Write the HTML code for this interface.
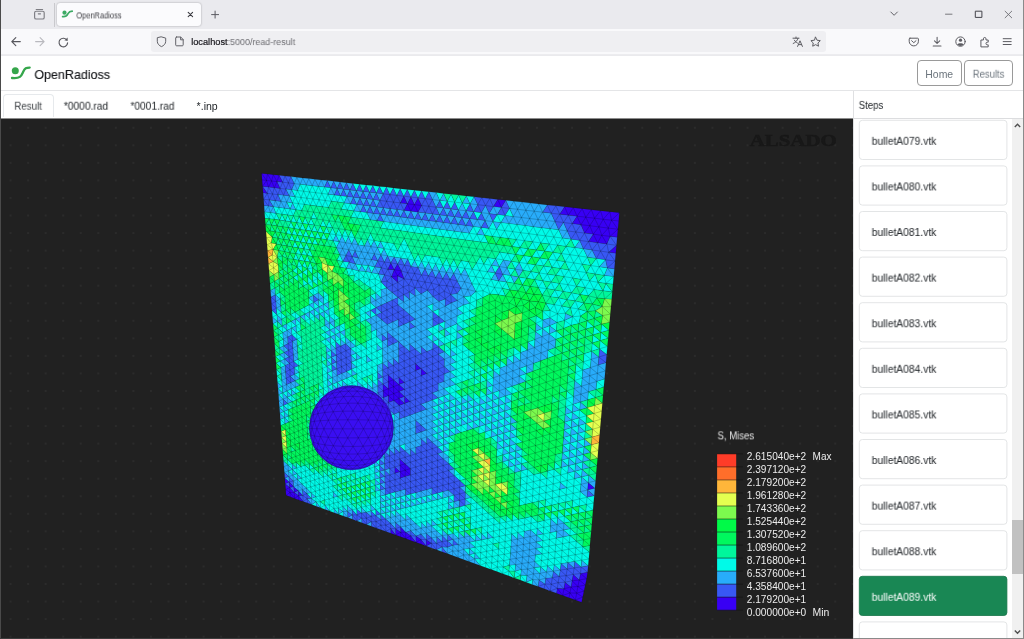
<!DOCTYPE html>
<html lang="en">
<head>
<meta charset="utf-8">
<title>OpenRadioss</title>
<style>
*{box-sizing:border-box;margin:0;padding:0}
html,body{width:1024px;height:639px;overflow:hidden;background:#fff}
body{position:relative;font-family:"Liberation Sans","DejaVu Sans",sans-serif;color:#212529}
.abs{position:absolute}
.t{position:absolute;white-space:nowrap;line-height:1;transform-origin:0 0;will-change:transform}
#tabbar{left:0;top:0;width:1024px;height:29px;background:#eaeaee}
#tab{left:57px;top:3px;width:144px;height:23px;background:#fbfbfd;border-radius:3px;box-shadow:0 0 2px rgba(0,0,0,.35)}
#navbar{left:0;top:29px;width:1024px;height:27px;background:#f9f9fb;border-bottom:1px solid #eaeaed;box-shadow:inset 0 -2px 0 -1px #ececef}
#url{left:151px;top:31px;width:675px;height:21px;background:#efeff2;border-radius:3px}
#hdr{left:0;top:56px;width:1024px;height:35px;background:#fff;border-bottom:1px solid #e4e5e7}
.btn{position:absolute;top:60px;height:26px;border:1px solid #9a9a9a;border-radius:4px;background:#fff}
#tabs{left:0;top:91px;width:853px;height:27px;background:#fff}
#acttab{left:3px;top:94px;width:51px;height:23px;border:1px solid #e6e9ec;border-bottom:none;border-radius:4px 4px 0 0;background:#fff}
#canvas{left:0;top:118px;width:853px;height:521px;background-color:#212121;background-image:radial-gradient(circle,#2b2b2b .7px,rgba(43,43,43,0) 1.4px);background-size:17.55px 17.55px;background-position:1.8px 1px;overflow:hidden}
#side{left:853px;top:91px;width:171px;height:548px;background:#fff;border-left:1px solid #dfe0e2}
#sidehdr{left:853px;top:91px;width:171px;height:28px;border-bottom:1px solid #dcdddf;border-left:1px solid #dfe0e2;background:#fff}
.it{position:absolute;left:859px;width:148px;height:39px;border:1px solid #d6d8da;border-radius:4px;background:#fff}
.it.on{background:#198754;border-color:#157347}
#sb{left:1012px;top:119px;width:11px;height:520px;background:#f0f0f0}
#thumb{left:1012px;top:520px;width:11px;height:54px;background:#c1c1c1}
</style>
</head>
<body>
<!-- Browser tab strip -->
<div id="tabbar" class="abs"></div>
<div class="abs" style="left:54px;top:3px;width:1px;height:24px;background:#c9c9cd"></div>
<div id="tab" class="abs"></div>
<div id="navbar" class="abs"></div>
<div id="url" class="abs"></div>
<svg class="abs" style="left:0;top:0" width="1024" height="56" viewBox="0 0 1024 56" fill="none" stroke-linecap="round" stroke-linejoin="round">
  <g stroke="#7d7d83" stroke-width="1.15">
    <rect x="34.6" y="11.2" width="9.6" height="7.8" rx="1.6"/>
    <path d="M36.2 9.5h6.4M38.3 13.8h2.2"/>
  </g>
  <circle cx="64.5" cy="12.7" r="2.1" fill="#3caa64"/>
  <path d="M62.6 16.6c4.2 .5 4.6-1.4 5.6-3.3s1.6-2.1 4-2.1" stroke="#3caa64" stroke-width="1.7"/>
  <path d="M188.2 12.3l4.4 4.4M192.6 12.3l-4.4 4.4" stroke="#3a3a40" stroke-width="1.1"/>
  <path d="M211.6 14.6h7M215.1 11.1v7" stroke="#5b5b62" stroke-width="1"/>
  <path d="M20.3 41.6h-8M15.8 37.6l-4 4 4 4" stroke="#57575d" stroke-width="1.15"/>
  <path d="M35.6 41.6h8M40.1 37.6l4 4-4 4" stroke="#b9b9be" stroke-width="1.1"/>
  <path d="M67 40.3a4.3 4.3 0 1 0 .6 2.6" stroke="#57575d" stroke-width="1.15"/>
  <path d="M67.6 37.4v3.2h-3.2z" fill="#57575d" stroke="none"/>
  <path d="M161.5 36.9l4.2 1.2v3.2c0 2.6-2 4.4-4.2 5.3-2.2-.9-4.2-2.7-4.2-5.3v-3.2z" stroke="#626268" stroke-width="1"/>
  <path d="M176.6 37h4.1l2.500 2.500v5.400a.9 .9 0 0 1-.9 .9h-5.700a.9 .9 0 0 1-.9-.9v-7a.9 .9 0 0 1 .9-.9zM180.600 37.200v2.600h2.500" stroke="#626268" stroke-width="1"/>
  <g stroke="#5c5c62" stroke-width="1">
    <path d="M793 38.2h6M796 37v1.200M798 38.300c-.6 2.400-2.400 4.200-4.800 5.200M794.400 40.200c.7 1.300 1.800 2.300 3.100 2.900"/>
    <path d="M797.600 46.400l2.400-5.600 2.400 5.600M798.500 44.600h3"/>
  </g>
  <path d="M815.600 37.200l1.450 3 3.250 .45-2.350 2.300 .55 3.250-2.900-1.550-2.900 1.550 .55-3.250-2.350-2.300 3.250-.45z" stroke="#5c5c62" stroke-width="1"/>
  <path d="M910 38.200h7.600a.8 .8 0 0 1 .8 .8v2.300a4.600 4.600 0 0 1-9.200 0v-2.300a.8 .8 0 0 1 .8-.8zM911.600 40.700l2.200 2 2.200-2" stroke="#5c5c62" stroke-width="1"/>
  <path d="M937.100 37.200v6M934.500 40.900l2.600 2.600 2.600-2.600M933.200 45.900h7.800" stroke="#5c5c62" stroke-width="1.05"/>
  <circle cx="960.500" cy="41.600" r="4.700" stroke="#5c5c62" stroke-width="1"/>
  <circle cx="960.500" cy="40.200" r="1.600" fill="#5c5c62"/>
  <path d="M957.400 44.600c.6-1.700 5.600-1.700 6.200 0-1.500 1.900-4.700 1.900-6.200 0z" fill="#5c5c62"/>
  <path d="M981.300 40h2.100v-1.200a1.300 1.300 0 0 1 2.600 0v1.200h2.200v2.200h-.9a1.300 1.300 0 0 0 0 2.600h.9v2.100h-6.900z" stroke="#5c5c62" stroke-width="1"/>
  <path d="M1003.200 38.700h8M1003.200 41.600h8M1003.200 44.500h8" stroke="#5c5c62" stroke-width="1"/>
  <path d="M890.800 12l3.300 3.300 3.300-3.300" stroke="#626268" stroke-width="1"/>
  <path d="M945.500 14.200h6.500" stroke="#77777c" stroke-width="1"/>
  <rect x="975.700" y="11.200" width="6.200" height="6.200" stroke="#44444a" stroke-width="1"/>
  <path d="M1005.100 11.200l6.600 6.600M1011.700 11.200l-6.600 6.600" stroke="#6c6c72" stroke-width=".9"/>
</svg>

<!-- Page header -->
<div id="hdr" class="abs"></div>
<svg class="abs" style="left:8px;top:62px" width="24" height="20" viewBox="8 62 24 20" fill="none">
  <circle cx="15.300" cy="70.800" r="3.500" fill="#35a64b"/>
  <path d="M12 78c8.500 1 9.500-2.500 11.200-6.200s3-4.200 6.500-4.200" stroke="#35a64b" stroke-width="2.300" stroke-linecap="round"/>
</svg>
<div class="btn" style="left:917px;width:45px"></div>
<div class="btn" style="left:964px;width:49px"></div>

<!-- Tabs -->
<div id="tabs" class="abs"></div>
<div id="acttab" class="abs"></div>

<!-- 3D viewport -->
<div id="canvas" class="abs">
<div class="abs" style="left:0;top:0;width:853px;height:1px;background:#8c8c8c"></div>
<svg class="abs" style="left:0;top:-118px" width="853" height="639" viewBox="0 0 853 639">
<g stroke="#000" stroke-opacity=".14" stroke-width=".78" stroke-linejoin="round">
<path fill="#3800f4" d="M280.1 188.4l-5.8-.6 2.7-6.2zM273.3 174.7l5.8 .6-2.1 6.3zM611.5 220.2l-1.7-8.5 9.6 1.1zM591.3 209.7l-5.5 7.5-3.6-8.5zM598.9 226.9l9.4 1.2-6.5 7.2zM421.1 375.8l0-7.3 5.7 5zM579.2 580l1.3-6.5 6.1 5.2zM267.4 193.4l-4.3-.6-.5-6.4zM279.1 175.3l3.6 6.9-5.7-.6zM266.5 180.5l-4.4-.6-.5-6.5zM262.1 179.9l4.4 .6-3.9 5.9zM267.4 174l-.9 6.5-4.9-7.1zM271.6 181l1.7-6.3 3.7 6.9zM274.3 187.8l-2.7-6.8 5.4 .6zM271.6 181l-4.2-7 5.9 .7zM267.4 174l4.2 7-5.1-.5zM266.5 180.5l2 6.6-5.9-.7zM268.5 187.1l3.1-6.1 2.7 6.8zM271.6 181l-3.1 6.1-2-6.6zM294.2 492.5l-.5-5.8 4.5 3.8zM611.5 220.2l6.4 9-9.6-1.1zM608.3 228.1l1.8 8.3-8.3-1.1zM617.9 229.2l-7.8 7.2-1.8-8.3zM610.1 236.4l7.8-7.2-.7 8zM564.6 206.8l8.7 .9-5 7.5zM573.3 207.7l3.7 8.5-8.7-1zM585.8 217.2l-8.8-1 5.2-7.5zM577 216.2l-3.7-8.5 8.9 1zM609.8 211.7l-6.6 7.6-2.7-8.6zM611.5 220.2l-8.3-.9 6.6-7.6zM603.2 219.3l8.3 .9-3.2 7.9zM598.9 226.9l4.3-7.6 5.1 8.8zM593.2 234.2l5.7-7.3 2.9 8.4zM404.4 382.4l-5.4 2.2-.1-7.1zM415.4 370.8l0-7.2 5.7 4.9zM410.9 211.3l-7-.9 3.5-6.6zM585.3 585l-6.1-5 7.4-1.3zM571 587l-7.1 1.8 1.1-6.6zM563.9 588.8l7.1-1.8-1 5.9zM421 544.1l0-4.6 5.2 6.5zM421 539.5l0 4.6-5.1-1.8zM285.7 489.5l4.3 3-3.9 2.8zM289.6 487.5l-3.9 2-.5-5.7zM289.6 487.5l.4 5-4.3-3zM290 492.5l-.4-5 4.6 5zM618.7 221l-7.2-.8 7.9-7.4zM618.7 221l-.8 8.2-6.4-9zM559.7 214.2l4.9-7.4 3.7 8.4zM580.9 224.7l-8.8-1.1 4.9-7.4zM580.9 224.7l-3.9-8.5 8.8 1zM594.6 218.2l8.6 1.1-4.3 7.6zM591.3 209.7l3.3 8.5-8.8-1zM594.6 218.2l-3.3-8.5 9.2 1zM603.2 219.3l-8.6-1.1 5.9-7.5zM616.5 245.3l-.7 7.9-7.1-.9zM382.9 384l5.4 4.8-5.2 2.1zM388.1 374.8l5.4 4.9-5.3 2.1zM399.1 398.5l0-6.9 5.4 4.9zM404.5 389.4l-5.4 2.2-.1-7zM400.4 202.9l3.4-6.7 3.6 7.6zM580.5 573.5l7.1-1.2-1 6.4zM575.4 600l7.3-3-1.1 5.3zM575.4 600l-6.4-2.3 1-4.8zM577.9 586.5l7.4-1.5-1.3 6.1zM585.3 585l-7.4 1.5 1.3-6.5zM569 597.7l-6.3-2.2 7.3-2.6zM562.7 595.5l1.2-6.7 6.1 4.1zM557.3 588.3l5.4 7.2-6.2-2.3zM563.9 588.8l-1.2 6.7-5.4-7.2zM426.2 539.7l5.2 3.5-5.2 2.8zM390.8 533.2l-.1-4.6 5 6.4zM302.8 495.5l-4.2 .1-.4-5.1zM298.6 495.6l4.6 5.9-4.4-1.6zM294.6 498.4l-4.6-5.9 4.2 0zM294.6 498.4l4-2.8 .2 4.3zM298.6 495.6l-4 2.8-.4-5.9zM593.2 234.2l-3.4-8.5 9.1 1.2zM589.8 225.7l4.8-7.5 4.3 8.7zM589.8 225.7l3.4 8.5-8.7-1.1zM580.9 224.7l8.9 1-5.3 7.4zM589.8 225.7l-8.9-1 4.9-7.5zM594.6 218.2l-4.8 7.5-4-8.5zM610.1 236.4l-3.2 7.6-5.1-8.7zM388.3 388.8l.1 6.9-5.3-4.8zM399.1 391.6l-5.5-4.9 5.4-2.1zM393.6 386.7l-5.3 2.1-.1-7zM393.5 379.7l.1 7-5.4-4.9zM393.6 386.7l-.1-7 5.5 4.9zM394.1 269.7l7.2 1.2-3.6 5zM401.3 270.9l-7.2-1.2 3.5-5.7zM391.5 276.7l2.6-7 3.6 6.2zM397.8 282.4l-6.3-5.7 6.2-.8zM579.2 580l-7.1 .8 1.1-6.4zM577.9 586.5l-5.8-5.7 7.1-.8zM572.1 580.8l5.8 5.7-6.9 .5zM571 587l5.7 6.2-6.7-.3zM577.9 586.5l-1.2 6.7-5.7-6.2zM576.7 593.2l-1.3 6.8-5.4-7.1zM575.4 600l1.3-6.8 6 3.8zM582.7 597l-6-3.8 7.3-2.1zM576.7 593.2l1.2-6.7 6.1 4.6zM415.9 536l5.1 3.5-5.1 2.8zM588.2 482.6l6.7 5.7-7.3 1.7zM290 492.5l.3 4.3-4.2-1.5zM294.6 498.4l-4.3-1.6-.3-4.3zM289.6 487.5l-.4-5.4 4.5 4.6zM284.8 478.1l4.4 4-4 1.7zM597.6 242.8l-4.4-8.6 8.6 1.1zM597.6 242.8l-9.1-1.2 4.7-7.4zM606.9 244l-9.3-1.2 4.2-7.5zM393.7 393.6l-5.3 2.1-.1-6.9zM393.6 386.7l.1 6.9-5.4-4.8zM393.7 393.6l-.1-6.9 5.5 4.9zM393.7 393.6l5.4-2 0 6.9zM388.4 395.7l-5.2 2.1-.1-6.9zM410 401.4l-5.4 2-.1-6.9zM401.3 270.9l2.8 8-6.4-3zM414.4 204.6l3.6 7.6-7.1-.9zM414.4 204.6l-3.5 6.7-3.5-7.5zM410.9 197l3.5 7.6-7-.8zM414.4 204.6l3.6-6.7 3.6 7.6zM418 212.2l-3.6-7.6 7.2 .9zM395.6 528.7l5.1 3.5-5 2.8zM400.7 532.2l0 4.6-5-1.8zM400.7 536.8l0-4.6 5 6.4zM405.2 476.6l0-6.4 5.3 4.9zM405.2 470.2l5.2-1.6 .1 6.5zM393.8 400.6l-.1-7 5.4 4.9zM393.7 393.6l.1 7-5.4-4.9zM390.8 262.8l3.3 6.9-6.3-.3zM410.8 540.4l0-4.6 5.1 6.5zM410.8 535.8l0 4.6-5.1-1.8zM400 471.8l-5.1 1.5-.1-6.3zM405.2 476.6l-5.2-4.8 5.2-1.6zM400.1 478.2l-.1-6.4 5.2 4.8zM405.2 470.2l-5.2 1.6-.1-6.4zM399.8 458.9l5.3 4.9-5.2 1.6zM405.1 463.8l.1 6.4-5.3-4.8zM405.1 463.8l5.3 4.8-5.2 1.6zM501.4 207.5l-3.7-8.1 8.1 .9zM493.4 206.6l4.3-7.2 3.7 8.1zM404.6 403.4l-5.4 2-.1-6.9zM399.2 405.4l-5.4-4.8 5.3-2.1zM393.8 400.6l-5.3 2-.1-6.9zM405.7 532.3l-5-.1-.1-5.4zM405.7 532.3l5.1 3.5-5.1 2.8zM400.7 532.2l5 .1 0 6.3z"/>
<path fill="#3858f4" d="M426.8 380.8l-.1 7.2-5.6-5zM426.7 388l5.8-2.2-.1 7.2zM432.5 385.8l-5.8 2.2 .1-7.2zM453.4 287l3.9 6.6-6.5 .9zM432.5 378.5l-5.7 2.3 0-7.3zM432.5 371.3l0 7.2-5.7-5zM432.5 378.5l0 7.3-5.7-5zM432.5 385.8l5.7 5-5.8 2.2zM459.9 480.6l-5.7 1.6 .1-6.6zM269.4 199.9l-2-6.5 5.1 .6zM269.4 199.9l-1 6.2-4.8-6.8zM267.4 193.4l2 6.5-5.8-.6zM285.5 371.9l-.4-6.5 4.8 4.5zM426.8 380.8l-5.7-5 5.7-2.3zM421.1 375.8l5.7 5-5.7 2.2zM415.5 378l5.6-2.2 0 7.2zM426.8 366.2l-5.7 2.3 0-7.2zM426.8 366.2l5.7 5.1-5.7 2.2zM421.1 368.5l5.7-2.3 0 7.3zM421.1 375.8l-5.7-5 5.7-2.3zM415.4 370.8l.1 7.2-5.6-4.9zM415.4 370.8l5.7 5-5.6 2.2zM415.4 356.3l5.7-2.4 0 7.4zM376.3 193l-6.7-.7 3.2-6.7zM366.5 198.8l-6.6-.8 3.1-6.5zM366.5 198.8l3.1-6.5 3.5 7.3zM366.1 184.9l3.5 7.4-6.6-.8zM356.4 190.8l3.1-6.6 3.5 7.3zM356.4 190.8l3.5 7.2-6.5-.7zM356.4 190.8l-6.5-.8 3-6.5zM398.2 319.6l5.7 4.8-5.6 2.5zM580.5 573.5l-1.3 6.5-6-5.6zM550.3 591l7-2.7-.8 4.9zM557.3 588.3l-7 2.7 1-6.7zM559.2 576.4l-6.9 1.3 1-6.5zM452.9 545.3l-5.5 1.9 .1-6.3zM447.4 547.2l-5.3-5.7 5.4-.6zM432.5 378.5l5.7 5.1-5.7 2.2zM438.2 383.6l0 7.2-5.7-5zM426.7 388l-5.6 2.1 0-7.1zM454.2 482.2l-5.6-5 5.7-1.6zM448.6 477.2l.1-6.7 5.6 5.1zM263.1 192.8l4.3 .6-3.8 5.9zM268.4 206.1l-4.3-.4-.5-6.4zM269.4 199.9l4 6.9-5-.7zM282.7 182.2l-3.6-6.9 5.9 .7zM282.7 182.2l-2.6 6.2-3.1-6.8zM282.7 182.2l3.2 6.9-5.8-.7zM268.5 187.1l-1.1 6.3-4.8-7zM267.4 193.4l1.1-6.3 4 6.9zM268.5 187.1l5.8 .7-1.8 6.2zM567.2 230.9l4.9-7.3 3.7 8.4zM577 216.2l-4.9 7.4-3.8-8.4zM584.5 233.1l-4.8 7.3-3.9-8.4zM608.7 252.3l7.1 .9-.7 7.9zM598.8 357l7.2 5.7-7.9 2.4zM509.5 208.4l-8.1-.9 4.4-7.2zM393.4 372.6l5.4-2.2 .1 7.1zM393.3 365.5l.1 7.1-5.5-4.8zM393.4 372.6l-.1-7.1 5.5 4.9zM410 394.4l0 7-5.5-4.9zM404.3 375.3l.1 7.1-5.5-4.9zM398.8 370.4l5.5 4.9-5.4 2.2zM404.3 375.3l0-7.1 5.6 4.9zM404.3 368.2l0 7.1-5.5-4.9zM421.1 353.9l5.7 5-5.7 2.4zM426.8 358.9l0 7.3-5.7-4.9zM426.8 351.5l-5.7 2.4 0-7.3zM426.8 351.5l0 7.4-5.7-5zM426.8 358.9l0-7.4 5.8 5.1zM421.1 368.5l-5.7-4.9 5.7-2.3zM415.4 363.6l0-7.3 5.7 5zM415.4 356.3l0 7.3-5.6-5zM409.7 351.4l5.7 4.9-5.6 2.3zM376.3 193l3.2-6.6 3.6 7.4zM386.6 201.3l-6.8-.9 3.3-6.6zM376.3 193l3.5 7.4-6.7-.8zM342.9 261.6l2.9-6.1 3.3 6.7zM377.7 260.8l3.5 6.9-6.5-.8zM377.7 260.8l-6.4-1.1 3-6zM346.4 182.7l3.5 7.3-6.4-.7zM346.9 196.5l3-6.5 3.5 7.3zM346.9 196.5l-6.4-.8 3-6.4zM386.4 187.1l3.5 7.5-6.8-.8zM389.9 194.6l-3.3 6.7-3.5-7.5zM386.6 201.3l3.3-6.7 3.6 7.5zM389.9 194.6l6.9 .8-3.3 6.7zM396.8 195.4l-6.9-.8 3.4-6.7zM356.8 204.5l3.1-6.5 3.5 7.3zM403.8 317l.1 7.4-5.7-4.8zM403.9 324.4l-.1-7.4 5.8 4.9zM450 279.3l-7.3-.5 3.6-6.5zM431.4 283l7.7 2.1-5.2 4.2zM398 297.4l5.7-2.8 .1 7.5zM409.5 314.4l-5.7 2.6 0-7.4zM403.8 317l5.7-2.6 .1 7.5zM409.6 299.5l-5.9-4.9 5.7-2.5zM574.1 567.9l6.4 5.6-7.3 .9zM581.1 566.9l-7 1 .6-6.6zM574.1 567.9l7-1-.6 6.6zM567.2 569.1l-7 1 .8-6.5zM567.2 569.1l6.9-1.2-.9 6.5zM574.1 567.9l-6.9 1.2 .6-6.6zM552.3 577.7l5.9 4.9-6.9 1.7zM558.2 582.6l-.9 5.7-6-4zM559.2 576.4l-1 6.2-5.9-4.9zM558.2 582.6l1-6.2 5.8 5.8zM563.9 588.8l-5.7-6.2 6.8-.4zM558.2 582.6l5.7 6.2-6.6-.5zM452.9 545.3l.1-5.9 5.4 5.3zM447.7 534.7l5.3 4.7-5.5 1.5zM431.4 543.2l5.3 .2-.1 6.4zM431.4 547.9l0-4.7 5.2 6.6zM431.4 543.2l0 4.7-5.2-1.9zM442 547l.1-5.5 5.3 5.7zM441.9 551.7l.1-4.7 5.2 6.6zM442.1 541.5l-.1 5.5-5.3-3.6zM436.7 543.4l5.3 3.6-5.4 2.8zM465.2 498.9l-5.7 1.5 .1-6.5zM465.4 492.4l-.2 6.5-5.6-5zM438.3 376.3l-.1 7.3-5.7-5.1zM438.3 376.3l-5.8 2.2 0-7.2zM415.5 385.2l0-7.2 5.6 5zM421.1 390.1l-5.6-4.9 5.6-2.2zM438.1 398l-5.7 2.1 0-7.1zM459.8 487.3l-5.6-5.1 5.7-1.6zM459.8 487.3l5.6 5.1-5.8 1.5zM465.6 485.7l-5.8 1.6 .1-6.7zM341.2 359.9l4.9-2.2 .3 6.8zM282.7 182.2l5.7 .7-2.5 6.2zM288.4 182.9l2.5-6.3 3.4 7zM290.9 176.6l-2.5 6.3-3.4-6.9zM288.4 182.9l-5.7-.7 2.3-6.2zM274.3 187.8l3.7 6.8-5.5-.6zM278 194.6l-3.7-6.8 5.8 .6zM275.3 200.7l-5.9-.8 3.1-5.9zM278 194.6l-2.7 6.1-2.8-6.7zM275.3 200.7l2.7-6.1 3 6.8zM376.1 527.9l4.8-2.8 .1 4.6zM376 521.7l4.9 3.4-4.8 2.8zM448.5 483.8l-5.6 1.5 .1-6.6zM448.6 477.2l-.1 6.6-5.5-5.1zM448.5 483.8l.1-6.6 5.6 5zM454 488.8l5.8-1.5-.2 6.6zM459.8 487.3l-5.8 1.5 .2-6.6zM454 488.8l-5.5-5 5.7-1.6zM437.4 480.3l5.5 5-5.6 1.5zM442.9 485.3l-5.5-5 5.6-1.6zM437.4 480.3l.1-6.6 5.5 5zM437.5 473.7l-.1 6.6-5.5-5zM448.7 470.5l.1-6.7 5.6 5zM307.2 498.7l-4.4-3.2 4.1-2zM303.2 501.5l-.4-6 4.4 3.2zM311.5 498.6l-4.3 .1-.3-5.2zM302.8 495.5l-.4-5.8 4.5 3.8zM289.6 487.5l4.1-.8 .5 5.8zM564.6 206.8l-4.9 7.4-3.8-8.4zM559.7 214.2l-8.6-1 4.8-7.4zM551.1 213.2l8.6 1-4.8 7.3zM580.9 224.7l3.6 8.4-8.7-1.1zM572.1 223.6l8.8 1.1-5.1 7.3zM547.3 204.9l3.8 8.3-8.5-1zM551.1 213.2l-3.8-8.3 8.6 .9zM616.5 245.3l-6.4-8.9 7.1 .8zM605.5 259.8l3.2-7.5 6.4 8.8zM598.8 357l7.9-2.4-.7 8.1zM505.1 215.5l-3.7-8 8.1 .9zM473.6 211.7l3.7 7.9-7.7-.9zM377.9 392.9l-.2-6.8 5.4 4.8zM382.9 384l-5.2 2.1-.1-6.9zM382.9 384l-.1-7 5.4 4.8zM388.3 388.8l-5.4-4.8 5.3-2.2zM377.7 386.1l5.2-2.1 .2 6.9zM336.1 355.2l-4.8 2.2-.3-6.8zM336.4 362.1l-.3-6.9 5.1 4.7zM426.6 443.7l-5.5 1.8 0-6.7zM415.7 447.3l5.4-1.8 0 6.7zM415.7 453.9l-5.4 1.7 0-6.6zM421.1 458.8l-5.4-4.9 5.4-1.7zM415.7 453.9l0-6.6 5.4 4.9zM405 450.7l5.3 4.9-5.2 1.7zM398.7 363.3l5.6 4.9-5.5 2.2zM393.3 365.5l5.4-2.2 .1 7.1zM398.7 363.3l-5.4 2.2-.1-7.1zM398.7 363.3l5.5-2.3 .1 7.2zM382.8 377l5.3-2.2 .1 7zM388.1 374.8l-5.3 2.2-.2-7zM387.9 367.8l.2 7-5.5-4.8zM393.4 372.6l-5.3 2.2-.2-7zM377.4 372.2l5.4 4.8-5.2 2.2zM415.5 392.3l5.6-2.2 0 7.1zM415.5 392.3l0-7.1 5.6 4.9zM399 384.6l-5.5-4.9 5.4-2.2zM393.5 379.7l-.1-7.1 5.5 4.9zM393.5 379.7l-5.4-4.9 5.3-2.2zM404.5 389.4l-5.5-4.8 5.4-2.2zM404.5 389.4l5.5 5-5.5 2.1zM399.1 391.6l5.4-2.2 0 7.1zM438.5 354.2l-.1 7.4-5.8-5zM415.4 356.3l0-7.3 5.7 4.9zM409.7 351.4l5.7-2.4 0 7.3zM382.5 362.9l5.4 4.9-5.3 2.2zM473.3 226.5l-7.6-1 3.9-6.8zM418.1 267.4l3.4 7.5-6.9-1.5zM381.2 267.7l6.6 1.7-3.4 5.5zM383.3 207.8l-3.5-7.4 6.8 .9zM379.8 200.4l3.5 7.4-6.7-.8zM396.8 195.4l3.4-6.7 3.6 7.5zM425.2 213.1l-7.2-.9 3.6-6.7zM352.2 256.7l-6.4-1.2 3-5.8zM345.8 255.5l6.4 1.2-3.1 5.5zM352.2 256.7l2.9-5.9 3.3 7.2zM337.1 188.5l2.9-6.5 3.5 7.3zM366.5 198.8l3.4 7.3-6.5-.8zM376.6 207l-6.7-.9 3.2-6.5zM397 209.5l-6.9-.8 3.4-6.6zM390.1 208.7l-3.5-7.4 6.9 .8zM390.1 208.7l-6.8-.9 3.3-6.5zM407.5 217.9l-7-.9 3.4-6.6zM400.4 202.9l-3.6-7.5 7 .8zM397 209.5l3.4-6.6 3.5 7.5zM396.8 195.4l3.6 7.5-6.9-.8zM400.4 202.9l-3.4 6.6-3.5-7.4zM403.9 210.4l-3.5-7.5 7 .9zM432.7 349.1l0-7.4 5.9 5zM438.5 354.2l-5.8-5.1 5.9-2.4zM432.7 349.1l5.8 5.1-5.9 2.4zM426.8 351.5l5.9-2.4-.1 7.5zM415.3 326.7l-5.7 2.6 0-7.4zM439.1 285.1l-.1 8.9-5.1-4.7zM446.8 285.7l-7.7-.6 3.6-6.3zM446.8 285.7l3.2-6.4 3.4 7.7zM450 279.3l-3.2 6.4-4.1-6.9zM446.8 285.7l6.6 1.3-2.6 7.5zM415 288l.3 8.1-5.9-4zM408.8 285l6.2 3-5.6 4.1zM435.6 277.6l3.6-6.3 3.5 7.5zM439.1 285.1l-3.5-7.5 7.1 1.2zM431.4 283l4.2-5.4 3.5 7.5zM435.6 277.6l-4.2 5.4-3-7.3zM432.2 270l3.4 7.6-7.2-1.9zM444.8 321.5l-6 2.6 0-7.5zM439 294l-6.2 2.6 1.1-7.3zM432.8 296.6l6.2-2.6 0 7.5zM397.9 290.1l5.8 4.5-5.7 2.8zM432.8 319.1l0-7.6 6 5.1zM438.8 324.1l-6-5 6-2.5zM432.8 319.1l6 5-6 2.6zM409.5 314.4l5.8 4.8-5.7 2.7zM587.6 572.3l-6.5-5.4 7.1-1.2zM581.1 566.9l6.5 5.4-7.1 1.2zM566.1 575.6l-6.9 .8 1-6.3zM567.2 569.1l-1.1 6.5-5.9-5.5zM566.1 575.6l1.1-6.5 6 5.3zM559.2 576.4l6.9-.8-1.1 6.6zM544.9 583.9l-.7 4.9-6.1-2.2zM539 579.9l5.9 4-6.8 2.7zM550.3 591l-5.4-7.1 6.4 .4zM544.2 588.8l.7-4.9 5.4 7.1zM421 539.5l5.2 .2 0 6.3zM431.5 537.8l-5.3 1.9 .1-6.3zM426.2 539.7l5.3-1.9-.1 5.4zM431.4 543.2l.1-5.4 5.2 5.6zM465.2 498.9l-.1 6.6-5.6-5.1zM450 279.3l7.2 1.7-3.8 6zM444.4 359.2l-6 2.4 .1-7.4zM444.5 351.7l-6 2.5 .1-7.5zM444.1 381.4l-5.8-5.1 5.9-2.3zM438.3 376.3l5.8 5.1-5.9 2.2zM415.5 385.2l-5.6-5 5.6-2.2zM415.5 378l-5.6 2.2 0-7.1zM409.9 380.2l-5.6-4.9 5.6-2.2zM404.3 375.3l5.6 4.9-5.5 2.2zM421.1 404.3l-5.6-5 5.6-2.1zM415.5 399.3l0-7 5.6 4.9zM415.5 392.3l0 7-5.5-4.9zM410 394.4l5.5 4.9-5.5 2.1zM432.4 400.1l-5.7-5 5.7-2.1zM421.1 390.1l5.6 5-5.6 2.1zM426.7 395.1l0-7.1 5.7 5zM426.7 395.1l-5.6-5 5.6-2.1zM426.7 402.2l-5.6 2.1 0-7.1zM426.7 395.1l0 7.1-5.6-5zM426.7 402.2l0-7.1 5.7 5zM288.5 350.2l.5 6.6-4.9-4.4zM345.9 350.7l-.3-6.9 5.2 4.7zM288.4 182.9l3.3 6.9-5.8-.7zM291.7 189.8l-3.3-6.9 5.9 .7zM285.9 189.1l-2.3 6.2-3.5-6.9zM283.6 195.3l-5.6-.7 2.1-6.2zM375.8 515.6l-.1-6 4.9 4.5zM347.6 511.5l4.7 3.4-4.5 2.7zM380.9 525.1l5 6.3-4.9-1.7zM385.9 531.4l-5-6.3 4.8 .1zM390.7 528.6l-4.8 2.8-.2-6.2zM385.9 531.4l4.8-2.8 .1 4.6zM390.7 528.6l4.9 .1 .1 6.3zM380.9 525.1l-.1-5.3 4.9 5.4zM380.8 519.8l.1 5.3-4.9-3.4zM375.8 515.6l5 4.2-4.8 1.9zM394.7 460.6l5.2 4.8-5.1 1.6zM426.6 436.9l5.5 5-5.5 1.8zM432.1 448.7l0-6.8 5.6 5zM432.1 441.9l0 6.8-5.5-5zM426.7 409.3l-5.6 2 0-7zM421.1 411.3l-5.6-5 5.6-2zM415.5 399.3l0 7-5.5-4.9zM415.5 406.3l0-7 5.6 5zM415.5 406.3l-5.4 2-.1-6.9zM415.5 406.3l5.6 5-5.5 2zM410.1 408.3l5.4-2 .1 7zM415.6 420.2l5.5 4.9-5.5 1.9zM421.1 432l0-6.9 5.5 5zM421.1 425.1l0 6.9-5.5-5zM448.5 483.8l-.1 6.5-5.5-5zM454 488.8l-5.6 1.5 .1-6.5zM442.9 485.3l-.1 6.5-5.5-5zM448.4 490.3l-5.6 1.5 .1-6.5zM459.5 500.4l-5.6-5.1 5.7-1.4zM453.9 495.3l.1-6.5 5.6 5.1zM453.9 495.3l-5.5-5 5.6-1.5zM437.4 480.3l-5.5 1.5 0-6.5zM431.9 481.8l5.5-1.5-.1 6.5zM431.9 488.3l0-6.5 5.4 5zM431.9 481.8l0 6.5-5.4-4.9zM298.6 495.6l-4.4-3.1 4-2zM303.2 501.5l-4.6-5.9 4.2-.1zM307.5 503l-.3-4.3 4.6 5.9zM307.5 503l-4.3-1.5 4-2.8zM284.4 472.4l4.4 4.1-4 1.6zM283.6 405.4l-.5-6.2 4.7 4.4zM290.3 376.3l-4.3 2-.5-6.4zM290.3 376.3l-4.8-4.4 4.4-2zM294.7 374.3l-4.4 2-.4-6.4zM563.5 222.5l-3.8-8.3 8.6 1zM572.1 223.6l-8.6-1.1 4.8-7.3zM563.5 222.5l8.6 1.1-4.9 7.3zM563.5 222.5l-4.9 7.3-3.7-8.3zM559.7 214.2l3.8 8.3-8.6-1zM571 239.3l-3.8-8.4 8.6 1.1zM579.7 240.4l-8.7-1.1 4.8-7.3zM579.7 240.4l8.8 1.2-5.2 7.2zM588.5 241.6l3.5 8.4-8.7-1.2zM588.5 241.6l-8.8-1.2 4.8-7.3zM593.2 234.2l-4.7 7.4-4-8.5zM606.9 244l9.6 1.3-7.8 7zM616.5 245.3l-9.6-1.3 3.2-7.6zM592 250l8.5 1.1-4.2 7.4zM605.5 259.8l-5-8.7 8.2 1.2zM600.5 251.1l5 8.7-9.2-1.3zM600.5 251.1l6.4-7.1 1.8 8.3zM599.4 348.8l7.3 5.8-7.9 2.4zM505.1 215.5l-7.9-.9 4.2-7.1zM378 399.8l5.3 4.8-5.1 1.9zM410.1 415.2l0-6.9 5.5 5zM410.1 415.2l-5.5-4.9 5.5-2zM351.6 369.2l-4.9 2.2-.3-6.9zM346.1 357.7l5.3 4.6-5 2.2zM351.4 362.3l.2 6.9-5.2-4.7zM341 353l5.1 4.7-4.9 2.2zM336.1 355.2l4.9-2.2 .2 6.9zM341 353l4.9-2.3 .2 7zM336.4 362.1l-4.8 2.1-.3-6.8zM415.7 460.5l0-6.6 5.4 4.9zM415.7 453.9l0 6.6-5.4-4.9zM409.8 365.9l5.6-2.3 0 7.2zM404.2 361l5.6 4.9-5.5 2.3zM415.4 363.6l-5.6 2.3 0-7.3zM409.8 365.9l-5.6-4.9 5.6-2.4zM409.8 365.9l5.6 4.9-5.5 2.3zM404.3 368.2l5.5-2.3 .1 7.2zM415.5 392.3l-5.6-5 5.6-2.1zM409.9 380.2l0 7.1-5.5-4.9zM409.9 387.3l0-7.1 5.6 5zM409.9 387.3l-5.4 2.1-.1-7zM409.9 387.3l5.6 5-5.5 2.1zM404.5 389.4l5.4-2.1 .1 7.1zM444.3 366.6l5.9 5.1-6 2.3zM444.4 359.2l-.1 7.4-5.9-5zM444.3 366.6l-5.9 2.4 0-7.4zM438.4 369l5.9-2.4-.1 7.4zM438.4 369l-.1 7.3-5.8-5zM438.3 376.3l.1-7.3 5.8 5zM432.6 363.9l-5.8-5 5.8-2.3zM438.4 361.6l-5.8 2.3 0-7.3zM426.8 358.9l5.8 5-5.8 2.3zM438.4 369l-5.8-5.1 5.8-2.3zM426.8 366.2l5.8-2.3-.1 7.4zM432.6 363.9l5.8 5.1-5.9 2.3zM392.9 336.7l5.6 4.9-5.5 2.4zM404.2 353.7l5.5-2.3 .1 7.2zM404.2 353.7l-.1-7.2 5.6 4.9zM404.2 361l0-7.3 5.6 4.9zM409.7 344.1l5.7 4.9-5.7 2.4zM398.7 363.3l-.1-7.2 5.6 4.9zM398.6 356.1l5.6-2.4 0 7.3zM387.8 360.7l5.5 4.8-5.4 2.3zM386.9 309.9l-5.4 2.5-.2-7.4zM381.5 312.4l.1 7.3-5.5-4.7zM387.4 339.1l-.1-7.2 5.6 4.8zM387.4 339.1l5.5-2.4 .1 7.3zM387.6 346.4l-.2-7.3 5.6 4.9zM425.2 198.7l-7.2-.8 3.6-6.9zM418 197.9l7.2 .8-3.6 6.8zM425.2 198.7l3.6-6.9 3.7 7.7zM415 288l6.2-.8-.1 6.7zM384.4 262l3.4 7.4-6.6-1.7zM377.7 260.8l6.7 1.2-3.2 5.7zM384.4 262l-6.7-1.2 3.2-6zM418 197.9l-7.1-.9 3.5-6.8zM403.8 196.2l7.1 .8-3.5 6.8zM407.3 189.4l3.6 7.6-7.1-.8zM425.2 213.1l3.6-6.8 3.6 7.7zM428.8 206.3l7.3 .9-3.7 6.8zM436.1 207.2l-7.3-.9 3.7-6.8zM428.8 206.3l-3.6-7.6 7.3 .8zM428.8 206.3l-3.6 6.8-3.6-7.6zM425.2 198.7l3.6 7.6-7.2-.8zM414.5 218.8l3.5-6.6 3.6 7.5zM414.5 218.8l-7-.9 3.4-6.6zM337.1 188.5l-6.3-.7 2.8-6.5zM330.8 187.8l-6.3-.7 2.8-6.5zM380.1 214.3l-6.7-.9 3.2-6.4zM380.1 214.3l3.2-6.5 3.5 7.4zM366.8 212.6l3.1-6.5 3.5 7.3zM366.8 212.6l-6.5-.9 3.1-6.4zM400.5 217l-6.9-.9 3.4-6.6zM390.1 208.7l3.5 7.4-6.8-.9zM387 317.3l5.7 4.8-5.5 2.5zM381.6 319.7l5.4-2.4 .2 7.3zM387 317.3l-5.5-4.9 5.4-2.5zM387 317.3l-5.4 2.4-.1-7.3zM386.8 302.5l.1 7.4-5.6-4.9zM398 304.8l-5.7-4.9 5.7-2.5zM444.3 291.2l-5.3 2.8 .1-8.9zM446.8 285.7l-2.5 5.5-5.2-6.1zM444.3 291.2l2.5-5.5 4 8.8zM408.8 285l2.6-5.4 3.6 8.4zM394.1 269.7l-2.6 7-3.7-7.3zM391.5 276.7l-4.5 4.4-2.6-6.2zM387.8 269.4l3.7 7.3-7.1-1.8zM397.9 290.1l5.3-3.2 .5 7.7zM403.7 294.6l-.5-7.7 6.2 5.2zM403.2 286.9l5.6-1.9 .6 7.1zM397.8 282.4l5.4 4.5-5.3 3.2zM378.4 273.9l2.8-6.2 3.2 7.2zM386.5 287.9l-5.4-6 5.9-.8zM387 281.1l-5.9 .8 3.3-7zM572.1 580.8l-1.1 6.2-6-4.8zM566.1 575.6l6 5.2-7.1 1.4zM572.1 580.8l-6-5.2 7.1-1.2zM421 534.1l5.2 5.6-5.2-.2zM415.9 536l5.1-1.9 0 5.4zM442.1 541.5l.1-5.9 5.3 5.3zM436.8 537.1l5.3 4.4-5.4 1.9zM453.4 287l7.7 1.3-3.8 5.3zM457.2 281l3.9 7.3-7.7-1.3zM587.6 490l6.7 5.7-7.3 1.6zM294.2 367.8l.5 6.5-4.8-4.4zM289.4 363.4l-4.8-4.5 4.4-2.1zM293.8 361.3l-4.4 2.1-.4-6.6zM294.2 367.8l-4.8-4.4 4.4-2.1zM285.1 365.4l4.3-2 .5 6.5zM289.4 363.4l4.8 4.4-4.3 2.1zM292.5 341.4l-.5-6.7 4.9 4.5zM271 297.1l4.9 4.3-4.4 2.4zM351.1 355.4l-5.2-4.7 4.9-2.2zM345.9 350.7l5.2 4.7-5 2.3zM351.1 355.4l.3 6.9-5.3-4.6zM289.3 196l-5.7-.7 2.3-6.2zM380 484l-.2-6.1 5.1 4.7zM389.6 462.2l5.1-1.6 .1 6.4zM394.7 460.6l-5.1 1.6-.1-6.4zM380.8 519.8l4.8-.7 .1 6.1zM385.6 519.1l-4.8 .7-.2-5.7zM390.7 528.6l-.1-5.3 5 5.4zM390.6 523.3l.1 5.3-5-3.4zM385.6 519.1l5 4.2-4.9 1.9zM394.6 454.1l.1 6.5-5.2-4.8zM389.4 449.3l5.2 4.8-5.1 1.7zM426.4 489.8l-5.3 1.4 0-6.3zM426.5 483.4l-.1 6.4-5.3-4.9zM431.9 488.3l-5.5 1.5 .1-6.4zM421.1 432l-5.5 1.8 0-6.8zM465.1 505.5l-5.7 1.4 .1-6.5zM426.5 457.1l-5.4 1.7 0-6.6zM426.5 457.1l0 6.7-5.4-5zM426.5 463.8l0-6.7 5.5 5zM437.6 453.7l-5.5-5 5.6-1.8zM443.3 452l-5.7 1.7 .1-6.8zM448.6 477.2l-5.6-5.1 5.7-1.6zM443 472.1l5.6 5.1-5.6 1.5zM437.5 473.7l5.5-1.6 0 6.6zM289.2 482.1l.4 5.4-4.4-3.7zM588.5 241.6l9.1 1.2-5.6 7.2zM597.6 242.8l2.9 8.3-8.5-1.1zM600.5 251.1l-2.9-8.3 9.3 1.2zM614.4 268.9l-7.1-1 7.8-6.8zM607.3 267.9l-1.8-8.1 9.6 1.3zM377.9 392.9l5.3 4.9-5.2 2zM383.2 397.8l-5.3-4.9 5.2-2zM383.5 411.4l-.2-6.8 5.4 4.8zM404.6 410.3l0-6.9 5.5 4.9zM410.1 408.3l-5.5-4.9 5.4-2zM404.6 403.4l-5.5-4.9 5.4-2zM346.7 371.4l-5.2-4.7 4.9-2.2zM341.5 366.7l-.3-6.8 5.2 4.6zM341.5 366.7l-5.1-4.6 4.8-2.2zM336.4 362.1l5.1 4.6-4.8 2.2zM341.5 366.7l.3 6.8-5.1-4.6zM341.8 373.5l-.3-6.8 5.2 4.7zM335.8 348.4l5.2 4.6-4.9 2.2zM331.9 371l-.3-6.8 5.1 4.7zM410.4 462.2l5.3-1.7 0 6.5zM410.3 455.6l.1 6.6-5.3-4.9zM415.7 460.5l-5.3 1.7-.1-6.6zM404.2 353.7l-5.6-4.9 5.5-2.3zM398.6 356.1l0-7.3 5.6 4.9zM398.6 348.8l-.1-7.2 5.6 4.9zM381.9 334.3l5.5 4.8-5.3 2.4zM436.1 207.2l3.7-6.8 3.6 7.7zM436.1 207.2l3.6 7.7-7.3-.9zM431.4 283l-6.4-.9 3.4-6.4zM425 282.1l-3.5-7.2 6.9 .8zM421.5 274.9l-3.8 5.9-3.1-7.4zM417.7 280.8l-6.3-1.2 3.2-6.2zM425 282.1l-7.3-1.3 3.8-5.9zM417.7 280.8l7.3 1.3-3.8 5.1zM417.7 280.8l3.5 6.4-6.2 .8zM411.4 279.6l6.3 1.2-2.7 7.2zM403.2 286.9l.9-8 4.7 6.1zM404.1 278.9l7.3 .7-2.6 5.4zM404.1 278.9l-6.3 3.5-.1-6.5zM404.1 278.9l-.9 8-5.4-4.5zM404.5 265.1l-3.2 5.8-3.7-6.9zM400.9 257.9l3.6 7.2-6.9-1.1zM414.4 204.6l-3.5-7.6 7.1 .9zM421.5 274.9l3.5-6.3 3.4 7.1zM425.2 213.1l3.5 7.6-7.1-1zM443.3 222.6l3.8-6.8 3.6 7.7zM447.1 215.8l-7.4-.9 3.7-6.8zM352.2 256.7l3.3 7.3-6.4-1.8zM334.2 194.9l2.9-6.4 3.4 7.2zM380.1 214.3l3.5 7.3-6.7-.9zM356.8 204.5l-6.4-.8 3-6.4zM403.8 317l-5.7-4.8 5.7-2.6zM398.1 312.2l-.1-7.4 5.8 4.8zM398.1 312.2l5.7 4.8-5.6 2.6zM392.5 284.9l-6 3 .5-6.8zM392.5 284.9l5.3-2.5 .1 7.7zM391.5 276.7l1 8.2-5.5-3.8zM397.8 282.4l-5.3 2.5-1-8.2zM392.2 292.4l5.7-2.3 .1 7.3zM392.2 292.4l.3-7.5 5.4 5.2zM392.5 284.9l-.3 7.5-5.7-4.5zM457.3 300.5l-6 2.4-.5-8.4zM439 294l6.2 4.9-6.2 2.6zM444.3 291.2l.9 7.7-6.2-4.9zM445.2 298.9l6.1 4-6.2 3.4zM445.2 298.9l-.9-7.7 6.5 3.3zM451.3 302.9l-6.1-4 5.6-4.4zM545.7 578.2l6.6-.5-1 6.6zM544.9 583.9l.8-5.7 5.6 6.1zM410.8 535.8l5.1 .2 0 6.3zM400.6 526.8l.1 5.4-5.1-3.5zM453.7 273.3l3.5 7.7-7.2-1.7zM454.5 216.8l3.6 7.7-7.4-1zM298.6 365.7l-4.4 2.1-.4-6.5zM288.5 350.2l4.9 4.5-4.4 2.1zM293.4 354.7l.4 6.6-4.8-4.5zM292.9 348.1l.5 6.6-4.9-4.5zM292.5 341.4l-4.9-4.4 4.4-2.3zM271.5 303.8l4.9 4.3-4.4 2.4zM275.9 301.4l.5 6.7-4.9-4.3zM275.4 294.7l.5 6.7-4.9-4.3zM357.1 521l-4.6-1.7-.2-4.4zM366.4 518.3l4.8 3.4-4.6 2.7zM371.2 521.7l4.8 0 .1 6.2zM371.3 526.2l-.1-4.5 4.9 6.2zM356.9 514.9l.2 6.1-4.8-6.1zM379.8 477.9l-.1-6.3 5.1 4.8zM415.8 480l-5.3 1.5 0-6.4zM389.9 481.1l-5 1.5-.1-6.2zM394.9 473.3l-5.2-4.7 5.1-1.6zM389.7 468.6l-.1-6.4 5.2 4.8zM385 488.8l-4.9 1.4-.1-6.2zM385.2 494.9l-.2-6.1 5.1 4.7zM395.6 522.6l5 4.2-5 1.9zM399.8 452.4l-5.2 1.7-.1-6.5zM399.8 452.4l5.2-1.7 .1 6.6zM405 450.7l-5.2 1.7-.1-6.5zM394.6 454.1l5.2 4.8-5.1 1.7zM399.8 458.9l.1 6.5-5.2-4.8zM399.8 458.9l0-6.5 5.3 4.9zM399.8 452.4l0 6.5-5.2-4.8zM410.5 481.5l-5.3-4.9 5.3-1.5zM405.2 476.6l5.3 4.9-5.2 1.5zM410.4 468.6l0-6.4 5.3 4.8zM431.9 488.3l5.4 5-5.5 1.4zM437.3 493.3l-5.4-5 5.4-1.5zM442.8 491.8l-5.5 1.5 0-6.5zM453.8 501.8l.1-6.5 5.6 5.1zM426.5 476.9l5.4 4.9-5.4 1.6zM431.9 481.8l-5.4-4.9 5.4-1.6zM426.5 476.9l0-6.5 5.4 4.9zM426.5 476.9l-5.4-4.9 5.4-1.6zM426.5 476.9l-5.4 1.5 0-6.4zM421.1 478.4l5.4-1.5 0 6.5zM415.8 480l5.3-1.6 0 6.5zM421.1 478.4l5.4 5-5.4 1.5zM421.1 465.4l5.4-1.6 0 6.6zM415.7 460.5l5.4 4.9-5.4 1.6zM421.1 465.4l-5.4-4.9 5.4-1.7zM426.5 463.8l-5.4 1.6 0-6.6zM421.1 465.4l0 6.6-5.4-5zM421.1 472l0-6.6 5.4 5zM426.5 463.8l5.5 4.9-5.5 1.7zM432 468.7l5.5 5-5.6 1.6zM426.5 470.4l5.5-1.7-.1 6.6zM432 468.7l-5.5-4.9 5.5-1.7zM426.6 450.5l-.1 6.6-5.4-4.9zM421.1 445.5l5.5 5-5.5 1.7zM432.1 448.7l-5.5 1.8 0-6.8zM426.6 450.5l-5.5-5 5.5-1.8zM426.5 457.1l5.6-1.7-.1 6.7zM426.6 450.5l5.5 4.9-5.6 1.7zM437.6 453.7l-5.5 1.7 0-6.7zM432.1 455.4l-5.5-4.9 5.5-1.8zM432.1 455.4l5.5 5-5.6 1.7zM437.6 460.4l-5.5-5 5.5-1.7zM443.2 458.7l-5.6 1.7 0-6.7zM293.3 480.9l-4.1 1.2-.4-5.6zM289.2 482.1l4.1-1.2 .4 5.8zM485.1 220.6l3.7 7.9-7.8-1zM394 414.2l-.1-6.8 5.4 4.9zM393.9 407.4l.1 6.8-5.3-4.8zM404.6 410.3l.1 6.9-5.4-4.9zM404.7 417.2l-.1-6.9 5.5 4.9zM404.7 417.2l-5.3 1.9-.1-6.8zM341.8 373.5l-4.8 2.1-.3-6.7zM341 353l-.3-6.9 5.2 4.6zM335.8 348.4l4.9-2.3 .3 6.9zM345.9 350.7l-5.2-4.6 4.9-2.3zM290.7 382.7l-.4-6.4 4.8 4.5zM290.3 376.3l.4 6.4-4.7-4.4zM286 378.3l4.7 4.4-4.3 2zM436 221.6l3.7-6.7 3.6 7.7zM436 221.6l-7.3-.9 3.7-6.7zM425 282.1l2.5 8.2-6.3-3.1zM427.5 290.3l3.9-7.3 2.5 6.3zM427.5 290.3l-2.5-8.2 6.4 .9zM432.8 296.6l-5.3-6.3 6.4-1zM421.2 287.2l6.3 3.1-6.4 3.6zM387.5 255.7l3.3 7.1-6.4-.8zM384.4 262l6.4 .8-3 6.6zM394.1 269.7l-3.3-6.9 6.8 1.2zM390.8 262.8l3.4-5.9 3.4 7.1zM407.7 272.8l-3.6 6.1-2.8-8zM404.1 278.9l3.6-6.1 3.7 6.8zM411.4 279.6l-3.7-6.8 6.9 .6zM404.5 265.1l3.2 7.7-6.4-1.9zM447.1 215.8l3.8-6.8 3.6 7.8zM450.9 209l-7.5-.9 3.8-6.9zM458.4 209.9l-7.5-.9 3.8-6.9zM466 210.8l4-7 3.6 7.9zM381.5 312.4l-5.6-4.8 5.4-2.6zM398 304.8l-5.6 2.5-.1-7.4zM398.1 312.2l-5.7-4.9 5.6-2.5zM386.8 302.5l5.6 4.8-5.5 2.6zM392.4 307.3l-5.6-4.8 5.5-2.6zM288 343.6l.5 6.6-4.8-4.4zM288 343.6l4.9 4.5-4.4 2.1zM292.9 348.1l-4.9-4.5 4.5-2.2zM288 343.6l-.4-6.6 4.9 4.4zM313.4 295.3l5.2 4.5-4.8 2.5zM276.4 308.1l.5 6.7-4.9-4.3zM371.1 516.3l-4.7 2-.2-6.1zM371.1 516.3l.1 5.4-4.8-3.4zM371.1 516.3l-.2-5.6 4.9 4.9zM371.1 516.3l4.7-.7 .2 6.1zM371.2 521.7l-.1-5.4 4.9 5.4zM356.9 514.9l4.8 3.3-4.6 2.8zM361.7 518.2l4.9 6.2-4.8-1.7zM361.7 518.2l4.7 .1 .2 6.1zM352.1 509.6l4.8 5.3-4.6 0zM410.5 481.5l0 6.3-5.2-4.8zM389.9 481.1l.1 6.2-5.1-4.7zM385 488.8l5-1.5 .1 6.2zM390 487.3l-5 1.5-.1-6.2zM389.8 474.9l-.1-6.3 5.2 4.7zM395 479.7l-5.2-4.8 5.1-1.6zM389.8 474.9l.1 6.2-5.1-4.7zM389.9 481.1l-.1-6.2 5.2 4.8zM400.1 478.2l-5.1 1.5-.1-6.4zM400.1 478.2l5.1-1.6 .1 6.4zM400.1 484.5l0-6.3 5.2 4.8zM400.1 478.2l0 6.3-5.1-4.8zM400 471.8l.1 6.4-5.2-4.9zM399.9 465.4l.1 6.4-5.2-4.8zM421.1 472l-5.4 1.5 0-6.5zM415.7 473.5l-5.3-4.9 5.3-1.6zM421.1 478.4l-5.4-4.9 5.4-1.5zM410.4 468.6l5.3 4.9-5.2 1.6zM415.7 473.5l.1 6.5-5.3-4.9zM415.7 473.5l5.4 4.9-5.3 1.6zM410.4 468.6l-5.3-4.8 5.3-1.6zM410.4 462.2l-5.3 1.6 0-6.5zM405.1 463.8l-5.3-4.9 5.3-1.6zM437.5 467.1l-5.5 1.6 0-6.6zM437.6 460.4l-.1 6.7-5.5-5zM437.5 467.1l5.5 5-5.5 1.6zM432 468.7l5.5-1.6 0 6.6zM443.1 465.5l5.7-1.7-.1 6.7zM443.1 465.5l-5.6 1.6 .1-6.7zM443.1 465.5l.1-6.8 5.6 5.1zM443.2 458.7l-.1 6.8-5.5-5.1zM443 472.1l.1-6.6 5.6 5zM437.5 467.1l5.6-1.6-.1 6.6zM481.4 212.7l-3.7-8 7.8 .9zM481.4 212.7l3.7 7.9-7.8-1zM477.7 204.7l3.7 8-7.8-1zM481.8 197.7l-4.1 7-3.7-7.9zM477.7 204.7l4.1-7 3.7 7.9zM493.4 206.6l-4.2 7-3.7-8zM489.2 213.6l8 1-4.3 7zM399.2 405.4l5.4-2 0 6.9zM393.8 400.6l5.4 4.8-5.3 2zM399.2 405.4l5.4 4.9-5.3 2zM393.9 407.4l5.3-2 .1 6.9zM383.2 397.8l5.3 4.8-5.2 2zM388.5 402.6l5.3-2 .1 6.8zM388.5 402.6l-5.3-4.8 5.2-2.1zM383.3 404.6l5.2-2 .2 6.8zM388.5 402.6l5.4 4.8-5.2 2zM335.5 341.4l5.2 4.7-4.9 2.3zM407.7 272.8l3.4-6.4 3.5 7zM411.1 266.4l-3.4 6.4-3.2-7.7zM407.8 259l3.3 7.4-6.6-1.3zM411.1 266.4l7 1-3.5 6zM458.1 224.5l3.9-6.8 3.7 7.8zM462 217.7l4-6.9 3.6 7.9zM458.4 209.9l3.6 7.8-7.5-.9zM370.6 310.2l5.3-2.6 .2 7.4zM392.6 314.7l-.2-7.4 5.7 4.9zM392.7 322.1l-.1-7.4 5.6 4.9zM392.6 314.7l5.5-2.5 .1 7.4zM387 317.3l5.6-2.6 .1 7.4zM392.6 314.7l-5.6 2.6-.1-7.4zM392.4 307.3l.2 7.4-5.7-4.8zM390 487.3l5.1 4.8-5 1.4zM502.8 274.4l-7.7-1.4 4.2-6.5zM502.8 274.4l-4.2 6.5-3.5-7.9zM361.5 512.9l.2 5.3-4.8-3.3zM366.4 518.3l-4.9-5.4 4.7-.7zM361.7 518.2l-.2-5.3 4.9 5.4zM410.5 487.8l5.3 4.9-5.2 1.4zM400.1 484.5l5.2 4.8-5.1 1.4zM405.3 489.3l5.2-1.5 .1 6.3zM405.3 489.3l-5.2-4.8 5.2-1.5zM410.5 487.8l-5.2 1.5 0-6.3zM405.4 495.5l-.1-6.2 5.3 4.8zM415.8 486.4l-5.3 1.4 0-6.3zM415.8 486.4l0-6.4 5.3 4.9zM415.8 486.4l-5.3-4.9 5.3-1.5zM421.1 491.2l-5.3-4.8 5.3-1.5zM415.8 492.7l0-6.3 5.3 4.8zM415.8 486.4l0 6.3-5.3-4.9zM395 485.9l-5 1.4-.1-6.2zM395 485.9l-5.1-4.8 5.1-1.4zM400.1 484.5l-5.1 1.4 0-6.2zM395 485.9l5.1-1.4 .1 6.2zM395.1 492.1l-.1-6.2 5.2 4.8zM395 485.9l.1 6.2-5.1-4.8zM389.6 462.2l-5.2-4.8 5.1-1.6zM384.4 457.4l-.1-6.4 5.2 4.8zM489.7 198.5l3.7 8.1-7.9-1zM489.7 198.5l8 .9-4.3 7.2zM481.8 197.7l7.9 .8-4.2 7.1zM410.8 535.8l-.1-5.4 5.2 5.6zM405.7 532.3l5-1.9 .1 5.4zM356.7 508.9l4.8 4-4.6 2zM379.5 465.4l5.2 4.7-5 1.5zM384.7 470.1l5.1 4.8-5 1.5zM384.5 463.8l-.1-6.4 5.2 4.8zM389.7 468.6l-5.2-4.8 5.1-1.6zM379.4 459l5.1 4.8-5 1.6zM384.7 470.1l-.2-6.3 5.2 4.8z"/>
<path fill="#28acfa" d="M605.3 370.9l-.7 8.1-7.2-5.7zM509.5 208.4l-3.7-8.1 8.1 .9zM443.9 395.9l5.8 5.1-5.8 2.1zM598.1 365.1l7.2 5.8-7.9 2.4zM517 224.6l-3.8-8.1 8.2 1zM525.1 225.6l-8.1-1 4.4-7.1zM438.1 405.2l0-7.2 5.8 5.1zM443.9 395.9l-5.7-5.1 5.8-2.2zM438.2 390.8l-.1 7.2-5.7-5zM438.1 398l.1-7.2 5.7 5.1zM448.7 470.5l5.7-1.7-.1 6.8zM438.1 405.2l5.7 5-5.8 2zM461.4 411.2l-6 2.1 .1-7.2zM290.9 176.6l5.9 .7-2.5 6.3zM316 501.8l4.7 6-4.5-1.6zM285.1 365.4l.4 6.5-4.7-4.4zM282.2 386.6l4.2-1.9 .5 6.3zM286.4 384.7l-4.2 1.9-.5-6.3zM522.1 202.1l-4.5 7.2-3.7-8.1zM513.2 216.5l4.4-7.2 3.8 8.2zM517.6 209.3l-8.1-.9 4.4-7.2zM509.5 208.4l8.1 .9-4.4 7.2zM525.9 210.3l-3.8-8.2 8.3 .9zM517.6 209.3l8.3 1-4.5 7.2zM525.9 210.3l-8.3-1 4.5-7.2zM598.1 365.1l7.9-2.4-.7 8.2zM541.5 344.8l-7.1 2.7 .4-8zM533.5 363.4l.4-7.9 6.6 5.4zM404.9 437.5l-.1-6.8 5.4 4.9zM369.6 192.3l6.7 .7-3.2 6.6zM296.8 177.3l3.4 7-5.9-.7zM314.9 179.3l6.2 .7-2.7 6.4zM369.6 192.3l-3.1 6.5-3.5-7.3zM359.9 198l6.6 .8-3.1 6.5zM377.5 247.6l3.1-6.2 3.4 7.2zM368.3 265.5l3-5.8 3.4 7.2zM359.9 198l-3.5-7.2 6.6 .7zM349.9 190l6.5 .8-3 6.5zM415.4 341.6l5.7-2.4 0 7.4zM421.1 339.2l5.8 4.9-5.8 2.5zM415.3 334.2l.1 7.4-5.8-4.9zM415.4 341.6l-.1-7.4 5.8 5zM457.3 293.6l0 6.9-6.5-6zM403.8 302.1l5.7 4.8-5.7 2.7zM560.2 570.1l-1 6.3-5.9-5.2zM463.9 296.8l-6.6 3.7 0-6.9zM457.3 300.5l6.6-3.7-.4 8.2zM438.6 339.2l6 5-6 2.5zM438.2 390.8l0-7.2 5.8 5zM432.3 414.3l0-7.1 5.7 5zM596.8 381.4l-7.1-5.7 7.7-2.4zM589.7 375.7l7.1 5.7-7.7 2.4zM604.6 379l-7.8 2.4 .6-8.1zM596.8 381.4l-.7 8.1-7-5.7zM596.1 389.5l-7.7 2.3 .7-8zM582.7 462l6.8 5.7-7.4 1.8zM582.7 462l.6-7.6 6.8 5.7zM583.3 454.4l.7-7.6 6.7 5.7zM591.4 444.8l-7.4 2 .6-7.7zM571.7 420.1l6.7 5.6-7.3 2.1zM577.8 433.5l.6-7.8 6.8 5.7zM565 414.5l.6-7.8 6.7 5.6zM578.4 425.7l.7-7.8 6.8 5.7zM579.1 417.9l-7.4 2.2 .6-7.8zM516.7 429.3l-6.6 2 .4-7.4zM530.2 536.6l6.1 5.4-6.5 1.2zM523.8 537.8l6.4-1.2-.4 6.6zM524.2 531.3l6 5.3-6.4 1.2zM530.2 536.6l6.5-1.3-.4 6.7zM536.7 535.3l-6.5 1.3 .4-6.7zM530.2 536.6l-6-5.3 6.4-1.4zM503.1 447.8l6 5.3-6.4 1.8zM509.8 438.6l.3-7.3 6.2 5.4zM509.1 453.1l.4-7.2 6.1 5.3zM509.5 445.9l-6.4 1.9 .3-7.2zM509.5 445.9l.3-7.3 6.2 5.4zM521.8 456.6l-6.5 1.8 .3-7.2zM516 444l6.2 5.4-6.6 1.8zM496.7 449.6l.3-7.1 6.1 5.3zM455.4 413.3l5.8 5.1-5.9 2zM449.6 408.2l-5.8 2 .1-7.1zM449.6 408.2l5.8 5.1-5.9 2zM449.6 408.2l.1-7.2 5.8 5.1zM283.7 345.8l.4 6.6-4.8-4.4zM264.5 212l-.4-6.3 4.3 .4zM449.3 429.4l5.7 5.1-5.8 1.9zM311.1 492.8l-4.2 .7-.4-5.4zM347.6 511.5l-4.6 0-.2-5.2zM343 511.5l4.6 0 .2 6.1zM534.2 211.2l-8.3-.9 4.5-7.3zM538.8 203.9l-4.6 7.3-3.8-8.2zM534.2 211.2l4.6-7.3 3.8 8.3zM554.9 221.5l3.7 8.3-8.5-1zM590.3 367.6l7.8-2.5-.7 8.2zM589.7 375.7l.6-8.1 7.1 5.7zM541 352.9l.5-8.1 6.6 5.4zM541.5 344.8l-.5 8.1-6.6-5.4zM533.9 355.5l7.1-2.6-.5 8zM541 352.9l-7.1 2.6 .5-8zM548.6 342.1l7.3-2.8-.6 8.3zM548.1 350.2l.5-8.1 6.7 5.5zM541.5 344.8l7.1-2.7-.5 8.1zM542 336.6l-.5 8.2-6.7-5.3zM542 336.6l6.6 5.5-7.1 2.7zM477.3 219.6l-4 6.9-3.7-7.8zM378 399.8l.2 6.7-5.3-4.7zM347.2 384.9l5.1 4.7-4.8 2zM362.3 385.5l5.2 4.7-5 2.1zM404.9 437.5l0 6.6-5.3-4.9zM404.9 444.1l-5.2 1.8-.1-6.7zM394.4 441l-.1-6.6 5.3 4.8zM399.7 445.9l-5.3-4.9 5.2-1.8zM394.4 441l5.3 4.9-5.2 1.7zM404.9 437.5l-5.4-4.9 5.3-1.9zM399.5 432.6l5.4 4.9-5.3 1.7zM394.3 434.4l5.2-1.8 .1 6.6zM398.3 326.9l.1 7.4-5.6-4.9zM426.9 344.1l-.1 7.4-5.7-4.9zM379.8 200.4l-3.5-7.4 6.8 .8zM379.8 200.4l-3.2 6.6-3.5-7.4zM355.1 250.8l6.3 1-3 6.2zM361.4 251.8l-6.3-1 3-6.1zM345.8 255.5l-2.9 6.1-3.2-7.1zM377.5 247.6l3.4 7.2-6.6-1.1zM371.3 259.7l6.4 1.1-3 6.1zM380.9 254.8l-3.2 6-3.4-7.1zM300.2 184.3l-2.6 6.2-3.3-6.9zM349.9 190l-3.5-7.3 6.5 .8zM340 182l6.4 .7-2.9 6.6zM349.9 190l-3 6.5-3.4-7.2zM327.3 180.6l-2.8 6.5-3.4-7.1zM321.1 180l3.4 7.1-6.1-.7zM360.3 211.7l-3.5-7.2 6.6 .8zM359.9 198l-3.1 6.5-3.4-7.2zM438.6 339.2l-5.9 2.5 .1-7.5zM426.9 336.7l0 7.4-5.8-4.9zM426.9 336.7l5.8 5-5.8 2.4zM409.6 329.3l5.7 4.9-5.7 2.5zM409.6 329.3l-5.7-4.9 5.7-2.5zM415.3 334.2l5.8-2.5 0 7.5zM421.1 331.7l5.8 5-5.8 2.5zM404 339.2l0-7.4 5.6 4.9zM404 331.8l5.6-2.5 0 7.4zM409.6 329.3l-5.6 2.5-.1-7.4zM398.4 334.3l5.6-2.5 0 7.4zM403.9 324.4l.1 7.4-5.7-4.9zM404 331.8l-5.6 2.5-.1-7.4zM442.7 278.8l-3.5-7.5 7.1 1zM409.5 306.9l5.8-2.9 0 7.7zM445 313.9l-6.2 2.7 .1-7.6zM421.1 316.7l0-7.6 5.8 4.9zM421.1 309.1l0 7.6-5.8-5zM415.3 304l5.8 5.1-5.8 2.6zM426.9 321.6l-5.8-4.9 5.8-2.7zM421.1 316.7l5.8 4.9-5.8 2.6zM409.5 314.4l0-7.5 5.8 4.8zM409.5 306.9l0 7.5-5.7-4.8zM409.6 299.5l-.1 7.4-5.7-4.8zM403.7 294.6l5.9 4.9-5.8 2.6zM409.6 299.5l5.7 4.5-5.8 2.9zM554.2 564.8l6 5.3-6.9 1.1zM563.5 530l.5-6.9 6.4 5.6zM556.6 531.4l-6.7 1.3 .5-6.8zM581.1 566.9l.6-6.7 6.5 5.5zM574.1 567.9l-6.3-5.4 6.9-1.2zM567.8 562.5l-.6 6.6-6.2-5.5zM521.9 563.5l-.6 6-5.7-4.7zM521.3 569.5l-6.4 1.8 .7-6.5zM458.2 551.1l-5.3-5.8 5.5-.6zM463.8 549.2l-5.6 1.9 .2-6.4zM458.2 551.1l5.6-1.9-.2 5.6zM453 539.4l-5.3-4.7 5.5-1.3zM453 539.4l-.1 5.9-5.4-4.4zM442 547l5.4 .2-.2 6.4zM442 547l-.1 4.7-5.3-1.9zM426.3 527.2l5.2 4.7-5.2 1.5zM474.6 558.7l5.4 6.8-5.6-2zM465.2 498.9l.2-6.5 5.7 5.1zM509.4 565.3l.5-6 5.7 5.5zM516.2 558.4l5.7 5.1-6.3 1.3zM509.9 559.3l6.3-.9-.6 6.4zM498.6 280.9l-7.4-1.5 3.9-6.4zM438.7 331.7l.1-7.6 5.9 5zM449.8 393.7l-5.9 2.2 .1-7.3zM432.3 407.2l.1-7.1 5.7 5.1zM588.4 391.8l-6.9-5.6 7.6-2.4zM541 352.9l6.6 5.4-7.1 2.6zM547.6 358.3l-6.6-5.4 7.1-2.7zM577.8 433.5l-7.2 2 .5-7.7zM572.9 404.4l6.8 5.6-7.4 2.3zM587.1 407.8l-7.4 2.2 .6-7.9zM510.8 416.5l6.3 5.4-6.6 2zM564.5 422.2l.5-7.7 6.7 5.6zM563.9 429.9l.6-7.7 6.6 5.6zM536.7 535.3l6.1 5.4-6.5 1.3zM517.8 532.5l6 5.3-6.3 1.3zM459.8 487.3l5.8-1.6-.2 6.7zM461.5 404l5.9 5.1-6 2.1zM461.2 418.4l5.9 5.1-6 2zM356.1 353.2l5.3 4.7-5.1 2.2zM275.3 200.7l-1.9 6.1-4-6.9zM281 201.4l5.8 .7-2.4 6.1zM449.4 422.4l.1-7.1 5.8 5.1zM443.4 438.3l.1-7 5.7 5.1zM432.2 435.1l-5.6 1.8 0-6.8zM426.6 436.9l0 6.8-5.5-4.9zM426.6 423.2l5.6 5-5.6 1.9zM432.2 428.2l0 6.9-5.6-5zM432.2 435.1l0-6.9 5.6 5zM404.8 430.7l5.4-1.8 0 6.7zM311.5 498.6l4.5 3.2-4.2 2.8zM307.2 498.7l4.3-.1 .3 6zM311.5 498.6l-.4-5.8 4.6 3.9zM306.9 493.5l-4.5-3.8 4.1-1.6zM302.4 489.7l.4 5.8-4.6-5zM302.4 489.7l-.4-5.8 4.5 4.2zM288.4 470.9l-4 1.5-.5-5.8zM343.2 516l-.2-4.5 4.8 6.1zM282.2 386.6l-4.2 1.9-.5-6.3zM287.3 397.3l4.8 4.5-4.3 1.8zM291.6 395.5l-4.3 1.8-.4-6.3zM285.5 371.9l-4.3 2-.4-6.4zM279.9 413.3l4.6 4.4-4.2 1.7zM284 411.6l-4.1 1.7-.5-6.1zM295.1 380.8l-.4-6.5 4.8 4.5zM286 378.3l.4 6.4-4.7-4.4zM281.2 373.9l4.8 4.4-4.3 2zM286 378.3l-4.8-4.4 4.3-2zM538 219.5l-3.8-8.3 8.4 1zM534.2 211.2l-4.6 7.3-3.7-8.2zM529.6 218.5l-4.5 7.1-3.7-8.1zM525.9 210.3l3.7 8.2-8.2-1zM538 219.5l-8.4-1 4.6-7.3zM538.8 203.9l8.5 1-4.7 7.3zM546.4 220.5l8.5 1-4.8 7.3zM546.4 220.5l4.7-7.3 3.8 8.3zM551.1 213.2l-4.7 7.3-3.8-8.3zM541.7 227.7l4.7-7.2 3.7 8.3zM546.4 220.5l-8.4-1 4.6-7.3zM538 219.5l8.4 1-4.7 7.2zM592 250l-4.6 7.2-4.1-8.4zM587.4 257.2l4.6-7.2 4.3 8.5zM598.8 357l-7.8 2.4 .6-8.1zM590.3 367.6l.7-8.2 7.1 5.7zM591 359.4l7.8-2.4-.7 8.1zM582.7 370l7.6-2.4-.6 8.1zM549.2 334l-7.2 2.6 .5-8.2zM556.4 330.9l-7.2 3.1 .5-8.2zM548.6 342.1l.6-8.1 6.7 5.3zM542 336.6l7.2-2.6-.6 8.1zM542.9 320l6.8 5.8-7.2 2.6zM535.3 331.5l6.7 5.1-7.2 2.9zM535.3 331.5l.5-8 6.7 4.9zM534.4 347.5l-7 2.6 .4-8zM533.9 355.5l-6.5-5.4 7-2.6zM377.7 386.1l.2 6.8-5.3-4.7zM382.8 377l.1 7-5.3-4.8zM372.4 381.3l5.3 4.8-5.1 2.1zM351.9 376.1l-.3-6.9 5.2 4.7zM336.1 355.2l.3 6.9-5.1-4.7zM367.5 390.2l-.2-6.8 5.3 4.8zM343.2 406.8l-.3-6.6 5.1 4.7zM342.6 393.6l5.1 4.7-4.8 1.9zM421.1 445.5l-5.5-4.9 5.5-1.8zM421.1 445.5l-5.4 1.8-.1-6.7zM415.7 447.3l0 6.6-5.4-4.9zM410.3 455.6l-5.3-4.9 5.3-1.7zM405 450.7l-.1-6.6 5.4 4.9zM389.2 442.8l5.2-1.8 .1 6.6zM404.8 424l5.4 4.9-5.4 1.8zM382.8 377l-5.4-4.8 5.2-2.2zM377.4 372.2l-.2-7 5.4 4.8zM398.4 334.3l-5.5 2.4-.1-7.3zM421.1 353.9l-5.7-4.9 5.7-2.4zM415.4 349l0-7.4 5.7 5zM387.7 353.5l5.4-2.3 .1 7.2zM377.2 365.2l5.3-2.3 .1 7.1zM366.5 355.6l5.4 4.8-5.2 2.2zM371.1 332l-.1-7.2 5.4 4.7zM387.3 331.9l-.1-7.3 5.6 4.8zM392.9 336.7l-5.6-4.8 5.5-2.5zM432.5 199.5l-3.7-7.7 7.4 .8zM418 212.2l7.2 .9-3.6 6.6zM410.9 211.3l-3.4 6.6-3.6-7.5zM407.5 217.9l3.5 7.4-6.9-.9zM355.1 250.8l-2.9 5.9-3.4-7zM351.7 243.7l3.4 7.1-6.3-1.1zM351.7 243.7l3-6.1 3.4 7.1zM355.1 250.8l-3.4-7.1 6.4 1zM368.3 265.5l-3.6-6.7 6.6 .9zM361.4 251.8l3.3 7-6.3-.8zM364.7 258.8l-2.9 6.3-3.4-7.1zM361.8 265.1l2.9-6.3 3.6 6.7zM371.3 259.7l-3.5-6.9 6.5 .9zM364.7 258.8l3.1-6 3.5 6.9zM367.8 252.8l-3.1 6-3.3-7zM352 269.2l-5.7-.9 2.8-6.1zM302.8 177.9l-2.6 6.4-3.4-7zM300.2 184.3l2.6-6.4 3.4 7.1zM302.8 177.9l6 .7-2.6 6.4zM312.2 185.7l-3.4-7.1 6.1 .7zM308.8 178.6l3.4 7.1-6-.7zM312.2 185.7l2.7-6.4 3.5 7.1zM345.5 242.7l6.2 1-2.9 6zM351.7 243.7l-6.2-1 2.9-6zM340 182l-2.9 6.5-3.5-7.2zM340.5 195.7l-3.4-7.2 6.4 .8zM369.9 206.1l-3.4-7.3 6.6 .8zM373.4 213.4l-3.5-7.3 6.7 .9zM376.9 220.7l-6.6-.9 3.1-6.4zM383.3 207.8l6.8 .9-3.3 6.5zM400.5 217l-3.5-7.5 6.9 .9zM400.5 217l7 .9-3.4 6.5zM371.5 272.7l-5.8-1.2 2.6-6zM353.8 210.9l3-6.4 3.5 7.2zM432.7 349.1l-5.9 2.4 .1-7.4zM432.7 341.7l0 7.4-5.8-5zM387.2 324.6l5.5-2.5 .1 7.3zM392.7 322.1l5.6 4.8-5.5 2.5zM392.7 322.1l5.5-2.5 .1 7.3zM415.3 326.7l5.8 5-5.8 2.5zM409.6 329.3l5.7-2.6 0 7.5zM421.1 331.7l-5.8-5 5.8-2.5zM439.2 271.3l-7-1.3 3.5-6.3zM415.3 296.1l-.3-8.1 6.1 5.9zM415.3 296.1l-5.7 3.4-.2-7.4zM409.6 299.5l5.7-3.4 0 7.9zM435.6 277.6l-3.4-7.6 7 1.3zM439 301.5l6.1 4.8-6.2 2.7zM445.1 306.3l-.1 7.6-6.1-4.9zM445 313.9l-.2 7.6-6-4.9zM421 301.4l.1 7.7-5.8-5.1zM421 301.4l-5.7-5.3 5.8-2.2zM415.3 296.1l5.7 5.3-5.7 2.6zM426.9 298.3l-5.9 3.1 .1-7.5zM432.8 311.5l0 7.6-5.9-5.1zM432.8 319.1l-5.9 2.5 0-7.6zM426.9 321.6l5.9-2.5 0 7.6zM426.9 321.6l0 7.6-5.8-5zM426.9 329.2l0-7.6 5.9 5.1zM426.9 329.2l-5.8 2.5 0-7.5zM421.1 331.7l5.8-2.5 0 7.5zM426.9 336.7l0-7.5 5.9 5zM421.1 316.7l-5.8 2.5 0-7.5zM415.3 319.2l-5.8-4.8 5.8-2.7zM415.3 319.2l5.8-2.5 0 7.5zM415.3 326.7l0-7.5 5.8 5zM415.3 319.2l0 7.5-5.7-4.8zM556.6 531.4l6.4 5.5-6.8 1.3zM563 536.9l-6.4-5.5 6.9-1.4zM540.7 566.9l-6.6 .8 .8-6.3zM557.1 524.5l6.9-1.4-.5 6.9zM556.6 531.4l.5-6.9 6.4 5.5zM557.1 524.5l-.5 6.9-6.2-5.5zM557.1 524.5l.5-6.9 6.4 5.5zM543.3 534l-6.6 1.3 .4-6.7zM532.7 579.5l-6.6 2.7 .8-6.6zM532.7 579.5l5.4 7.1-6-2.2zM532.7 579.5l6.3 .4-.9 6.7zM527.6 569.1l-6.3 .4 .6-6zM521.3 569.5l6.3-.4-.7 6.5zM523.8 537.8l-.4 6.6-5.9-5.3zM523.4 544.4l.4-6.6 6 5.4zM529.4 549.7l-6-5.3 6.4-1.2zM523.4 544.4l6 5.3-6.3 1.1zM523.1 550.8l-.5 6.4-5.8-5.2zM516.2 558.4l6.4-1.2-.7 6.3zM522.6 557.2l-6.4 1.2 .6-6.4zM474.6 558.7l.3-5.5 5.4 5.8zM463.4 559.5l-5.4-2 5.6-2.7zM458 557.5l.2-6.4 5.4 3.7zM464 543.3l-.2 5.9-5.4-4.5zM464 543.3l.3-6.1 5.4 5.1zM458.2 551.1l-5.5-.2 .2-5.6zM452.9 545.3l-.2 5.6-5.3-3.7zM452.7 550.9l5.3 6.6-5.4-1.9zM458 557.5l-5.3-6.6 5.5 .2zM447.2 553.6l5.5-2.7-.1 4.7zM447.4 547.2l5.3 3.7-5.5 2.7zM431.5 531.9l0 5.9-5.2-4.4zM431.6 525.9l-.1 6-5.2-4.7zM426.4 521.1l5.2 4.8-5.3 1.3zM431.6 525.9l5.3 5-5.4 1zM463.8 549.2l5.4 5.8-5.6-.2zM500 367.9l6.6-2.4-.3 7.7zM463.9 296.8l4-7.3 2.8 6.5zM457.2 281l3.7-6.5 3.7 7.3zM491.5 265.3l4.1-6.6 3.7 7.8zM487.4 271.8l4.1-6.5 3.6 7.7zM505.3 396.1l.3-7.6 6.3 5.4zM512.2 386.2l-6.6 2.3 .3-7.6zM504.9 403.7l.4-7.6 6.2 5.4zM504.6 411.1l.3-7.4 6.3 5.3zM506.6 365.5l6.3 5.3-6.6 2.4zM513.3 363l-.4 7.8-6.3-5.3zM512.6 378.5l-6.7 2.4 .4-7.7zM512.9 370.8l-.3 7.7-6.3-5.3zM512.6 378.5l.3-7.7 6.4 5.3zM512.6 378.5l-.4 7.7-6.3-5.3zM444.4 359.2l6-2.4-.1 7.5zM444.5 351.7l-.1 7.5-5.9-5zM444.4 359.2l.1-7.5 5.9 5.1zM456.2 369.4l-6 2.3 .1-7.4zM450.4 356.8l5.9 5.1-6 2.4zM438.2 383.6l5.9-2.2-.1 7.2zM449.8 393.7l5.9 5.1-6 2.2zM455.7 398.8l5.8 5.2-6 2.1zM426.7 402.2l5.7-2.1-.1 7.1zM580.9 394.2l.6-8 6.9 5.6zM580.9 394.2l6.9 5.6-7.5 2.3zM587.8 399.8l-6.9-5.6 7.5-2.4zM582.1 378.1l7.6-2.4-.6 8.1zM581.5 386.2l.6-8.1 7 5.7zM582.1 378.1l.6-8.1 7 5.7zM588.8 475.2l-7.3 1.7 .6-7.4zM580.3 491.7l7.3-1.7-.6 7.3zM575.5 463.9l.6-7.5 6.6 5.6zM470.9 504l-5.8 1.5 .1-6.6zM521.4 463.8l-6.5 1.8 .4-7.2zM521.4 463.8l6.2 5.4-6.6 1.7zM479.7 404.9l-6.2 2.1 .2-7.3zM486 402.7l-6.3 2.2 .2-7.4zM510.8 416.5l-6.5 2.1 .3-7.5zM485.2 424.7l6.1 5.3-6.3 2zM503.7 433.3l6.1 5.3-6.4 2zM449.4 422.4l5.7 5.1-5.8 1.9zM455.1 427.5l5.8 5.1-5.9 1.9zM461.1 425.5l-6 2 .2-7.1zM467.1 423.5l5.8 5.2-6 2zM472.9 428.7l.2-7.2 5.9 5.2zM284.6 358.9l.5 6.5-4.8-4.4zM284.1 352.4l.5 6.5-4.8-4.4zM289 356.8l-4.4 2.1-.5-6.5zM288.5 350.2l-4.4 2.2-.4-6.6zM272.5 317.1l4.9 4.4-4.4 2.3zM323.8 304.3l4.9-2.5 .3 7.1zM345.1 329.8l.2 7-5.2-4.7zM270.4 212.6l-5.9-.6 3.9-5.9zM273.4 206.8l-3 5.8-2-6.5zM275.3 200.7l3.6 6.8-5.5-.7zM278.9 207.5l-3.6-6.8 5.7 .7zM278.9 207.5l2.1-6.1 3.4 6.8zM297.6 190.5l-5.9-.7 2.6-6.2zM278 194.6l5.6 .7-2.6 6.1zM283.6 195.3l3.2 6.8-5.8-.7zM380.8 519.8l-5-4.2 4.8-1.5zM384.3 451l5.1-1.7 .1 6.5zM389.4 449.3l-5.1 1.7-.2-6.5zM389.4 449.3l-.2-6.5 5.3 4.8zM421.1 491.2l5.3 4.9-5.3 1.5zM426.4 496.1l5.4 5-5.4 1.4zM443.7 417.3l-5.8 2 .1-7.1zM443.7 417.3l.1-7.1 5.7 5.1zM443.5 431.3l.1-7 5.7 5.1zM443.6 424.3l.1-7 5.7 5.1zM443.4 438.3l-5.7 1.8 .1-6.9zM421.1 432l5.5 4.9-5.5 1.9zM426.6 436.9l-5.5-4.9 5.5-1.9zM432.1 441.9l5.6-1.8 0 6.8zM432.1 441.9l-5.5-5 5.6-1.8zM437.7 440.1l-5.6 1.8 .1-6.8zM426.7 409.3l0-7.1 5.6 5zM426.7 402.2l0 7.1-5.6-5zM426.7 409.3l5.6-2.1 0 7.1zM426.7 416.3l0-7 5.6 5zM426.7 409.3l0 7-5.6-5zM432.2 421.3l0 6.9-5.6-5zM426.7 416.3l5.5 5-5.6 1.9zM437.9 419.3l-5.7 2 .1-7zM432.2 421.3l-5.5-5 5.6-2zM421.1 418.2l-5.5 2 0-6.9zM421.1 418.2l5.6-1.9-.1 6.9zM421.1 411.3l0 6.9-5.5-4.9zM426.7 416.3l-5.6 1.9 0-6.9zM421.1 425.1l5.5-1.9 0 6.9zM421.1 425.1l0-6.9 5.5 5zM421.1 418.2l0 6.9-5.5-4.9zM442.8 491.8l5.6-1.5-.1 6.5zM448.4 490.3l5.5 5-5.6 1.5zM301.6 478.2l-4.2 1.2-.4-5.6zM297.8 485l4.6 4.7-4.2 .8zM297.8 485l4.2-1.1 .4 5.8zM297.8 485l-.4-5.6 4.6 4.5zM293.7 486.7l4.1-1.7 .4 5.5zM288.4 470.9l.4 5.6-4.4-4.1zM282.7 392.9l-.5-6.3 4.7 4.4zM278 388.5l4.7 4.4-4.2 1.9zM283.1 399.2l-4.2 1.8-.4-6.2zM283.1 399.2l4.2-1.9 .5 6.3zM283.1 399.2l-.4-6.3 4.6 4.4zM278.9 401l4.7 4.4-4.2 1.8zM283.1 399.2l.5 6.2-4.7-4.4zM286.4 384.7l4.8 4.4-4.3 1.9zM291.2 389.1l4.7 4.5-4.3 1.9zM290.3 376.3l4.4-2 .4 6.5zM558.6 229.8l4.9-7.3 3.7 8.4zM562.4 238.1l-3.8-8.3 8.6 1.1zM571 239.3l-8.6-1.2 4.8-7.2zM503.4 259.9l3.7 7.9-7.8-1.3zM506.9 357.7l6.4 5.3-6.7 2.5zM533.4 226.7l-3.8-8.2 8.4 1zM533.4 226.7l4.6-7.2 3.7 8.2zM529.6 218.5l3.8 8.2-8.3-1.1zM481 227.5l-7.7-1 4-6.9zM508.9 223.6l-3.8-8.1 8.1 1zM517 224.6l-8.1-1 4.3-7.1zM372.8 395l5.1-2.1 .1 6.9zM372.8 395l-5.1 2-.2-6.8zM372.8 395l-5.3-4.8 5.1-2zM377.9 392.9l-5.1 2.1-.2-6.8zM372.8 395l5.2 4.8-5.1 2zM367.7 397l5.1-2 .1 6.8zM378.2 406.5l-5.1 2-.2-6.7zM415.6 420.2l-5.5-5 5.5-1.9zM357.3 387.5l-.3-6.7 5.3 4.7zM346.9 378.2l-.2-6.8 5.2 4.7zM351.4 362.3l5.2 4.7-5 2.2zM331.6 364.2l4.8-2.1 .3 6.8zM331.6 364.2l-4.7 2.2-.4-6.8zM332.5 384.3l-.3-6.6 5.1 4.6zM353.1 409.5l-4.9 1.9-.2-6.5zM373.9 441.4l5.2 4.8-5 1.7zM337.9 395.6l-4.7 1.9-.3-6.5zM337.9 395.6l5 4.6-4.7 1.9zM410.3 442.4l-5.4 1.7 0-6.6zM415.7 447.3l-5.4-4.9 5.3-1.8zM404.9 444.1l5.4-1.7 0 6.6zM410.3 442.4l5.4 4.9-5.4 1.7zM410.3 442.4l-5.4-4.9 5.3-1.9zM415.6 440.6l-5.3 1.8-.1-6.8zM384 438l5.2 4.8-5.1 1.7zM450.2 371.7l-5.9-5.1 6-2.3zM444.3 366.6l.1-7.4 5.9 5.1zM398.5 341.6l-.1-7.3 5.6 4.9zM404.1 346.5l-5.6-4.9 5.5-2.4zM398.5 341.6l-5.6-4.9 5.5-2.4zM415.4 341.6l-5.7 2.5-.1-7.4zM415.4 349l-5.7-4.9 5.7-2.5zM409.7 344.1l-5.7-4.9 5.6-2.5zM409.7 344.1l-5.6 2.4-.1-7.3zM404.1 346.5l5.6-2.4 0 7.3zM393.1 351.2l5.5 4.9-5.4 2.3zM398.6 356.1l.1 7.2-5.5-4.9zM387.6 346.4l5.5 4.8-5.4 2.3zM393.1 351.2l-5.5-4.8 5.4-2.4zM345.3 336.8l5.3 4.7-5 2.3zM345.6 343.8l5-2.3 .2 7zM350.6 341.5l5.3 4.7-5.1 2.3zM382.5 362.9l5.3-2.2 .1 7.1zM393.3 365.5l-5.5-4.8 5.4-2.3zM387.8 360.7l-.1-7.2 5.5 4.9zM365.5 320l5.3-2.5 .2 7.3zM387.3 331.9l-5.5-4.8 5.4-2.5zM381.8 327.1l-.2-7.4 5.6 4.9zM387.4 339.1l.2 7.3-5.5-4.9zM439.2 271.3l3.6-6.5 3.5 7.5zM469.3 233.2l-3.6-7.7 7.6 1zM425.1 227.3l-7.1-1 3.6-6.6zM418 226.3l-3.5-7.5 7.1 .9zM414.5 218.8l3.5 7.5-7-1zM418 212.2l-3.5 6.6-3.6-7.5zM407.5 217.9l7 .9-3.5 6.5zM367.8 252.8l3.1-6.2 3.4 7.1zM370.9 246.6l6.6 1-3.2 6.1zM377.5 247.6l-6.6-1 3.1-6.1zM364.4 245.7l3.4 7.1-6.4-1zM370.9 246.6l-6.5-.9 3.1-6.2zM364.4 245.7l6.5 .9-3.1 6.2zM364.4 245.7l-3 6.1-3.3-7.1zM365.7 271.5l-6.9-.4 3-6zM286.8 202.1l3.3 6.9-5.7-.8zM335.9 234.7l3.3 7-6.1-1zM330.8 187.8l-3.5-7.2 6.3 .7zM380.1 214.3l-3.2 6.4-3.5-7.3zM383.3 207.8l-3.2 6.5-3.5-7.3zM370.3 219.8l-3.5-7.2 6.6 .8zM369.9 206.1l-3.1 6.5-3.4-7.3zM393.6 216.1l-3.5-7.4 6.9 .8zM393.6 216.1l-3.3 6.4-3.5-7.3zM398 304.8l5.8-2.7 0 7.5zM398 304.8l0-7.4 5.8 4.7zM426.9 306.2l-5.9-4.8 5.9-3.1zM426.9 306.2l5.9 5.3-5.9 2.5zM421.1 309.1l5.8-2.9 0 7.8zM421 301.4l5.9 4.8-5.8 2.9zM432.8 304l6.2-2.5-.1 7.5zM432.8 304l0-7.4 6.2 4.9zM432.8 311.5l0-7.5 6.1 5zM432.8 296.6l0 7.4-5.9-5.7zM432.8 304l-5.9 2.2 0-7.9zM378.4 273.9l-6.9-1.2 3.2-5.8zM381.2 267.7l-2.8 6.2-3.7-7zM381.1 281.9l-2.7-8 6 1zM552.3 577.7l-5.8-5.7 6.8-.8zM546.5 572l-6.7 1.4 .9-6.5zM550.8 519.1l6.3 5.4-6.7 1.4zM569.9 535.6l-6.9 1.3 .5-6.9zM520.7 575.2l.6-5.7 5.6 6.1zM533.4 573.8l-.7 5.7-5.8-3.9zM527.6 569.1l5.8 4.7-6.5 1.8zM533.4 573.8l-5.8-4.7 6.5-1.4zM539.8 573.4l-6.4 .4 .7-6.1zM532.7 579.5l.7-5.7 5.6 6.1zM533.4 573.8l6.4-.4-.8 6.5zM522.6 557.2l5.7 5.4-6.4 .9zM534.1 567.7l-5.8-5.1 6.6-1.2zM528.3 562.6l-.7 6.5-5.7-5.6zM527.6 569.1l.7-6.5 5.8 5.1zM529.4 549.7l-.4 6.5-5.9-5.4zM529 556.2l-6.4 1 .5-6.4zM529 556.2l6.5-1.2-.6 6.4zM535.5 555l-6.5 1.2 .4-6.5zM528.3 562.6l.7-6.4 5.9 5.2zM529 556.2l-.7 6.4-5.7-5.4zM469.5 548.6l-5.5-5.3 5.7-1zM464 543.3l5.5 5.3-5.7 .6zM469.2 555l.3-6.4 5.4 4.6zM493.2 537.6l-5.9 1.1 .2-6.3zM511.2 540.3l.4-6.5 5.9 5.3zM470 536.1l-5.7 1.1 .2-6.2zM464.3 537.2l5.7-1.1-.3 6.2zM470 536.1l5.5 5-5.8 1.2zM453 539.4l5.6-.9-.2 6.2zM458.6 538.5l5.4 4.8-5.6 1.4zM458.6 538.5l-5.6 .9 .2-6zM458.6 538.5l.2-6.3 5.5 5zM464 543.3l-5.4-4.8 5.7-1.3zM426.2 539.7l-5.2-5.6 5.3-.7zM421.1 528.2l-.1 5.9-5.1-4.4zM421.1 528.2l5.2-1 0 6.2zM421 534.1l.1-5.9 5.2 5.2zM421 534.1l-5.1 1.9 0-6.3zM442.2 535.6l5.5-.9-.2 6.2zM431.5 537.8l5.3-.7-.1 6.3zM436.8 537.1l5.4-1.5-.1 5.9zM442.2 535.6l-5.4 1.5 .1-6.2zM436.8 537.1l-5.3 .7 0-5.9zM436.9 530.9l-.1 6.2-5.3-5.2zM468.9 561.5l5.7-2.8-.2 4.8zM468.9 561.5l.3-6.5 5.4 3.7zM468.9 561.5l-5.5-2 .2-4.7zM469.2 555l-.3 6.5-5.3-6.7zM499.7 375.6l-6.5 2.3 .2-7.6zM505.9 380.9l-6.2-5.3 6.6-2.4zM499.7 375.6l.3-7.7 6.3 5.3zM486.5 387.8l.2-7.5 6.2 5.2zM486.2 395.3l.3-7.5 6.1 5.3zM486 402.7l.2-7.4 6.1 5.3zM463.9 296.8l6 6.4-6.4 1.8zM514.3 283.3l-3.6-7.8 8 1.5zM467.9 289.5l8 2-5.2 4.5zM461.1 288.3l2.8 8.5-6.6-3.2zM461.1 288.3l6.8 1.2-4 7.3zM467.9 289.5l-6.8-1.2 3.5-6.5zM461.1 288.3l-3.9-7.3 7.4 .8zM505.6 388.5l-6.2-5.3 6.5-2.3zM493.2 377.9l6.2 5.3-6.5 2.3zM499.4 383.2l.3-7.6 6.2 5.3zM499.7 375.6l-.3 7.6-6.2-5.3zM499.1 390.8l6.5-2.3-.3 7.6zM499.1 390.8l-6.5 2.3 .3-7.6zM499.4 383.2l-.3 7.6-6.2-5.3zM499.1 390.8l.3-7.6 6.2 5.3zM492.6 393.1l6.2 5.2-6.5 2.3zM498.8 398.3l6.1 5.4-6.4 2.1zM498.8 398.3l.3-7.5 6.2 5.3zM512.6 378.5l6.3 5.4-6.7 2.3zM518.9 383.9l-6.3-5.4 6.7-2.4zM525.7 381.5l-6.8 2.4 .4-7.8zM450.5 349.3l6 5.1-6.1 2.4zM450.2 371.7l-.2 7.4-5.8-5.1zM450 379.1l-5.9 2.3 .1-7.4zM580.9 394.2l-6.9-5.7 7.5-2.3zM572.9 404.4l.6-7.9 6.8 5.6zM573.5 396.5l7.4-2.3-.6 7.9zM573.5 396.5l.5-8 6.9 5.7zM574 388.5l.6-8 6.9 5.7zM594.9 488.3l-.6 7.4-6.7-5.7zM594.9 488.3l-6.7-5.7 7.4-1.7zM588.2 482.6l.6-7.4 6.8 5.7zM577.2 441.2l.6-7.7 6.8 5.6zM575.5 463.9l-7.2 1.8 .6-7.4zM461.7 396.7l5.9 5.1-6.1 2.2zM467.6 401.8l5.9 5.2-6.1 2.1zM467.6 401.8l.2-7.3 5.9 5.2zM498.5 405.8l-6.4 2.2 .2-7.4zM504 426l.3-7.4 6.2 5.3zM503.7 433.3l.3-7.3 6.1 5.3zM497 442.5l.3-7.2 6.1 5.3zM491.3 430l6 5.3-6.3 1.9zM503.7 433.3l-6.4 2 .3-7.3zM473.3 414.3l.2-7.3 6 5.2zM467.2 416.4l5.9 5.1-6 2zM467.2 416.4l-6 2 .2-7.2zM473.3 414.3l-6.1 2.1 .2-7.3zM326.2 352.8l5.1 4.6-4.8 2.2zM326.2 352.8l-.3-6.8 5.1 4.6zM294.7 374.3l-.5-6.5 4.9 4.5zM284.6 358.9l4.8 4.5-4.3 2zM296.5 332.5l-4.9-4.5 4.5-2.3zM281.8 319.2l.5 6.7-4.9-4.4zM356.1 353.2l-5 2.2-.3-6.9zM351.4 362.3l-.3-6.9 5.2 4.7zM314.2 309.3l4.8-2.5 .3 7zM324.2 311.4l-5.2-4.6 4.8-2.5zM334.6 320.5l.3 7-5.2-4.6zM340.1 332.1l-5.2-4.6 4.9-2.4zM324.2 311.4l.3 6.9-5.2-4.5zM329.4 315.9l-5.2-4.5 4.8-2.5zM329.4 315.9l5.2 4.6-4.9 2.4zM340.1 332.1l.3 7-5.2-4.6zM276.1 213.4l-5.7-.8 3-5.8zM283.6 195.3l5.7 .7-2.5 6.1zM291.7 189.8l-2.4 6.2-3.4-6.9zM384.9 482.6l-5.1-4.7 5-1.5zM380 484l-4.9 1.5-.2-6.2zM380.1 490.2l-4.9 1.4-.1-6.1zM380.2 496.2l-.1-6 5.1 4.7zM390.6 523.3l-5-4.2 4.9-1.6zM394.6 454.1l-5.2-4.8 5.1-1.7zM426.4 489.8l5.5-1.5-.1 6.4zM426.4 496.1l0-6.3 5.4 4.9zM426.4 489.8l0 6.3-5.3-4.9zM437.2 499.7l-5.4 1.4 0-6.4zM380.2 496.2l5.1 4.8-4.9 1.3zM437.9 426.3l5.6 5-5.7 1.9zM432.2 421.3l5.7 5-5.7 1.9zM443.6 424.3l-5.7 2 0-7zM443.4 445.1l0-6.8 5.7 5zM437.7 440.1l5.7 5-5.7 1.8zM443.3 452l.1-6.9 5.6 5.1zM415.6 433.8l5.5-1.8 0 6.8zM410.2 428.9l5.4 4.9-5.4 1.8zM415.6 433.8l-5.4-4.9 5.4-1.9zM415.6 433.8l0 6.8-5.4-5zM415.6 440.6l0-6.8 5.5 5zM448.2 503.2l5.5 5-5.6 1.4zM324.9 505l4.7 6-4.5-1.6zM292.9 475.2l-4.1 1.3-.4-5.6zM292.9 475.2l-.4-5.7 4.5 4.3zM288.8 476.5l.4 5.6-4.4-4zM288 465.1l.4 5.8-4.5-4.3zM283.5 460.9l4.5 4.2-4.1 1.5zM288.4 470.9l-.4-5.8 4.5 4.4zM284 411.6l4.7 4.4-4.2 1.7zM284.5 417.7l4.6 4.4-4.2 1.7zM333.1 491.8l4.7 4.6-4.5 1.1zM349.7 449.8l-.2-6.3 5 4.7zM332.9 391l-4.7 1.9-.4-6.5zM574.7 247.6l5-7.2 3.6 8.4zM607.3 267.9l-8.1-1.1 6.3-7zM613.7 276.6l-6.4-8.7 7.1 1zM604.2 275.4l3.1-7.5 6.4 8.7zM503.4 259.9l7.9 1.3-4.2 6.6zM500.9 222.6l-4.3 6.9-3.7-7.9zM508.9 223.6l-8-1 4.2-7.1zM466.3 195.9l3.7 7.9-7.7-.8zM367.9 403.7l-.2-6.7 5.2 4.8zM368.1 410.4l-.2-6.7 5.2 4.8zM383.2 397.8l.1 6.8-5.3-4.8zM383.3 404.6l.2 6.8-5.3-4.9zM410.1 422.1l0-6.9 5.5 5zM410.1 422.1l5.5-1.9 0 6.8zM410.2 428.9l-.1-6.8 5.5 4.9zM404.8 424l5.3-1.9 .1 6.8zM341.8 373.5l4.9-2.1 .2 6.8zM342.1 380.2l-.3-6.7 5.1 4.7zM335.8 348.4l.3 6.8-5.1-4.6zM299.9 385.2l-4.4 2-.4-6.4zM326.9 366.4l5 4.6-4.7 2.1zM332.5 384.3l5.1 4.7-4.7 2zM337.9 395.6l-.3-6.6 5 4.6zM332.2 377.7l-4.7 2-.3-6.6zM327.5 379.7l5 4.6-4.7 2.1zM357.5 394.3l-.2-6.8 5.2 4.8zM358.2 414.2l-.2-6.6 5.1 4.7zM394.4 441l-5.3-4.8 5.2-1.8zM389.2 442.8l-.1-6.6 5.3 4.8zM394.3 434.4l-5.2 1.8-.1-6.6zM398.6 348.8l-5.5 2.4-.1-7.2zM398.6 348.8l0 7.3-5.5-4.9zM398.5 341.6l.1 7.2-5.6-4.8zM382.2 348.7l5.4-2.3 .1 7.1zM382.2 348.7l-5.3 2.3-.1-7.1zM387.6 346.4l-5.4 2.3-.1-7.2zM387.8 360.7l-5.4-4.9 5.3-2.3zM382.4 355.8l5.4 4.9-5.3 2.2zM382.4 355.8l-.2-7.1 5.5 4.8zM371 324.8l5.3-2.5 .1 7.2zM370.8 317.5l5.5 4.8-5.3 2.5zM376.3 322.3l-5.5-4.8 5.3-2.5zM376.3 322.3l5.5 4.8-5.4 2.4zM381.6 319.7l-5.3 2.6-.2-7.3zM381.8 327.1l-5.5-4.8 5.3-2.6zM381.9 334.3l-5.3 2.4-.2-7.2zM381.8 327.1l.1 7.2-5.5-4.8zM381.9 334.3l-.1-7.2 5.5 4.8zM387.4 339.1l-5.5-4.8 5.4-2.4zM376.6 336.7l5.3-2.4 .2 7.2zM439.8 200.4l-7.3-.9 3.7-6.9zM439.8 200.4l-3.7 6.8-3.6-7.7zM439.8 200.4l3.8-7 3.6 7.8zM443.3 222.6l3.6 7.6-7.3-1zM446.9 230.2l-3.6-7.6 7.4 .9zM454.3 231.2l-7.4-1 3.8-6.7zM439.7 214.9l-3.6-7.7 7.3 .9zM387.5 255.7l-6.6-.9 3.1-6.2zM387.5 255.7l-3.1 6.3-3.5-7.2zM421.6 261.2l3.4 7.4-6.9-1.2zM425 268.6l-3.5 6.3-3.4-7.5zM425 268.6l7.2 1.4-3.8 5.7zM432.2 270l-7.2-1.4 3.6-6.1zM425.1 227.3l3.6-6.6 3.6 7.5zM428.7 220.7l-3.5-7.6 7.2 .9zM428.7 220.7l-3.6 6.6-3.5-7.6zM447.1 215.8l7.4 1-3.8 6.7zM439.7 214.9l7.4 .9-3.8 6.8zM355.5 264l3.3 7.1-6.8-1.9zM361.8 265.1l-6.3-1.1 2.9-6zM355.5 264l-3.3-7.3 6.2 1.3zM355.5 264l-3.5 5.2-2.9-7zM295.1 196.7l-5.8-.7 2.4-6.2zM339.2 241.7l2.9-6 3.4 7zM342.6 248.6l3.2 6.9-6.1-1zM336.4 247.7l6.2 .9-2.9 5.9zM342.6 248.6l-6.2-.9 2.8-6zM342.6 248.6l-3.4-6.9 6.3 1zM345.8 255.5l-3.2-6.9 6.2 1.1zM342.6 248.6l2.9-5.9 3.3 7zM334.2 194.9l-3.4-7.1 6.3 .7zM330.8 187.8l3.4 7.1-6.2-.7zM383.6 221.6l-3.5-7.3 6.7 .9zM390.3 222.5l-6.7-.9 3.2-6.4zM397.2 223.4l-3.6-7.3 6.9 .9zM397.2 223.4l3.3-6.4 3.6 7.4zM393.6 216.1l3.6 7.3-6.9-.9zM350.4 203.7l-3.5-7.2 6.5 .8zM346.9 196.5l3.5 7.2-6.4-.8zM381.1 297.4l5.7 5.1-5.5 2.5zM386.8 302.5l-.2-7.4 5.7 4.8zM381.1 297.4l5.5-2.3 .2 7.4zM386.5 287.9l.1 7.2-5.6-5.4zM386.6 295.1l-5.5 2.3-.1-7.7zM392.3 299.9l-.1-7.5 5.8 5zM386.6 295.1l5.6-2.7 .1 7.5zM392.2 292.4l-5.6 2.7-.1-7.2zM445.2 298.9l-.1 7.4-6.1-4.8zM450.7 334.1l-6.1 2.6 .1-7.6zM451 318.7l-6.2 2.8 .2-7.6zM546.5 572l.9-6.3 5.9 5.5zM545.7 578.2l-5.9-4.8 6.7-1.4zM545.7 578.2l.8-6.2 5.8 5.7zM545.7 578.2l-.8 5.7-5.9-4zM539.8 573.4l5.9 4.8-6.7 1.7zM535.5 555l.4-6.5 6.1 5.4zM536.3 542l-.4 6.5-6.1-5.3zM542.4 547.3l-6.5 1.2 .4-6.5zM535.9 548.5l-6.5 1.2 .4-6.5zM535.9 548.5l-.4 6.5-6.1-5.3zM517.1 545.6l-5.9-5.3 6.3-1.2zM523.4 544.4l-6.3 1.2 .4-6.5zM517.1 545.6l6.3-1.2-.3 6.4zM517.1 545.6l6 5.2-6.3 1.2zM475.8 534.8l5.6 5.2-5.9 1.1zM421.1 503.8l0-6.2 5.3 4.9zM415.9 523.6l5.2 4.6-5.2 1.5zM421.1 528.2l0-5.9 5.2 4.9zM442.2 535.6l.1-6 5.4 5.1zM515 269.1l8 1.3-4.3 6.6zM523 270.4l-8-1.3 4.3-6.7zM472 283.8l-4.1 5.7-3.3-7.7zM472 283.8l3.9 7.7-8-2zM453.7 273.3l-3.7 6-3.7-7zM453.7 273.3l3.7-6.3 3.5 7.5zM457.2 281l-3.5-7.7 7.2 1.2zM458.1 224.5l-3.8 6.7-3.6-7.7zM456 376.8l-6 2.3 .2-7.4zM580.9 484.3l7.3-1.7-.6 7.4zM588.2 482.6l-7.3 1.7 .6-7.4zM580.3 491.7l.6-7.4 6.7 5.7zM569.4 450.7l6.7 5.7-7.2 1.9zM568.3 465.7l6.6 5.6-7.2 1.8zM574.9 471.3l.6-7.4 6.6 5.6zM574.9 471.3l6.6 5.6-7.2 1.8zM560.2 482.2l6.4 5.5-6.9 1.7zM561.7 460.1l6.6 5.6-7.1 1.8zM514.6 472.7l.3-7.1 6.1 5.3zM508.5 467.3l.3-7.1 6.1 5.4zM508.8 460.2l.3-7.1 6.2 5.3zM492.1 408l-6.4 2.1 .3-7.4zM479.7 404.9l6 5.2-6.2 2.1zM473.3 414.3l6 5.2-6.2 2zM479.3 419.5l5.9 5.2-6.2 2zM324.8 325.3l-.3-7 5.2 4.6zM298.2 359.2l-4.8-4.5 4.4-2.2zM293.4 354.7l4.8 4.5-4.4 2.1zM293.4 354.7l-.5-6.6 4.9 4.4zM287.1 330.3l4.5-2.3 .4 6.7zM287.1 330.3l-4.8-4.4 4.4-2.3zM287.6 337l-.5-6.7 4.9 4.4zM287.1 330.3l.5 6.7-4.9-4.4zM282.7 332.6l4.9 4.4-4.4 2.2zM291.1 321.2l4.6-2.3 .4 6.8zM276.4 308.1l-.5-6.7 4.9 4.3zM275.4 294.7l-4.4 2.4-.5-6.7zM275 287.9l.4 6.8-4.9-4.3zM370.9 510.7l-.2-5.9 5 4.8zM352.3 514.9l.2 4.4-4.7-1.7zM371.2 521.7l.1 4.5-4.7-1.8zM379.2 452.6l-.1-6.4 5.2 4.8zM385 488.8l-5-4.8 4.9-1.4zM380.1 490.2l4.9-1.4 .2 6.1zM385.6 519.1l-.1-6.1 5 4.5zM380.5 508.2l5 4.8-4.9 1.1zM395.6 522.6l-5 .7-.1-5.8zM390.6 523.3l5-.7 0 6.1zM399.7 445.9l.1 6.5-5.3-4.8zM385.4 507l-4.9 1.2-.1-5.9zM385.5 513l-.1-6 5 4.7zM453.8 501.8l5.6 5.1-5.7 1.3zM459.4 506.9l-5.6-5.1 5.7-1.4zM453.8 501.8l-5.6 1.4 .1-6.4zM443.2 458.7l.1-6.7 5.6 5zM443.2 458.7l-5.6-5 5.7-1.7zM448.8 463.8l-5.6-5.1 5.7-1.7zM334.1 512.7l-.2-4.4 4.7 6zM292.9 475.2l.4 5.7-4.5-4.4zM297.8 485l-4.5-4.1 4.1-1.5zM293.3 480.9l-.4-5.7 4.5 4.2zM293.3 480.9l4.5 4.1-4.1 1.7zM292.1 463.7l4.5 4.3-4.1 1.5zM328.5 399.5l5 4.6-4.7 1.9zM333.5 404.1l-.3-6.6 5 4.6zM572.6 316.7l-8.1 3.7 .8-7.2zM549.9 317.7l7.1 4.7-7.3 3.4zM542.9 320l7-2.3-.2 8.1zM527 358l-6.5-5.4 6.9-2.5zM527 358l6.9-2.5-.4 7.9zM527 358l.4-7.9 6.5 5.4zM513.6 355.2l6.5 5.3-6.8 2.5zM527 358l-6.9 2.5 .4-7.9zM488.8 228.5l-3.7-7.9 7.8 1zM485.1 220.6l-4.1 6.9-3.7-7.9zM481 227.5l3.6 7.8-7.7-1zM477.7 204.7l-7.7-.9 4-7zM470 203.8l7.7 .9-4.1 7zM497.2 214.6l-3.8-8 8 .9zM362.9 405.7l-4.9 1.9-.3-6.6zM362.9 405.7l5.2 4.7-5 1.9zM373.1 408.5l5.2 4.8-5 1.9zM383.5 411.4l-5.2 1.9-.1-6.8zM394.2 427.7l5.3 4.9-5.2 1.8zM399.5 425.9l5.3-1.9 0 6.7zM399.5 425.9l-5.3 1.8-.1-6.7zM399.5 432.6l0-6.7 5.3 4.8zM394.2 427.7l5.3-1.8 0 6.7zM399.5 425.9l-.1-6.8 5.4 4.9zM399.4 419.1l.1 6.8-5.4-4.9zM394 414.2l5.4 4.9-5.3 1.9zM399.4 419.1l-5.4-4.9 5.3-1.9zM388.8 416.2l-5.3-4.8 5.2-2zM394 414.2l-5.2 2-.1-6.8zM410.1 422.1l-5.4-4.9 5.4-2zM404.7 417.2l5.4 4.9-5.3 1.9zM399.4 419.1l5.3-1.9 .1 6.8zM332.2 377.7l4.8-2.1 .3 6.7zM337 375.6l5.1 4.6-4.8 2.1zM331.9 371l5.1 4.6-4.8 2.1zM342.1 380.2l-5.1-4.6 4.8-2.1zM337 375.6l-5.1-4.6 4.8-2.1zM340.7 346.1l-.3-7 5.2 4.7zM330.6 343.7l5.2 4.7-4.8 2.2zM295.5 387.2l-4.8-4.5 4.4-1.9zM290.7 382.7l.5 6.4-4.8-4.4zM290.7 382.7l4.8 4.5-4.3 1.9zM342.4 386.9l-4.8 2.1-.3-6.7zM342.6 393.6l-.2-6.7 5.1 4.7zM342.4 386.9l-.3-6.7 5.1 4.7zM367.7 397l-5 2-.2-6.7zM357.5 394.3l5.2 4.7-5 2zM362.9 405.7l-.2-6.7 5.2 4.7zM352.6 396.3l-4.9 2-.2-6.7zM357.5 394.3l-4.9 2-.3-6.7zM352.8 402.9l-.2-6.6 5.1 4.7zM347.7 398.3l5.1 4.6-4.8 2zM352.8 402.9l5.2 4.7-4.9 1.9zM432.3 228.2l3.7-6.6 3.6 7.6zM436 221.6l7.3 1-3.7 6.6zM439.7 214.9l-3.7 6.7-3.6-7.6zM428.7 220.7l7.3 .9-3.7 6.6zM427.5 290.3l5.3 6.3-5.9 1.7zM427.5 290.3l-.6 8-5.8-4.4zM394.2 256.9l6.7 1-3.3 6.1zM394.2 256.9l-3.4 5.9-3.3-7.1zM400.9 257.9l6.9 1.1-3.3 6.1zM450.9 209l-3.8 6.8-3.7-7.7zM450.9 209l7.5 .9-3.9 6.9zM466 210.8l-7.6-.9 3.9-6.9zM466 210.8l7.6 .9-4 7zM375.9 307.6l5.6 4.8-5.4 2.6zM375.8 300.3l-5.4 2.5-.1-7.4zM375.8 300.3l5.3-2.9 .2 7.6zM381.1 297.4l-5.3 2.9-.2-7.4zM375.9 307.6l-.1-7.3 5.5 4.7zM375.8 300.3l.1 7.3-5.5-4.8zM290.1 209l2.5-6.1 3.3 6.8zM289.3 196l3.3 6.9-5.8-.8zM456.9 331.5l6 5.1-6.2 2.6zM451 318.7l-.2 7.7-6-4.9zM450.8 326.4l.2-7.7 6 5.1zM444.8 321.5l6 4.9-6.1 2.7zM457.3 308.3l-6-5.4 6-2.4zM457.3 308.3l0-7.8 6.2 4.5zM445.1 306.3l6 4.6-6.1 3zM451.1 310.9l-.1 7.8-6-4.8zM451.3 302.9l-.2 8-6-4.6zM457.3 308.3l-6.2 2.6 .2-8zM481.4 540l.2-6.4 5.7 5.1zM410.6 494.1l5.2 4.9-5.2 1.3zM410.7 524.6l5.2-1 0 6.1zM390.3 505.7l-4.9 1.3-.1-6zM390.4 511.7l5.1 4.8-5 1zM395.5 516.5l.1 6.1-5.1-5.1zM390.3 505.7l5.1 4.8-5 1.2zM395.5 516.5l-.1-6 5.1 4.6zM415.8 505.2l-5.2 1.3 0-6.2zM415.8 505.2l0-6.2 5.3 4.8zM437 524.8l-5.4 1.1 .1-6.1zM510.9 546.7l6.2-1.1-.3 6.4zM517.1 545.6l-6.2 1.1 .3-6.4zM475.2 547.2l-5.7 1.4 .2-6.3zM468.4 275.9l3.6 7.9-7.4-2zM460.9 274.5l7.5 1.4-3.8 5.9zM464.8 268.3l3.6 7.6-7.5-1.4zM450 266l3.7 7.3-7.4-1zM458.1 224.5l3.6 7.7-7.4-1zM469.3 233.2l-7.6-1 4-6.7zM461.7 232.2l-3.6-7.7 7.6 1zM444.1 381.4l5.8 5-5.9 2.2zM450 379.1l-.1 7.3-5.8-5zM455.9 384.2l-6 2.2 .1-7.3zM576.1 456.4l.5-7.6 6.7 5.6zM576.6 448.8l.6-7.6 6.8 5.6zM561.7 460.1l.6-7.4 6.6 5.6zM562.3 452.7l.5-7.5 6.6 5.5zM508.8 460.2l-6.4 1.8 .3-7.1zM300.6 323.3l-4.9-4.4 4.5-2.4zM304.8 314.1l.4 6.9-5-4.5zM292.9 348.1l4.5-2.2 .4 6.6zM297.4 345.9l-4.5 2.2-.4-6.7zM297.4 345.9l-4.9-4.5 4.4-2.2zM283.2 339.2l4.8 4.4-4.3 2.2zM287.6 337l.4 6.6-4.8-4.4zM318.6 299.8l-5.2-4.5 4.9-2.6zM318.6 299.8l.4 7-5.2-4.5zM318.6 299.8l-.3-7.1 5.2 4.6zM323.8 304.3l-5.2-4.5 4.9-2.5zM308.7 297.7l4.7-2.4 .4 7zM314.2 309.3l-5.1-4.6 4.7-2.4zM281.3 312.5l-4.9-4.4 4.4-2.4zM276.9 314.8l4.9 4.4-4.4 2.3zM275.9 301.4l4.5-2.5 .4 6.8zM275.4 294.7l5 4.2-4.5 2.5zM370.9 510.7l.2 5.6-4.9-4.1zM357.1 521l4.6-2.8 .1 4.5zM347.3 505.5l4.8 4.1-4.5 1.9zM352.1 509.6l.2 5.3-4.7-3.4zM374.8 473.2l5 4.7-4.9 1.4zM379.7 471.6l-4.9 1.6-.2-6.3zM379.2 452.6l-4.9 1.7-.2-6.4zM437.3 493.3l5.4 4.9-5.5 1.5zM442.7 498.2l.1-6.4 5.5 5zM338.4 508.2l4.6 3.3-4.4 2.8zM283.6 405.4l4.6 4.4-4.2 1.8zM343.2 406.8l-4.7 1.9-.3-6.6zM526.5 365.9l-6.4-5.4 6.9-2.5zM526.1 373.7l.4-7.8 6.5 5.4zM533 371.3l-6.5-5.4 7-2.5zM526.5 365.9l.5-7.9 6.5 5.4zM489.2 213.6l-7.8-.9 4.1-7.1zM481.4 212.7l7.8 .9-4.1 7zM485.1 220.6l4.1-7 3.7 8zM489.2 213.6l4.2-7 3.8 8zM418.1 267.4l-7-1 3.5-6.2zM466 210.8l-4 6.9-3.6-7.8zM465.7 225.5l-3.7-7.8 7.6 1zM462 217.7l-3.9 6.8-3.6-7.7zM370.6 310.2l.2 7.3-5.5-4.7zM463.1 328.9l-6.2 2.6 .1-7.7zM451.1 310.9l6 5.2-6.1 2.6zM457.1 316.1l-6-5.2 6.2-2.6zM451 318.7l6.1-2.6-.1 7.7zM457.1 316.1l.2-7.8 6 4.9zM410.7 524.6l0-5.9 5.2 4.9zM400.4 503l5.1 4.8-5.1 1.3zM390.2 499.6l-4.9 1.4-.1-6.1zM395.2 498.3l-5 1.3-.1-6.1zM510.5 553.1l.4-6.4 5.9 5.3zM516.2 558.4l-5.7-5.3 6.3-1.1zM510.5 553.1l5.7 5.3-6.3 .9zM510.7 275.5l-7.9-1.1 4.3-6.6zM507.1 267.8l-4.3 6.6-3.5-7.9zM502.8 274.4l3.7 7.6-7.9-1.1zM570.6 435.5l-7.2 2.1 .5-7.7zM563.4 437.6l6.6 5.6-7.2 2zM570 443.2l6.6 5.6-7.2 1.9zM577.2 441.2l-7.2 2 .6-7.7zM497.9 420.7l6.1 5.3-6.4 2zM498.2 413.3l-6.4 2.1 .3-7.4zM498.2 413.3l.3-7.5 6.1 5.3zM497.9 420.7l.3-7.4 6.1 5.3zM485.5 417.5l-6.2 2 .2-7.3zM491.8 415.4l-6.3 2.1 .2-7.4zM330 329.9l4.9-2.4 .3 7zM330 329.9l-5.2-4.6 4.9-2.4zM361.5 512.9l-.2-5.6 4.9 4.9zM415.8 492.7l5.3-1.5 0 6.4zM415.8 499l0-6.3 5.3 4.9zM405.3 489.3l.1 6.2-5.2-4.8zM405.5 501.7l-.1-6.2 5.2 4.8zM405.5 507.8l0-6.1 5.1 4.8zM374.4 460.6l5.1 4.8-4.9 1.5zM526.5 365.9l-6.8 2.5 .4-7.9zM519.7 368.4l-6.8 2.4 .4-7.8zM520.1 360.5l-.4 7.9-6.4-5.4zM512.9 370.8l6.8-2.4-.4 7.7zM519.7 368.4l6.4 5.3-6.8 2.4zM330.3 336.8l.3 6.9-5.1-4.6zM335.5 341.4l-5.2-4.6 4.9-2.3zM330 329.9l.3 6.9-5.1-4.6zM410.7 530.4l-5.1-4.3 5.1-1.5zM410.7 530.4l0-5.8 5.2 5.1zM415.9 536l-5.2-5.6 5.2-.7zM405.6 526.1l.1 6.2-5.1-5.5zM410.7 530.4l-5 1.9-.1-6.2zM405.6 526.1l0-6.1 5.1 4.6zM405.6 520l5.1-1.3 0 5.9zM405.6 520l0-6 5.1 4.7zM390.2 499.6l5.1 4.8-5 1.3zM395.4 510.5l-.1-6.1 5.1 4.7zM395.3 504.4l-.1-6.1 5.2 4.7zM400.3 496.9l-5.1 1.4-.1-6.2zM405.4 495.5l-5.1 1.4-.1-6.2zM400.3 496.9l-5.2-4.8 5.1-1.4zM400.3 496.9l5.2 4.8-5.1 1.3zM491.3 430l.2-7.3 6.1 5.3zM485.5 417.5l6 5.2-6.3 2zM497.9 420.7l-6.4 2 .3-7.3zM314.6 316.2l-5.1-4.5 4.7-2.4zM319.7 320.8l-5.1-4.6 4.7-2.4zM379.7 471.6l5-1.5 .1 6.3zM389.8 474.9l-5.1-4.8 5-1.5zM374.3 454.3l5.1 4.7-5 1.6zM384.4 457.4l-5 1.6-.2-6.4zM405.6 520l-5.1 1.1 0-6zM400.5 521.1l-5-4.6 5-1.4zM400.5 521.1l5.1 5-5 .7zM400.5 521.1l5.1-1.1 0 6.1zM395.6 522.6l4.9-1.5 .1 5.7zM395.5 516.5l5 4.6-4.9 1.5zM309.5 311.7l.4 6.9-5.1-4.5zM384.5 463.8l-5.1-4.8 5-1.6zM384.5 463.8l.2 6.3-5.2-4.7z"/>
<path fill="#00fae8" d="M276 363.1l4.3-2.1 .5 6.5zM534.4 347.5l-6.6-5.4 7-2.6zM517 224.6l8.1 1-4.4 7.1zM411 225.3l-3.4 6.5-3.5-7.4zM414.5 232.8l-6.9-1 3.4-6.5zM438.1 398l5.8-2.1 0 7.2zM565.6 406.7l7.3-2.3-.6 7.9zM584.6 439.1l-6.8-5.6 7.4-2.1zM573.7 486l-6.5-5.6 7.1-1.7zM454.4 468.8l5.6 5.1-5.7 1.7zM460 473.9l-.1 6.7-5.6-5zM443.8 410.2l-5.7-5 5.8-2.1zM449.5 415.3l5.9-2-.1 7.1zM280.3 361l4.8 4.4-4.3 2.1zM311.8 504.6l4.2-2.8 .2 4.4zM275.5 356.6l4.3-2.1 .5 6.5zM281.7 380.3l.5 6.3-4.7-4.4zM277 375.9l4.7 4.4-4.2 1.9zM359.5 184.2l6.6 .7-3.1 6.6zM369.6 192.3l-3.5-7.4 6.7 .7zM380.6 241.4l6.7 1-3.3 6.2zM380.6 241.4l-3.1 6.2-3.5-7.1zM407.6 231.8l-6.9-1 3.4-6.4zM359.5 184.2l-3.1 6.6-3.5-7.3zM588.2 565.7l-6.5-5.5 7.1-1.2zM503.2 567.1l-5.9-.2 .4-5.7zM497.3 566.9l5.9 .2-.5 6.6zM461.5 404l-.1 7.2-5.9-5.1zM438.8 316.6l-6-5.1 6.1-2.5zM432.3 407.2l5.8-2-.1 7zM603.8 387.1l-7-5.7 7.8-2.4zM596.1 389.5l.7-8.1 7 5.7zM578.4 425.7l7.5-2.1-.7 7.8zM578.4 425.7l-.6 7.8-6.7-5.7zM571.7 420.1l-6.7-5.6 7.3-2.2zM579.1 417.9l7.4-2.2-.6 7.9zM579.1 417.9l-.7 7.8-6.7-5.6zM510.1 431.3l6.6-2-.4 7.4zM553.2 483.9l-6.8 1.6 .5-7.1zM546.4 485.5l6.8-1.6-.4 7.1zM545.5 499.7l-6.7 1.5 .4-7zM567.2 480.4l.5-7.3 6.6 5.6zM537.1 528.6l-.4 6.7-6.1-5.4zM531 523.2l6.1 5.4-6.5 1.3zM460 473.9l5.7 5.1-5.8 1.6zM538.8 501.2l-6.2-5.4 6.6-1.6zM532.6 495.8l.4-7 6.2 5.4zM533 488.8l-.4 7-6.2-5.4zM515.3 458.4l-6.2-5.3 6.5-1.9zM503.1 447.8l-6.1-5.3 6.4-1.9zM516 444l-6.2-5.4 6.5-1.9zM509.5 445.9l6.5-1.9-.4 7.2zM509.5 445.9l-.4 7.2-6-5.3zM509.8 438.6l-.3 7.3-6.1-5.3zM522.2 449.4l-.4 7.2-6.2-5.4zM496.7 449.6l6.4-1.8-.4 7.1zM496.4 456.7l.3-7.1 6 5.3zM461.2 418.4l-5.8-5.1 6-2.1zM461.2 418.4l-.1 7.1-5.8-5.1zM455.4 413.3l-5.8-5.1 5.9-2.1zM443.8 410.2l5.8-2-.1 7.1zM449.7 401l-.1 7.2-5.7-5.1zM278.9 341.4l4.8 4.4-4.4 2.2zM437.9 419.3l-5.6-5 5.7-2.1zM310.4 481.2l-4.3 1.2-.3-5.7zM306.1 482.4l-4.5-4.2 4.2-1.5zM292.5 469.5l4.1-1.5 .4 5.8zM300.8 466.6l-4.2 1.4-.4-5.8zM347.3 505.5l.3 6-4.8-5.2zM342.5 500.7l4.8 4.8-4.5 .8zM347.3 505.5l-4.8-4.8 4.6-1.1zM280.3 419.4l4.2-1.7 .4 6.1zM280.8 425.5l-.5-6.1 4.6 4.4zM323 471.1l4.7 4.5-4.4 1.4zM594 289.5l-4.3-8.6 8.3 1.4zM603 290.8l-9-1.3 4-7.2zM525.1 225.6l3.8 8.1-8.2-1zM528.9 233.7l-4.5 7-3.7-8zM524.4 240.7l4.5-7 3.7 8.1zM545.5 235.9l-3.8-8.2 8.4 1.1zM361.4 357.9l.2 7-5.3-4.8zM361.6 364.9l-.2-7 5.3 4.7zM352.3 389.6l-5.1-4.7 4.9-2.1zM367.5 390.2l.2 6.8-5.2-4.7zM358.2 414.2l5.1 4.7-4.9 1.9zM363.3 418.9l-5.1-4.7 4.9-1.9zM361.4 357.9l5.1-2.3 .2 7zM366.5 355.6l-5.1 2.3-.2-7zM366.3 348.6l.2 7-5.3-4.7zM366.5 355.6l-.2-7 5.4 4.7zM360.1 315.3l-.2-7.2 5.4 4.7zM418 226.3l-3.5 6.5-3.5-7.5zM379.5 186.4l-3.2 6.6-3.5-7.4zM379.5 186.4l6.9 .7-3.3 6.7zM518.7 277l8 1.3-4.3 6.6zM380.9 254.8l-3.4-7.2 6.5 1zM335.9 234.7l-2.8 6-3.4-6.9zM340.5 195.7l6.4 .8-2.9 6.4zM367.5 239.5l3.1-6.2 3.4 7.2zM389.9 194.6l-3.5-7.5 6.9 .8zM371.5 272.7l-3.2-7.2 6.4 1.4zM432.7 341.7l5.9-2.5 0 7.5zM432.7 341.7l-5.8-5 5.9-2.5zM560.2 570.1l-6-5.3 6.8-1.2zM555.7 544.9l-6.3-5.4 6.8-1.3zM555.7 544.9l-.5 6.7-6.2-5.5zM549.4 539.5l6.3 5.4-6.7 1.2zM531 523.2l6.5-1.3-.4 6.7zM549.4 539.5l.5-6.8 6.3 5.5zM549.9 532.7l6.7-1.3-.4 6.8zM581.7 560.2l.5-6.7 6.6 5.5zM582.8 546.7l-.6 6.8-6.4-5.6zM581.7 560.2l-.6 6.7-6.4-5.6zM561.5 557l6.3 5.5-6.8 1.1zM497.3 566.9l-.4 4.7-5.7-2zM496.9 571.6l.4-4.7 5.4 6.8zM447.9 522.2l-5.5 1.3 .1-6.3zM474.6 558.7l5.7 .3-.3 6.5zM491.7 563l5.6 3.9-6.1 2.7zM497.3 566.9l-5.6-3.9 6-1.8zM514.9 571.3l-5.5-6 6.2-.5zM511.5 401.5l-6.2-5.4 6.6-2.2zM444.6 336.7l0 7.5-6-5zM432.8 326.7l5.9 5-5.9 2.5zM438.8 324.1l-.1 7.6-5.9-5zM438.7 331.7l-.1 7.5-5.8-5zM438.7 331.7l5.9 5-6 2.5zM462 382l.1-7.5 6 5.2zM462.4 359.5l.2-7.6 6 5.2zM443.9 395.9l5.9-2.2-.1 7.3zM432.4 400.1l5.7-2.1 0 7.2zM587.8 399.8l.6-8 7 5.7zM570.6 435.5l-6.7-5.6 7.2-2.1zM579.7 410l-.6 7.9-6.8-5.6zM579.1 417.9l.6-7.9 6.8 5.7zM579.7 410l-6.8-5.6 7.4-2.3zM510.8 416.5l-6.2-5.4 6.6-2.1zM564.5 422.2l7.2-2.1-.6 7.7zM533.8 474.6l6.3 5.5-6.7 1.6zM546.4 485.5l-6.3-5.4 6.8-1.7zM545.9 492.6l.5-7.1 6.4 5.5zM545.9 492.6l-.4 7.1-6.3-5.5zM545 506.7l-6.6 1.5 .4-7zM542.8 540.7l6.6-1.2-.4 6.6zM531 523.2l-6.5 1.4 .4-6.7zM524.5 524.6l6.5-1.4-.4 6.7zM524.2 531.3l.3-6.7 6.1 5.3zM524.5 524.6l-.3 6.7-6-5.4zM517.8 532.5l6.4-1.2-.4 6.5zM511.6 533.8l6.2-1.3-.3 6.6zM524.2 531.3l-6.4 1.2 .4-6.6zM506 522l5.9 5.3-6.2 1.3zM517.8 532.5l-5.9-5.2 6.3-1.4zM511.9 527.3l-.3 6.5-5.9-5.2zM511.9 527.3l5.9 5.2-6.2 1.3zM499.8 523.3l6.2-1.3-.3 6.6zM499.6 529.8l.2-6.5 5.9 5.3zM499.8 523.3l-.2 6.5-5.8-5.1zM506 522l-6.2 1.3 .3-6.5zM533 488.8l-6.2-5.4 6.6-1.7zM526.8 483.4l6.2 5.4-6.6 1.6zM532.2 502.8l.4-7 6.2 5.4zM532.6 495.8l-6.6 1.6 .4-7zM526 497.4l-6.1-5.4 6.5-1.6zM532.2 502.8l-6.2-5.4 6.6-1.6zM526 497.4l6.2 5.4-6.5 1.5zM521.4 463.8l.4-7.2 6.2 5.4zM521.8 456.6l-.4 7.2-6.1-5.4zM527.2 476.3l6.6-1.7-.4 7.1zM526.8 483.4l.4-7.1 6.2 5.4zM522.6 442l-6.6 2 .3-7.3zM479.9 397.5l-.2 7.4-6-5.2zM466.9 430.7l-6 1.9 .2-7.1zM467.1 423.5l-.2 7.2-5.8-5.2zM302.1 266l.3 6.3-5.4-5.3zM342.9 261.6l-6.1-1.4 2.9-5.7zM278.9 341.4l4.3-2.2 .5 6.6zM361.4 357.9l-5.3-4.7 5.1-2.3zM329 308.9l5-2.5 .3 7.1zM287.6 214.9l-5.7-.7 2.5-6zM443.5 431.3l5.8-1.9-.1 7zM449.1 443.3l-5.7-5 5.8-1.9zM443.5 431.3l-.1 7-5.6-5.1zM454.5 462.1l-5.7 1.7 .1-6.8zM320.7 507.8l4.2-2.8 .2 4.4zM327.7 475.6l.3 5.9-4.7-4.5zM328 481.5l-4.3 1.4-.4-5.9zM328 481.5l4.5-1.4 .3 5.9zM332.5 480.1l-4.5 1.4-.3-5.9zM328.4 487.4l-.4-5.9 4.8 4.5zM323.7 482.9l4.3-1.4 .4 5.9zM316 501.8l-4.5-3.2 4.2-1.9zM311.1 492.8l.4 5.8-4.6-5.1zM306.1 482.4l4.6 4.6-4.2 1.1zM310.4 481.2l.3 5.8-4.6-4.6zM310.7 487l.4 5.8-4.6-4.7zM302 483.9l4.1-1.5 .4 5.7zM302 483.9l-.4-5.7 4.5 4.2zM301.2 472.4l-4.6-4.4 4.2-1.4zM296.6 468l4.6 4.4-4.2 1.4zM301.2 472.4l.4 5.8-4.6-4.4zM301.6 478.2l-.4-5.8 4.6 4.3zM301.2 472.4l4.2-1.4 .4 5.7zM305.4 471l-4.2 1.4-.4-5.8zM305 465.2l.4 5.8-4.6-4.4zM305.4 471l-.4-5.8 4.7 4.4zM343 511.5l.2 4.5-4.6-1.7zM292.1 401.8l-4.8-4.5 4.3-1.8zM276.5 369.5l4.7 4.4-4.2 2zM279.9 413.3l4.1-1.7 .5 6.1zM342.5 500.7l-.2-5.7 4.8 4.6zM346.3 481.9l-4.5 1.4-.3-6zM341.8 483.3l4.8 4.5-4.6 1.3zM355.2 466.8l-4.7 1.5-.3-6.1zM324.9 420.6l4.9 4.5-4.6 1.8zM315.5 417.8l-.3-6.3 4.8 4.5zM294.7 374.3l4.4-2 .4 6.5zM576.5 286.3l-5 6.5-3.6-8.1zM527.3 263.6l8.2 1.2-4.5 6.8zM536.3 249.9l3.7 8.1-8.2-1.2zM536.3 249.9l-8.2-1.1 4.5-7zM591 359.4l-.7 8.2-7-5.7zM591 359.4l-7.1-5.7 7.7-2.4zM583.9 353.7l7.1 5.7-7.7 2.5zM590.3 367.6l-7.6 2.4 .6-8.1zM600.1 340.6l.8-8.2 7.3 5.9zM600.1 340.6l-7.9 2.5 .7-8.2zM600.9 332.4l.6-8.4 7.4 6.2zM571.5 292.8l-8.3-1.4 4.7-6.7zM549.7 325.8l-.5 8.2-6.7-5.6zM549.2 334l7.2-3.1-.5 8.4zM535.8 323.5l7.1-3.5-.4 8.4zM542 336.6l-6.7-5.1 7.2-3.1zM545.5 235.9l-8.4-1.1 4.6-7.1zM528.9 233.7l8.2 1.1-4.5 7zM512.6 231.6l4.4-7 3.7 8.1zM505.1 215.5l4.4-7.1 3.7 8.1zM361.8 371.8l5.1-2.2 .2 6.9zM366.9 369.6l5.3 4.8-5.1 2.1zM361.6 364.9l5.3 4.7-5.1 2.2zM366.9 369.6l-5.3-4.7 5.1-2.3zM377.7 386.1l-5.3-4.8 5.2-2.1zM372.4 381.3l-.2-6.9 5.4 4.8zM378.5 420l.1 6.6-5.2-4.8zM373.3 415.2l5.2 4.8-5.1 1.8zM356.6 367l5.2 4.8-5 2.1zM351.6 369.2l5-2.2 .2 6.9zM356.6 367l5-2.1 .2 6.9zM361.6 364.9l-5 2.1-.3-6.9zM357.3 387.5l-5 2.1-.2-6.8zM357.3 387.5l5-2 .2 6.8zM342.9 400.2l4.8-1.9 .3 6.6zM362.3 385.5l5-2.1 .2 6.8zM367.3 383.4l5.1-2.1 .2 6.9zM372.4 381.3l-5.1 2.1-.2-6.9zM358.8 433.8l5.1 4.6-4.8 1.8zM358.8 433.8l4.9-1.8 .2 6.4zM363.7 432l-4.9 1.8-.2-6.5zM364.1 444.9l5.1 4.7-4.9 1.6zM363.9 438.4l.2 6.5-5-4.7zM339.3 428l-.3-6.4 5 4.6zM358.6 427.3l-5.1-4.7 4.9-1.8zM339 421.6l4.7-1.8 .3 6.4zM342.9 400.2l.3 6.6-5-4.7zM347.7 398.3l-5.1-4.7 4.9-2zM404.9 444.1l.1 6.6-5.3-4.8zM368.3 417.1l-5 1.8-.2-6.6zM368.3 417.1l5-1.9 .1 6.6zM348.2 411.4l-5-4.6 4.8-1.9zM369 443.2l-4.9 1.7-.2-6.5zM369.2 449.6l-.2-6.4 5.1 4.7zM364.1 444.9l4.9-1.7 .2 6.4zM372.2 374.4l5.2-2.2 .2 7zM356.1 353.2l-.2-7 5.3 4.7zM355.9 346.2l.2 7-5.3-4.7zM361 343.8l5.3 4.8-5.1 2.3zM355.9 346.2l5.1-2.4 .2 7.1zM366.3 348.6l5.2-2.3 .2 7zM371.5 346.3l-5.2 2.3-.2-7.1zM371.5 346.3l-.2-7.2 5.5 4.8zM371.3 339.1l.2 7.2-5.4-4.8zM371.9 360.4l-5.4-4.8 5.2-2.3zM360.1 315.3l5.4 4.7-5.2 2.5zM365.5 320l-5.4-4.7 5.2-2.5zM428.6 262.5l3.6-6.3 3.5 7.5zM421.6 191l-3.6 6.9-3.6-7.7zM407.7 245.5l-6.9-1 3.4-6.3zM425.1 255.1l7.1 1.1-3.6 6.3zM418 226.3l3.6 7.5-7.1-1zM400.2 188.7l-3.4 6.7-3.5-7.5zM400.2 188.7l7.1 .7-3.5 6.8zM454.7 202.1l-7.5-.9 3.9-6.9zM454.7 202.1l3.9-7 3.7 7.9zM351.3 230.5l3.4 7.1-6.3-.9zM354.7 237.6l-3 6.1-3.3-7zM322.4 206.8l-3.4-7.1 6.2 .8zM328.6 207.6l-6.2-.8 2.8-6.3zM346.3 268.3l-3.4-6.7 6.2 .6zM342.9 261.6l3.4 6.7-6.5-1.1zM346.3 268.3l5.7 .9-3.3 6.9zM352 269.2l2.3 5.9-5.6 1zM309.6 192l6 .7-2.7 6.3zM315.6 192.7l3.4 7-6.1-.7zM312.2 185.7l3.4 7-6-.7zM312.2 185.7l-2.6 6.3-3.4-7zM315.6 192.7l-3.4-7 6.2 .7zM337.6 202.1l2.9-6.4 3.5 7.2zM324.5 187.1l-2.7 6.3-3.4-7zM321.8 193.4l-6.2-.7 2.8-6.3zM315.6 192.7l6.2 .7-2.8 6.3zM319 199.7l2.8-6.3 3.4 7.1zM325.2 200.5l-3.4-7.1 6.2 .8zM321.8 193.4l2.7-6.3 3.5 7.1zM387.1 228.9l3.2-6.4 3.5 7.4zM365.7 271.5l-3.9-6.4 6.5 .4zM357.2 218.1l-3.4-7.2 6.5 .8zM350.8 217.2l3-6.3 3.4 7.2zM432.2 270l-3.6-7.5 7.1 1.2zM438.8 324.1l6-2.6-.1 7.6zM426.9 329.2l5.9-2.5 0 7.5zM575.2 554.7l-6.4-5.5 7-1.3zM582.2 553.5l-7 1.2 .6-6.8zM575.2 554.7l7-1.2-.5 6.7zM575.2 554.7l6.5 5.5-7 1.1zM554.2 564.8l.5-6.6 6.3 5.4zM554.7 558.2l6.8-1.2-.5 6.6zM561.5 557l-6.8 1.2 .5-6.6zM562.5 543.7l-6.8 1.2 .5-6.7zM563 536.9l-.5 6.8-6.3-5.5zM531.4 516.5l-.4 6.7-6.1-5.3zM531.4 516.5l6.1 5.4-6.5 1.3zM543.3 534l6.6-1.3-.5 6.8zM542.8 540.7l.5-6.7 6.1 5.5zM543.3 534l-.5 6.7-6.1-5.4zM549.9 532.7l-6.2-5.4 6.7-1.4zM543.7 527.3l.4-6.8 6.3 5.4zM544.1 520.5l-.4 6.8-6.2-5.4zM537.5 521.9l6.2 5.4-6.6 1.3zM543.7 527.3l-.4 6.7-6.2-5.4zM543.3 534l.4-6.7 6.2 5.4zM582.2 553.5l7.2-1.2-.6 6.7zM589.4 552.3l-7.2 1.2 .6-6.8zM576.3 541.1l6.5 5.6-7 1.2zM562 550.4l.5-6.7 6.3 5.5zM562.5 543.7l-.5 6.7-6.3-5.5zM555.7 544.9l6.3 5.5-6.8 1.2zM562 550.4l-.5 6.6-6.3-5.4zM567.8 562.5l.5-6.6 6.4 5.4zM561.5 557l6.8-1.1-.5 6.6zM562 550.4l6.3 5.5-6.8 1.1zM568.3 555.9l-6.3-5.5 6.8-1.2zM568.3 555.9l6.9-1.2-.5 6.6zM575.2 554.7l-6.9 1.2 .5-6.7zM526.1 582.2l6.6-2.7-.6 4.9zM542.4 547.3l.4-6.6 6.2 5.4zM542.8 540.7l-.4 6.6-6.1-5.3zM470.2 529.8l-5.7 1.2 .1-6.3zM458.8 532.2l.2-6.2 5.5 5zM458.8 532.2l-5.6 1.2 .2-6.2zM459 526l.1-6.3 5.5 5zM447.7 534.7l.1-6.2 5.4 4.9zM447.8 528.5l.1-6.3 5.5 5zM448 515.9l.1-6.3 5.5 5zM431.6 525.9l-5.2-4.8 5.3-1.3zM469.2 555l5.7-1.8-.3 5.5zM485.6 567.5l.3-4.7 5.3 6.8zM485.9 562.8l5.8 .2-.5 6.6zM485.9 562.8l-.3 4.7-5.6-2zM480.3 559l5.6 3.8-5.9 2.7zM465.1 505.5l5.6 5.1-5.8 1.3zM482.3 514.3l5.7 5.2-6 1.3zM487.8 525.9l.2-6.4 5.8 5.2zM488 519.5l-.2 6.4-5.8-5.1zM509.4 565.3l-5.7-4.6 6.2-1.4zM503.7 560.7l-.5 6.4-5.5-5.9zM503.7 560.7l5.7 4.6-6.2 1.8zM468.5 364.7l-6.1-5.2 6.2-2.4zM474.7 362.3l-6.2 2.4 .1-7.6zM468.5 364.7l-6.2 2.3 .1-7.5zM500 367.9l.3-7.7 6.3 5.3zM473.9 392.3l6 5.2-6.2 2.2zM468.6 357.1l.2-7.6 6.1 5.1zM462.6 351.9l6.2-2.4-.2 7.6zM456.7 339.2l6.1 5.1-6.2 2.5zM462.8 344.3l-.2 7.6-6-5.1zM462.8 344.3l6 5.2-6.2 2.4zM495.1 273l-3.6-7.7 7.8 1.2zM491.5 265.3l-4.1 6.5-3.6-7.7zM491.2 279.4l-3.8-7.6 7.7 1.2zM512.2 386.2l6.3 5.4-6.6 2.3zM505.6 388.5l6.6-2.3-.3 7.7zM504.9 403.7l6.6-2.2-.3 7.5zM498.5 405.8l6.4-2.1-.3 7.4zM462.6 351.9l-6.1 2.5 .1-7.6zM456.5 354.4l6.1-2.5-.2 7.6zM444.6 336.7l6 5-6 2.5zM456.2 369.4l6.1-2.4-.2 7.5zM462.3 367l-6-5.1 6.1-2.4zM456.3 361.9l.2-7.5 5.9 5.1zM456.5 354.4l-.2 7.5-5.9-5.1zM456.3 361.9l-.1 7.5-5.9-5.1zM456.2 369.4l.1-7.5 6 5.1zM449.7 401l6-2.2-.2 7.3zM455.7 398.8l-5.9-5.1 6-2.2zM582.7 370l-.6 8.1-6.9-5.6zM554.8 355.7l-7.2 2.6 .5-8.1zM582.7 462l-6.6-5.6 7.2-2zM575.5 463.9l7.2-1.9-.6 7.5zM576.1 456.4l-.6 7.5-6.6-5.6zM553.2 483.9l6.5 5.5-6.9 1.6zM545.9 492.6l-6.2-5.4 6.7-1.7zM540.1 480.1l-.4 7.1-6.3-5.5zM539.7 487.2l.4-7.1 6.3 5.4zM539.7 487.2l-6.7 1.6 .4-7.1zM533 488.8l6.7-1.6-.5 7zM539.7 487.2l6.2 5.4-6.7 1.6zM560.7 474.9l7-1.8-.5 7.3zM560.7 474.9l.5-7.4 6.5 5.6zM552.3 498.1l-6.4-5.5 6.9-1.6zM545.9 492.6l6.4 5.5-6.8 1.6zM524.5 524.6l-6-5.3 6.4-1.4zM518.5 519.3l6 5.3-6.3 1.3zM470.9 504l-5.7-5.1 5.9-1.4zM476.8 502.6l-5.9 1.4 .2-6.5zM470.9 504l5.9-1.4-.2 6.6zM470.7 510.6l.2-6.6 5.7 5.2zM519.9 492l.4-7 6.1 5.4zM520.3 485l6.5-1.6-.4 7zM526 497.4l-6.4 1.5 .3-6.9zM519.6 498.9l6.4-1.5-.3 6.9zM519.2 505.8l.4-6.9 6.1 5.4zM514.9 465.6l6.5-1.8-.4 7.1zM527.2 476.3l.4-7.1 6.2 5.4zM527.6 469.2l-.4 7.1-6.2-5.4zM484.8 439.1l.2-7.1 6 5.2zM473.5 407l6.2-2.1-.2 7.3zM504.3 418.6l6.5-2.1-.3 7.4zM485.2 424.7l-.2 7.3-6-5.3zM485 432l6.3-2-.3 7.2zM509.8 438.6l-6.1-5.3 6.4-2zM460.9 432.6l-5.8-5.1 6-2zM449.3 429.4l5.8-1.9-.1 7zM455.1 427.5l-5.7-5.1 5.9-2zM473.1 421.5l-.2 7.2-5.8-5.2zM279.8 354.5l4.8 4.4-4.3 2.1zM297.7 274.4l-5.1-3.6 4.4-3.8zM298.7 260.2l3.4 5.8-5.1 1zM304.8 261.2l-6.1-1 2.7-5.6zM295.7 253.4l3 6.8-5.2-1zM277.4 321.5l.5 6.7-4.9-4.4zM292 334.7l4.5-2.2 .4 6.7zM328.7 301.8l-4.9 2.5-.3-7zM324.2 311.4l-.4-7.1 5.2 4.6zM345.1 329.8l-5 2.3-.3-7zM344.8 322.7l.3 7.1-5.3-4.7zM269.2 218.7l-4.2-.2-.5-6.5zM270.4 212.6l-1.2 6.1-4.7-6.7zM270.4 212.6l3.9 6.7-5.1-.6zM281.9 214.2l3.4 6.7-5.6-.8zM281.9 214.2l-3-6.7 5.5 .7zM384.3 451l-5.2-4.8 5-1.7zM379.1 446.2l-.1-6.5 5.1 4.8zM389.2 442.8l.2 6.5-5.3-4.8zM421.1 497.6l5.3-1.5 0 6.4zM431.8 501.1l-5.4-5 5.4-1.4zM449.4 422.4l-5.7-5.1 5.8-2zM443.8 410.2l-.1 7.1-5.7-5.1zM443.6 424.3l5.8-1.9-.1 7zM443.7 417.3l-.1 7-5.7-5zM437.7 440.1l-5.5-5 5.6-1.9zM443.3 452l5.7-1.8-.1 6.8zM316 501.8l4.3 0 .4 6zM320.3 501.8l4.6 3.2-4.2 2.8zM320.3 501.8l-4.3 0-.3-5.1zM320 495.9l.3 5.9-4.6-5.1zM320.3 501.8l-.3-5.9 4.6 3.9zM324 488.6l-4.4 1.5-.3-5.8zM323.7 482.9l.3 5.7-4.7-4.3zM324 488.6l-.3-5.7 4.7 4.5zM338.1 502.3l4.4-1.6 .3 5.6zM333.1 491.8l-4.7-4.4 4.4-1.4zM311.1 492.8l4.2-1.6 .4 5.5zM310.7 487l4.6 4.2-4.2 1.6zM315.3 491.2l4.7 4.7-4.3 .8zM320 495.9l-4.7-4.7 4.3-1.1zM302 483.9l-4.6-4.5 4.2-1.2zM305.4 471l4.6 4.4-4.2 1.3zM310 475.4l-4.6-4.4 4.3-1.4zM310 475.4l.4 5.8-4.6-4.5zM310 475.4l4.7 4.4-4.3 1.4zM323.7 482.9l-4.7-4.5 4.3-1.4zM319 478.4l-.4-5.8 4.7 4.4zM319 478.4l4.7 4.5-4.4 1.4zM314.7 479.8l4.3-1.4 .3 5.9zM309.3 463.7l4.7 4.4-4.3 1.5zM282.7 392.9l-4.7-4.4 4.2-1.9zM287.3 397.3l-4.6-4.4 4.2-1.9zM282.7 392.9l.4 6.3-4.6-4.4zM283.6 405.4l.4 6.2-4.6-4.4zM355.8 485.1l-4.6 1.3-.3-5.9zM351.2 486.4l-4.6 1.4-.3-5.9zM337.5 490.5l-4.4 1.3-.3-5.8zM347.1 499.6l-.3-5.9 4.8 4.5zM346.8 493.7l-4.5 1.3-.3-5.9zM332.2 474.2l4.8 4.5-4.5 1.4zM345.3 457.6l4.7-1.6 .2 6.2zM345.6 463.8l-.3-6.2 4.9 4.6zM350.5 468.3l-4.9-4.5 4.6-1.6zM350.9 480.5l-.2-6.1 4.9 4.6zM327.4 469.7l4.8 4.5-4.5 1.4zM336.7 472.8l-4.5 1.4-.3-6zM336.7 472.8l4.5-1.5 .3 6zM337 478.7l-.3-5.9 4.8 4.5zM336.7 472.8l-.3-6 4.8 4.5zM324.9 420.6l-4.5 1.7-.4-6.3zM320.4 422.3l4.5-1.7 .3 6.3zM320.4 422.3l-4.5 1.8-.4-6.3zM320.7 428.6l-.3-6.3 4.8 4.6zM315.2 411.5l-.4-6.4 4.9 4.6zM314.8 405.1l-.4-6.4 4.9 4.6zM296.4 399.9l-4.3 1.9-.5-6.3zM291.2 389.1l.4 6.4-4.7-4.5zM330.1 431.4l-4.6 1.7-.3-6.2zM329.8 425.1l.3 6.3-4.9-4.5zM325.5 433.1l4.9 4.6-4.5 1.7zM330.4 437.7l-.3-6.3 4.9 4.6zM330.1 431.4l.3 6.3-4.9-4.6zM325.5 433.1l-4.5 1.7-.3-6.2zM321.4 441l-.4-6.2 4.9 4.6zM556.7 260.4l-8.4-1.2 4.6-6.9zM573.7 262.9l3.8 8.3-8.6-1.3zM562.4 238.1l8.6 1.2-4.9 7.1zM588.4 295.8l-3.3-8.1 8.9 1.8zM585.1 287.7l4.6-6.8 4.3 8.6zM585.1 287.7l3.3 8.1-8.3-1.3zM605.9 283.4l7.8-6.8-.7 7.6zM605.9 283.4l-1.7-8 9.5 1.2zM604.2 275.4l1.7 8-7.9-1.1zM603 290.8l2.9-7.4 6.4 8.5zM605.5 259.8l-6.3 7-2.9-8.3zM599.2 266.8l-8.4-1.3 5.5-7zM495.6 258.7l7.8 1.2-4.1 6.6zM536.3 249.9l8.3 1.2-4.6 6.9zM548.3 259.2l-4.6 6.8-3.7-8zM543.7 266l-8.2-1.2 4.5-6.8zM571.5 292.8l3.7 8-8.3-1.1zM575.2 300.8l-3.7-8 8.6 1.7zM578.3 308.9l-3.1-8.1 8.7 2.3zM580.5 316l-2.2-7.1 9 2.6zM570.5 307.7l4.7-6.9 3.1 8.1zM599.4 348.8l.7-8.2 7.3 5.9zM606.7 354.6l-7.3-5.8 8-2.3zM592.2 343.1l7.2 5.7-7.8 2.5zM593.8 326.8l7.1 5.6-8 2.5zM556.4 330.9l6.7 5.8-7.2 2.6zM557 322.4l-.6 8.5-6.7-5.1zM536.2 315.7l6.7 4.3-7.1 3.5zM506.9 357.7l6.7-2.5-.3 7.8zM537.1 234.8l-3.7-8.1 8.3 1zM533.4 226.7l3.7 8.1-8.2-1.1zM533.4 226.7l-4.5 7-3.8-8.1zM476.9 234.3l3.7 7.7-7.7-1zM481 227.5l-4.1 6.8-3.6-7.8zM508.9 223.6l3.7 8-8-1zM512.6 231.6l-3.7-8 8.1 1zM378.6 426.6l5.3 4.8-5.1 1.8zM351.9 376.1l5.1 4.7-4.9 2zM357 380.8l.3 6.7-5.2-4.7zM347.2 384.9l-.3-6.7 5.2 4.6zM346.9 378.2l5-2.1 .2 6.7zM351.9 376.1l-5.2-4.7 4.9-2.2zM356.6 367l-5.2-4.7 4.9-2.2zM331.3 357.4l.3 6.8-5.1-4.6zM332.5 384.3l.4 6.7-5.1-4.6zM379.1 446.2l-5.2-4.8 5.1-1.7zM369 443.2l4.9-1.8 .2 6.5zM368.4 423.7l-.1-6.6 5.1 4.7zM368.3 417.1l.1 6.6-5.1-4.8zM359.3 446.5l4.8-1.6 .2 6.3zM359.5 452.8l-.2-6.3 5 4.7zM359.3 446.5l.2 6.3-5-4.6zM364.1 444.9l-4.8 1.6-.2-6.3zM364.5 457.5l-5-4.7 4.8-1.6zM334.4 423.4l-.3-6.4 4.9 4.6zM339.3 428l-4.9-4.6 4.6-1.8zM324.5 414.2l-4.5 1.8-.3-6.3zM334.1 417l4.6-1.9 .3 6.5zM338.7 415.1l5 4.7-4.7 1.8zM338.7 415.1l-4.6 1.9-.3-6.5zM349.5 443.5l-5-4.6 4.8-1.7zM344.5 438.9l5 4.6-4.7 1.7zM344.3 432.6l-4.7 1.7-.3-6.3zM344.3 432.6l4.7-1.8 .3 6.4zM344.5 438.9l-.2-6.3 5 4.6zM344.3 432.6l.2 6.3-4.9-4.6zM344.3 432.6l-5-4.6 4.7-1.8zM349 430.8l-4.7 1.8-.3-6.4zM339.6 434.3l-4.9-4.6 4.6-1.7zM334.4 423.4l.3 6.3-4.9-4.6zM334.7 429.7l-.3-6.3 4.9 4.6zM334.7 429.7l-4.6 1.7-.3-6.3zM334.7 429.7l4.9 4.6-4.6 1.7zM330.1 431.4l4.6-1.7 .3 6.3zM337.9 395.6l4.7-2 .3 6.6zM333.2 397.5l4.7-1.9 .3 6.5zM353.3 416.1l4.9-1.9 .2 6.6zM348.2 411.4l5.1 4.7-4.8 1.8zM353.3 416.1l-.2-6.6 5.1 4.7zM353.1 409.5l.2 6.6-5.1-4.7zM353.5 422.6l-.2-6.5 5.1 4.7zM353.3 416.1l.2 6.5-5-4.7zM379 439.7l5-1.7 .1 6.5zM384 438l-5 1.7-.2-6.5zM372 367.4l-5.1 2.2-.2-7zM377.4 372.2l-5.4-4.8 5.2-2.2zM366.9 369.6l5.1-2.2 .2 7zM372 367.4l5.4 4.8-5.2 2.2zM371.9 360.4l.1 7-5.3-4.8zM372 367.4l-.1-7 5.3 4.8zM355.9 346.2l-5.3-4.7 5-2.4zM376.9 351l-5.4-4.7 5.3-2.4zM371.5 346.3l5.4 4.7-5.2 2.3zM377.1 358.1l5.4 4.8-5.3 2.3zM371.9 360.4l5.2-2.3 .1 7.1zM377.1 358.1l-5.2 2.3-.2-7.1zM376.9 351l.2 7.1-5.4-4.8zM370.8 317.5l-5.3 2.5-.2-7.2zM376.6 336.7l-5.5-4.7 5.3-2.5zM371.1 332l5.5 4.7-5.3 2.4zM371.3 339.1l5.3-2.4 .2 7.2zM376.6 336.7l5.5 4.8-5.3 2.4zM442.8 264.8l-3.6 6.5-3.5-7.6zM432.2 256.2l7.1 1.1-3.6 6.4zM439.3 257.3l3.5 7.5-7.1-1.1zM469.3 233.2l7.6 1.1-4 6.7zM476.9 234.3l-7.6-1.1 4-6.7zM428.8 191.8l-3.6 6.9-3.6-7.7zM407.7 245.5l-3.4 6.2-3.5-7.2zM404.3 251.7l-6.8-1 3.3-6.2zM410.9 197l-3.6-7.6 7.1 .8zM411.2 252.8l-6.9-1.1 3.4-6.2zM421.6 261.2l-3.5 6.2-3.5-7.2zM418.1 253.9l3.5 7.3-7-1zM421.6 261.2l3.5-6.1 3.5 7.4zM435.9 235.8l-3.6-7.6 7.3 1zM432.3 228.2l3.6 7.6-7.2-1zM425.1 227.3l-3.5 6.5-3.6-7.5zM421.6 233.8l3.5-6.5 3.6 7.5zM425.1 227.3l7.2 .9-3.6 6.6zM333.1 240.7l-6.1-1 2.7-5.9zM370.9 246.6l-3.4-7.1 6.5 1zM364.4 245.7l-6.3-1 3-6.1zM320.3 226l2.7-6.1 3.4 7zM358.8 271.1l-4.5 4-2.3-5.9zM358.8 271.1l6.9 .4-2.1 5.3zM359 279.5l-.2-8.4 4.8 5.7zM358.8 271.1l.2 8.4-4.7-4.4zM359 279.5l-5.4 2.5 .7-6.9zM319 199.7l-2.7 6.3-3.4-7zM316.3 206l-6-.8 2.6-6.2zM322.4 206.8l-6.1-.8 2.7-6.3zM290.1 209l5.8 .7-2.5 6.1zM287.6 214.9l2.5-5.9 3.3 6.8zM290.1 209l-2.5 5.9-3.2-6.7zM309.6 192l-6-.8 2.6-6.2zM303.6 191.2l-3.4-6.9 6 .7zM303.6 191.2l-6-.7 2.6-6.2zM303.6 191.2l-2.6 6.3-3.4-7zM329.1 220.8l3.4 6.9-6.1-.8zM332.5 227.7l3.4 7-6.2-.9zM324.5 187.1l6.3 .7-2.8 6.4zM363.7 218.9l-6.5-.8 3.1-6.4zM363.7 218.9l3.1-6.3 3.5 7.2zM366.8 212.6l-3.1 6.3-3.4-7.2zM347.4 210l-6.3-.8 2.9-6.3zM426.9 306.2l5.9-2.2 0 7.5zM375.2 278.9l-5.8 .9 2.1-7.1zM365.7 271.5l3.7 8.3-5.8-3zM369.4 279.8l-3.7-8.3 5.8 1.2zM375.4 285.5l.2 7.4-5.4-5.1zM369.4 279.8l6 5.7-5.2 2.3zM375.4 285.5l-6-5.7 5.8-.9zM375.6 292.9l-.2-7.4 5.6 4.2zM378.4 273.9l-3.2 5-3.7-6.2zM381.1 281.9l5.4 6-5.5 1.8zM375.4 285.5l5.7-3.6-.1 7.8zM381.1 281.9l-5.7 3.6-.2-6.6zM378.4 273.9l2.7 8-5.9-3zM548.1 559.3l6.6-1.1-.5 6.6zM540.7 566.9l-.9 6.5-5.7-5.7zM545 506.7l6.3 5.4-6.7 1.5zM565 509.2l.6-7.1 6.5 5.5zM544.1 520.5l6.7-1.4-.4 6.8zM550.8 519.1l-6.7 1.4 .5-6.9zM557.1 524.5l-6.3-5.4 6.8-1.5zM550.8 519.1l.5-7 6.3 5.5zM569.3 542.4l7-1.3-.5 6.8zM569.3 542.4l-6.8 1.3 .5-6.8zM568.8 549.2l.5-6.8 6.5 5.5zM562.5 543.7l6.8-1.3-.5 6.8zM569.9 535.6l-.6 6.8-6.3-5.5zM569.3 542.4l.6-6.8 6.4 5.5zM569.9 535.6l-6.4-5.6 6.9-1.3zM576.9 534.2l-7 1.4 .5-6.9zM521.3 569.5l-.6 5.7-5.8-3.9zM514.9 571.3l5.8 3.9-6.4 2.7zM526.1 582.2l-5.4-7 6.2 .4zM520.2 580.1l.5-4.9 5.4 7zM508.9 571l.5-5.7 5.5 6zM508.5 575.8l.4-4.8 5.4 6.9zM503.2 567.1l5.7 3.9-6.2 2.7zM508.9 571l-.4 4.8-5.8-2.1zM469.5 548.6l-.3 6.4-5.4-5.8zM470.2 529.8l.2-6.4 5.6 5.1zM470.4 523.4l5.8-1.3-.2 6.4zM476.2 522.1l.2-6.4 5.6 5.1zM476.4 515.7l5.9-1.4-.3 6.5zM476.4 515.7l-5.7-5.1 5.9-1.4zM482.3 514.3l-5.9 1.4 .2-6.5zM476.2 522.1l5.6 5.1-5.8 1.3zM481.8 527.2l6-1.3-.3 6.5zM487.8 525.9l-6 1.3 .2-6.4zM481.8 527.2l-5.6-5.1 5.8-1.3zM448 515.9l5.5 5-5.6 1.3zM453.5 520.9l5.5 5.1-5.6 1.2zM459.1 519.7l-5.6 1.2 .1-6.3zM458.8 532.2l-.2 6.3-5.4-5.1zM415.9 511.4l5.2 4.8-5.2 1.3zM504.8 548l-6.2 1 .4-6.3zM474.9 553.2l5.8-.6-.4 6.4zM491.7 563l.4-6.4 5.6 4.6zM493.2 537.6l-.2 6.3-5.7-5.2zM493 543.9l.2-6.3 5.8 5.1zM488.2 512.9l-.2 6.6-5.7-5.2zM476.8 502.6l5.7 5.2-5.9 1.4zM482.5 507.8l-.2 6.5-5.7-5.1zM482.5 507.8l5.7 5.1-5.9 1.4zM494 518.1l5.8 5.2-6 1.4zM488 519.5l6-1.4-.2 6.6zM488.2 512.9l5.8 5.2-6 1.4zM500 367.9l-.3 7.7-6.3-5.3zM493.7 362.6l6.3 5.3-6.6 2.4zM486.7 380.3l-6.3 2.3 .2-7.6zM486.7 380.3l6.5-2.4-.3 7.6zM492.6 393.1l-6.1-5.3 6.4-2.3zM480.2 390.1l6 5.2-6.3 2.2zM486.2 395.3l6.4-2.2-.3 7.5zM486.2 395.3l-.2 7.4-6.1-5.2zM469.9 303.2l6.2 4.9-6.5 2.7zM469.9 303.2l-.3 7.6-6.1-5.8zM476.7 300.2l-6.8 3 .8-7.2zM469.9 303.2l6.8-3-.6 7.9zM469.9 303.2l-6-6.4 6.8-.8zM469.5 318.6l.1-7.8 6.3 5.1zM469.6 310.8l-6.3 2.4 .2-8.2zM469.5 318.6l-6.2-5.4 6.3-2.4zM463.3 313.2l6.2 5.4-6.3 2.5zM462.9 336.6l-.1 7.7-6.1-5.1zM494.5 287.6l-3.3-8.2 7.4 1.5zM494.5 287.6l3.9 7.2-8.3-.8zM475.9 291.5l.8 8.7-6-4.2zM476.7 300.2l-.8-8.7 7 6.1zM491.5 265.3l-3.7-7.7 7.8 1.1zM487.8 257.6l3.7 7.7-7.7-1.2zM476.2 262.9l4-6.5 3.6 7.7zM504.9 403.7l-6.1-5.4 6.5-2.2zM498.8 398.3l-.3 7.5-6.2-5.2zM499.1 390.8l-.3 7.5-6.2-5.2zM526.1 373.7l-.4 7.8-6.4-5.4zM444.5 351.7l6-2.4-.1 7.5zM450.5 349.3l-6 2.4 .1-7.5zM456.5 354.4l-6-5.1 6.1-2.5zM450.5 349.3l.1-7.6 6 5.1zM461.7 396.7l-6 2.1 .1-7.3zM455.7 398.8l6-2.1-.2 7.3zM582.1 378.1l-7.5 2.4 .6-8zM574.6 380.5l7.5-2.4-.6 8.1zM575.8 364.4l6.9 5.6-7.5 2.5zM585.7 511.7l.7-7.2 6.6 5.7zM580.3 491.7l-7.1 1.6 .5-7.3zM588.8 475.2l-.6 7.4-6.7-5.7zM584 446.8l-6.8-5.6 7.4-2.1zM577.2 441.2l-6.6-5.7 7.2-2zM561.2 467.5l7.1-1.8-.6 7.4zM560.2 482.2l-.5 7.2-6.5-5.5zM560.2 482.2l.5-7.3 6.5 5.5zM554.7 462l6.5 5.5-7 1.8zM552.3 498.1l6.8-1.6-.5 7.1zM559.1 496.5l6.5 5.6-7 1.5zM559.1 496.5l-6.8 1.6 .5-7.1zM565.6 502.1l-6.5-5.6 7-1.6zM559.7 489.4l-.6 7.1-6.3-5.5zM559.1 496.5l.6-7.1 6.4 5.5zM518.5 519.3l-6.3 1.3 .3-6.6zM512.2 520.6l6.3-1.3-.3 6.6zM511.9 527.3l.3-6.7 6 5.3zM512.2 520.6l-.3 6.7-5.9-5.3zM520.7 478l6.5-1.7-.4 7.1zM520.3 485l.4-7 6.1 5.4zM527.2 476.3l-6.5 1.7 .3-7.1zM485 432l-6.2 1.9 .2-7.2zM473.5 407l-5.9-5.2 6.1-2.1zM467.6 401.8l-.2 7.3-5.9-5.1zM467.6 401.8l-5.9-5.1 6.1-2.2zM492.1 408l-6.1-5.3 6.3-2.1zM510.1 431.3l-6.1-5.3 6.5-2.1zM504 426l-.3 7.3-6.1-5.3zM497.3 435.3l6.4-2-.3 7.3zM491 437.2l6.3-1.9-.3 7.2zM497.3 435.3l-6-5.3 6.3-2zM473.5 407l-.2 7.3-5.9-5.2zM467.2 416.4l-.1 7.1-5.9-5.1zM467.2 416.4l6.1-2.1-.2 7.2zM467.4 409.1l-.2 7.3-5.8-5.2zM331.3 357.4l-5.1-4.6 4.8-2.2zM302.4 272.3l.4 6.9-5.1-4.8zM313.1 288.2l-5.2-4.7 4.7-2.3zM302.8 279.2l5.1 4.3-4.7 2.7zM307.9 283.5l-.4-7.4 5.1 5.1zM278.4 334.8l4.3-2.2 .5 6.6zM282.3 325.9l.4 6.7-4.8-4.4zM292 334.7l-.4-6.7 4.9 4.5zM317.6 278.6l4.9-2.3 .3 7zM317.6 278.6l.3 7.1-5.3-4.5zM312.4 274.4l5.2 4.2-5 2.6zM317.9 285.7l.4 7-5.2-4.5zM351.1 355.4l5-2.2 .2 6.9zM323.2 290.3l5.2 4.4-4.9 2.6zM328.4 294.7l.3 7.1-5.2-4.5zM319 306.8l-4.8 2.5-.4-7zM319 306.8l5.2 4.6-4.9 2.4zM339.5 318l-4.9 2.5-.3-7zM295.7 318.9l-.5-6.8 5 4.4zM304.8 314.1l-5-4.5 4.6-2.4zM334.9 327.5l5.2 4.6-4.9 2.4zM324.5 318.3l4.9-2.4 .3 7zM329.4 315.9l-4.9 2.4-.3-6.9zM329.4 315.9l-.4-7 5.3 4.6zM334.6 320.5l-5.2-4.6 4.9-2.4zM340.4 339.1l4.9-2.3 .3 7zM345.3 336.8l-4.9 2.3-.3-7zM274.3 219.3l1.8-5.9 3.6 6.7zM278.9 207.5l-2.8 5.9-2.7-6.6zM276.1 213.4l2.8-5.9 3 6.7zM270.4 212.6l5.7 .8-1.8 5.9zM366 506.2l4.9 4.5-4.7 1.5zM375.8 515.6l-4.9-4.9 4.8-1.1zM366 506.2l-4.7 1.1-.2-5.8zM361.3 507.3l4.7-1.1 .2 6zM351.9 504l-4.6 1.5-.2-5.9zM356.5 502.9l-4.6 1.1-.3-5.8zM379.8 477.9l.2 6.1-5.1-4.7zM369.7 468.5l-4.8 1.5-.2-6.2zM375.5 503.6l-.1-6 5 4.7zM375.4 497.6l4.8-1.4 .2 6.1zM380.2 496.2l-4.8 1.4-.2-6zM380 484l.1 6.2-5-4.7zM380.1 490.2l.1 6-5-4.6zM360.5 483.6l-4.7 1.5-.2-6.1zM370.4 492.9l-.2-6 5 4.7zM369.7 468.5l.2 6.1-5-4.6zM437.1 518.6l0-6.3 5.4 4.9zM442.6 511l-5.5 1.3 .1-6.3zM442.6 511l5.4 4.9-5.5 1.3zM442.6 511l-5.4-5 5.5-1.4zM448.1 509.6l-5.5 1.4 .1-6.4zM437.2 506l0-6.3 5.5 4.9zM431.8 501.1l5.4-1.4 0 6.3zM380.5 508.2l-5-4.6 4.9-1.3zM375.7 509.6l4.8-1.4 .1 5.9zM375.5 503.6l5 4.6-4.8 1.4zM385.3 501l-5.1-4.8 5-1.3zM437.9 426.3l5.7-2-.1 7zM432.2 428.2l5.7-1.9-.1 6.9zM437.9 426.3l-5.7-5 5.7-2zM449 450.2l-5.6-5.1 5.7-1.8zM443.4 445.1l-5.7-5 5.7-1.8zM443.4 445.1l-.1 6.9-5.6-5.1zM454.9 441.5l-5.8 1.8 .1-6.9zM453.7 508.2l5.5 5.1-5.6 1.3zM459.4 506.9l5.7-1.4-.2 6.4zM459.2 513.3l.2-6.4 5.5 5zM448.2 503.2l-.1 6.4-5.4-5zM328.7 493.2l-4.7-4.6 4.4-1.2zM333.1 491.8l-4.4 1.4-.3-5.8zM328.7 493.2l4.4-1.4 .2 5.7zM338.1 502.3l-4.5 .7-.3-5.5zM315 485.5l-4.3 1.5-.3-5.8zM315 485.5l.3 5.7-4.6-4.2zM314.7 479.8l.3 5.7-4.6-4.3zM315 485.5l-.3-5.7 4.6 4.5zM319.6 490.1l-4.6-4.6 4.3-1.2zM315.3 491.2l-.3-5.7 4.6 4.6zM292.9 475.2l-4.5-4.3 4.1-1.4zM297.4 479.4l-4.5-4.2 4.1-1.4zM314.3 474l-.3-5.9 4.6 4.5zM314.3 474l-4.3 1.4-.3-5.8zM310 475.4l4.3-1.4 .4 5.8zM314.3 474l4.7 4.4-4.3 1.4zM319 478.4l-4.7-4.4 4.3-1.4zM288.7 416l.4 6.1-4.6-4.4zM360.9 495.6l4.9 4.7-4.7 1.2zM356.5 502.9l-.2-5.9 4.8 4.5zM360.9 495.6l-4.6 1.4-.3-6zM351.4 492.4l-.2-6 4.8 4.6zM351.4 492.4l-4.6 1.3-.2-5.9zM351.4 492.4l4.9 4.6-4.7 1.2zM337.5 490.5l.3 5.9-4.7-4.6zM338.1 502.3l-.3-5.9 4.7 4.3zM337.8 496.4l.3 5.9-4.8-4.8zM337.8 496.4l-.3-5.9 4.8 4.5zM332.5 480.1l4.7 4.6-4.4 1.3zM337.5 490.5l-.3-5.8 4.8 4.4zM337.2 484.7l-.2-6 4.8 4.6zM335.8 454.6l-4.8-4.5 4.5-1.6zM345.1 451.4l4.9 4.6-4.7 1.6zM339.9 440.6l4.6-1.7 .3 6.3zM339.6 434.3l.3 6.3-4.9-4.6zM344.5 438.9l-4.6 1.7-.3-6.3zM345.1 451.4l4.6-1.6 .3 6.2zM349.7 449.8l-4.6 1.6-.3-6.2zM349.5 443.5l.2 6.3-4.9-4.6zM354.9 460.7l.3 6.1-5-4.6zM350 456l4.9 4.7-4.7 1.5zM360.5 483.6l-.2-6 5 4.6zM336.4 466.8l4.6-1.5 .2 6zM341 465.3l-4.6 1.5-.3-6.1zM350.7 474.4l-4.9-4.6 4.7-1.5zM341 465.3l4.8 4.5-4.6 1.5zM345.8 469.8l-.2-6 4.9 4.5zM345.8 469.8l-4.8-4.5 4.6-1.5zM341.2 471.3l4.9 4.6-4.6 1.4zM345.8 469.8l.3 6.1-4.9-4.6zM346.1 475.9l-.3-6.1 4.9 4.6zM346.1 475.9l4.8 4.6-4.6 1.4zM335.8 454.6l-4.5 1.6-.3-6.1zM319 396.8l-.4-6.5 4.9 4.6zM323.2 388.4l-.3-6.6 4.9 4.6zM333.2 397.5l-5-4.6 4.7-1.9zM328.2 392.9l-5-4.5 4.6-2zM323.2 388.4l5 4.5-4.7 2zM328.2 392.9l.3 6.6-5-4.6zM328.5 399.5l-.3-6.6 5 4.6zM318.6 390.3l-.3-6.5 4.9 4.6zM321.4 441l-4.5 1.6-.3-6.1zM316.2 430.3l-.3-6.2 4.8 4.5zM316.2 430.3l4.8 4.5-4.4 1.7zM565.1 261.6l8.6 1.3-4.8 7zM556.7 260.4l-4.7 6.9-3.7-8.1zM582.2 264.2l-4.7 7-3.8-8.3zM590.8 265.5l-8.6-1.3 5.2-7zM577.5 271.2l4.7-7 4.1 8.4zM577.5 271.2l-4.8 6.8-3.8-8.1zM564.1 276.6l8.6 1.4-4.8 6.7zM572.7 278l-8.6-1.4 4.8-6.7zM572.7 278l3.8 8.3-8.6-1.6zM557.6 245.2l4.8-7.1 3.7 8.3zM574.7 247.6l-3.7-8.3 8.7 1.1zM599.2 266.8l8.1 1.1-3.1 7.5zM590.8 265.5l4.3 8.5-8.8-1.4zM599.2 266.8l-4.1 7.2-4.3-8.5zM589.7 280.9l5.4-6.9 2.9 8.3zM595.1 274l4.1-7.2 5 8.6zM523 270.4l-3.7-8 8 1.2zM523 270.4l4.3-6.8 3.7 8zM516.3 239.6l3.7 8-8.1-1.1zM516.3 239.6l-3.7-8 8.1 1.1zM524.4 240.7l-8.1-1.1 4.4-6.9zM520 247.6l-3.7-8 8.1 1.1zM523.7 255.6l-3.7-8 8.1 1.2zM519.3 262.4l4.4-6.8 3.6 8zM527.3 263.6l-3.6-8 8.1 1.2zM544.6 251.1l4.6-7 3.7 8.2zM549.2 244.1l8.4 1.1-4.7 7.1zM540.8 243l-3.7-8.2 8.4 1.1zM549.2 244.1l-8.4-1.1 4.7-7.1zM540.8 243l-4.5 6.9-3.7-8.1zM537.1 234.8l3.7 8.2-8.2-1.2zM561.8 306l-3.2-8.2 8.3 1.9zM558.6 297.8l3.2 8.2-7.5-1.4zM554.3 304.6l7.5 1.4-4.3 7.8zM561.8 306l3.5 7.2-7.8 .6zM565.3 313.2l-3.5-7.2 8.7 1.7zM585.9 329l1.1-8.3 6.8 6.1zM550.1 310.4l4.2-5.8 3.2 9.2zM550.1 310.4l-4.4-7.1 8.6 1.3zM558.6 297.8l-3.8-7.8 8.4 1.4zM554.8 290l3.8 7.8-8.3-1zM554.8 290l-8.2-1.4 4.5-6.6zM546.6 288.6l-4.4 6.4-3.9-7.5zM534.6 279.6l-3.6-8 8.1 1.3zM534.6 279.6l-7.9-1.3 4.3-6.7zM520.5 352.6l-6.9 2.6 .4-7.9zM520.5 352.6l.3-7.9 6.6 5.4zM516.3 239.6l-8-1.1 4.3-6.9zM512.6 231.6l-4.3 6.9-3.7-7.9zM500.3 237.4l-3.7-7.9 8 1.1zM508.3 238.5l-8-1.1 4.3-6.8zM496.6 229.5l3.7 7.9-7.9-1zM499.8 252.1l3.6 7.8-7.8-1.2zM496.6 229.5l-7.8-1 4.1-6.9zM488.8 228.5l7.8 1-4.2 6.9zM500.9 222.6l-3.7-8 7.9 .9zM496.6 229.5l4.3-6.9 3.7 8zM497.2 214.6l3.7 8-8-1zM500.9 222.6l8 1-4.3 7zM470 203.8l-3.7-7.9 7.7 .9zM368.1 410.4l5-1.9 .2 6.7zM368.1 410.4l.2 6.7-5.2-4.8zM368.3 417.1l-.2-6.7 5.2 4.8zM373.1 408.5l-5.2-4.8 5-1.9zM383.6 418.1l.1 6.7-5.2-4.8zM383.7 424.8l-5.1 1.8-.1-6.6zM383.9 431.4l-.2-6.6 5.3 4.8zM383.7 424.8l.2 6.6-5.3-4.8zM362 378.6l-5 2.2-.2-6.9zM362 378.6l5.3 4.8-5 2.1zM357 380.8l5-2.2 .3 6.9zM362 378.6l-.2-6.8 5.3 4.7zM361.8 371.8l.2 6.8-5.2-4.7zM342.1 380.2l4.8-2 .3 6.7zM295.9 393.6l-.4-6.4 4.8 4.5zM291.2 389.1l4.3-1.9 .4 6.4zM331.9 371l.3 6.7-5-4.6zM331.6 364.2l.3 6.8-5-4.6zM337.6 389l-5.1-4.7 4.8-2zM337.6 389l.3 6.6-5-4.6zM332.5 384.3l-5-4.6 4.7-2zM327.5 379.7l-5-4.5 4.7-2.1zM327.5 379.7l-4.6 2.1-.4-6.6zM322.9 381.8l4.6-2.1 .3 6.7zM357.3 387.5l.2 6.8-5.2-4.7zM353.1 409.5l4.9-1.9 .2 6.6zM348.8 424.4l.2 6.4-5-4.6zM343.7 419.8l5.1 4.6-4.8 1.8zM353.5 422.6l-4.7 1.8-.3-6.5zM348.8 424.4l-5.1-4.6 4.8-1.9zM349 430.8l5 4.7-4.7 1.7zM354 435.5l4.8-1.7 .3 6.4zM379 439.7l-5.2-4.7 5-1.8zM373.9 441.4l-.1-6.4 5.2 4.7zM363.3 418.9l.2 6.6-5.1-4.7zM368.4 423.7l-4.9 1.8-.2-6.6zM363.5 425.5l-4.9 1.8-.2-6.5zM363.5 425.5l.2 6.5-5.1-4.7zM349.5 443.5l4.7-1.6 .3 6.3zM354.2 441.9l5.1 4.6-4.8 1.7zM354.2 441.9l-4.7 1.6-.2-6.3zM359.3 446.5l-5.1-4.6 4.9-1.7zM354.2 441.9l-.2-6.4 5.1 4.7zM354 435.5l.2 6.4-4.9-4.7zM364.5 457.5l5 4.7-4.8 1.6zM369.5 462.2l.2 6.3-5-4.7zM369.7 468.5l-.2-6.3 5.1 4.7zM324.2 407.8l.3 6.4-4.8-4.5zM319.3 403.3l4.9 4.5-4.5 1.9zM334.4 423.4l-4.9-4.6 4.6-1.8zM324.5 414.2l5 4.6-4.6 1.8zM324.9 420.6l4.6-1.8 .3 6.3zM329.5 418.8l4.9 4.6-4.6 1.7zM348.2 411.4l-4.7 1.9-.3-6.5zM343.5 413.3l4.7-1.9 .3 6.5zM343.7 419.8l-.2-6.5 5 4.6zM338.7 415.1l4.8-1.8 .2 6.5zM389.1 436.2l-5.1 1.8-.1-6.6zM384 438l5.1-1.8 .1 6.6zM389.1 436.2l-5.2-4.8 5.1-1.8zM382.1 341.5l.1 7.2-5.4-4.8zM382.4 355.8l-5.3 2.3-.2-7.1zM377.1 358.1l5.3-2.3 .1 7.1zM382.2 348.7l.2 7.1-5.5-4.8zM443.6 193.4l-3.8 7-3.6-7.8zM443.4 208.1l-3.6-7.7 7.4 .8zM446.9 230.2l7.4 1-3.8 6.6zM400.9 257.9l-3.4-7.2 6.8 1zM425 268.6l-3.4-7.4 7 1.3zM458.4 209.9l-3.7-7.8 7.6 .9zM307.1 255.2l3 6.8-5.3-.8zM323.6 232.9l2.8-6 3.3 6.9zM317 219.1l-6-.9 2.6-6.1zM290.9 221.7l-5.6-.8 2.3-6zM302.5 223.4l3.3 6.8-5.9-.8zM298.4 203.6l3.4 6.9-5.9-.8zM294.2 228.5l2.5-5.9 3.2 6.8zM296.7 222.6l-5.8-.9 2.5-5.9zM294.9 241.2l-5.6-1.1 2.5-5.7zM294.2 228.5l3.2 6.8-5.6-.9zM294.9 241.2l2.5-5.9 3.3 6.6zM364.7 284.1l-5.7-4.6 4.6-2.7zM369.4 279.8l-4.7 4.3-1.1-7.3zM364.7 284.1l4.7-4.3 .8 8zM358.8 271.1l-3.3-7.1 6.3 1.1zM303.6 191.2l3.3 7-5.9-.7zM306.9 198.2l-3.3-7 6 .8zM306.9 198.2l2.7-6.2 3.3 7zM310.3 205.2l-3.4-7 6 .8zM301 197.5l-5.9-.8 2.5-6.2zM298.4 203.6l-3.3-6.9 5.9 .8zM295.1 196.7l-3.4-6.9 5.9 .7zM339.2 241.7l-2.8 6-3.3-7zM338.7 228.7l3.4 7-6.2-1zM342.1 235.7l-2.9 6-3.3-7zM348.4 236.7l-6.3-1 2.9-6.1zM345.5 242.7l-3.4-7 6.3 1zM337.6 202.1l-3.4-7.2 6.3 .8zM383.6 221.6l6.7 .9-3.2 6.4zM383.6 221.6l3.5 7.3-6.7-.9zM400.7 230.8l-3.5-7.4 6.9 1zM397.2 223.4l3.5 7.4-6.9-.9zM390.3 222.5l6.9 .9-3.4 6.5zM347.4 210l3-6.3 3.4 7.2zM353.8 210.9l-3.4-7.2 6.4 .8zM350.4 203.7l-3 6.3-3.4-7.1zM381.1 297.4l-5.5-4.5 5.4-3.2zM450.6 341.7l.1-7.6 6 5.1zM450.7 334.1l-.1 7.6-6-5zM542.4 547.3l6.1 5.4-6.5 1.2zM548.5 552.7l-.4 6.6-6.1-5.4zM555.2 551.6l-6.7 1.1 .5-6.6zM548.5 552.7l-6.1-5.4 6.6-1.2zM554.7 558.2l-6.2-5.5 6.7-1.1zM548.1 559.3l.4-6.6 6.2 5.5zM547.4 565.7l-.9 6.3-5.8-5.1zM547.4 565.7l.7-6.4 6.1 5.5zM547.4 565.7l6.8-.9-.9 6.4zM551.8 505.2l-6.8 1.5 .5-7zM552.3 498.1l-.5 7.1-6.3-5.5zM551.8 505.2l.5-7.1 6.3 5.5zM551.8 505.2l6.3 5.5-6.8 1.4zM565 509.2l-6.9 1.5 .5-7.1zM557.6 517.6l6.9-1.4-.5 6.9zM558.1 510.7l6.4 5.5-6.9 1.4zM535.9 548.5l6.5-1.2-.4 6.6zM493.5 531.1l-.3 6.5-5.7-5.2zM487.8 525.9l5.7 5.2-6 1.3zM493.5 531.1l-5.7-5.2 6-1.2zM499.6 529.8l-6.1 1.3 .3-6.4zM499.3 536.3l-5.8-5.2 6.1-1.3zM493.2 537.6l6.1-1.3-.3 6.4zM493.5 531.1l5.8 5.2-6.1 1.3zM459.2 513.3l5.6 5-5.7 1.4zM464.8 518.3l5.6 5.1-5.8 1.3zM475.8 534.8l-5.8 1.3 .2-6.3zM470 536.1l5.8-1.3-.3 6.3zM431.7 513.6l5.4 5-5.4 1.2zM437.1 518.6l-5.4-5 5.4-1.3zM426.4 508.7l-5.3-4.9 5.3-1.3zM437.1 512.3l-5.3-4.9 5.4-1.4zM431.8 507.4l-5.4 1.3 0-6.2zM431.7 513.6l.1-6.2 5.3 4.9zM431.8 507.4l-.1 6.2-5.3-4.9zM431.8 501.1l0 6.3-5.4-4.9zM431.8 507.4l0-6.3 5.4 4.9zM421.1 516.2l0 6.1-5.2-4.8zM421.1 522.3l0-6.1 5.3 4.9zM421.1 522.3l-5.2 1.3 0-6.1zM415.9 523.6l5.2-1.3 0 5.9zM421.1 522.3l5.3-1.2-.1 6.1zM421.1 510l0 6.2-5.2-4.8zM421.1 510l0-6.2 5.3 4.9zM426.4 514.9l5.3-1.3 0 6.2zM431.7 513.6l-5.3 1.3 0-6.2zM426.4 521.1l0-6.2 5.3 4.9zM421.1 516.2l5.3-1.3 0 6.2zM426.4 514.9l-5.3-4.9 5.3-1.3zM421.1 510l5.3 4.9-5.3 1.3zM447.8 528.5l-5.5 1.1 .1-6.1zM442.3 529.6l-.1 6-5.3-4.7zM505.1 541.5l-.3 6.5-5.8-5.3zM499.3 536.3l5.8 5.2-6.1 1.2zM504.8 548l-.5 6.3-5.7-5.3zM503.7 560.7l.6-6.4 5.6 5zM486.2 557.2l-.3 5.6-5.6-3.8zM480.7 552.6l5.5 4.6-5.9 1.8zM486.2 557.2l-5.5-4.6 5.9-1.4zM492.1 556.6l-5.9 .6 .4-6zM485.9 562.8l.3-5.6 5.5 5.8zM486.2 557.2l5.9-.6-.4 6.4zM480.7 552.6l.3-6.3 5.6 4.9zM481.4 540l-.4 6.3-5.5-5.2zM492.6 550.3l-.5 6.3-5.5-5.4zM492.6 550.3l.4-6.4 5.6 5.1zM487 372.7l.2-7.6 6.2 5.2zM486.7 380.3l.3-7.6 6.2 5.2zM480.8 367.5l6.2 5.2-6.4 2.3zM462.1 374.5l6.2-2.3-.2 7.5zM462.3 367l6 5.2-6.2 2.3zM468.5 364.7l-.2 7.5-6-5.2zM474.5 369.8l-6.2 2.4 .2-7.5zM515 269.1l-3.7-7.9 8 1.2zM515 269.1l-4.3 6.4-3.6-7.7zM482.9 297.6l.1-6.9 7.1 3.3zM475.9 291.5l7.1-.8-.1 6.9zM483.4 278.2l4-6.4 3.8 7.6zM457.4 267l7.4 1.3-3.9 6.2zM461.2 260.6l3.6 7.7-7.4-1.3zM462 382l-6-5.2 6.1-2.3zM456 376.8l.2-7.4 5.9 5.1zM456.2 369.4l-.2 7.4-5.8-5.1zM455.8 391.5l.1-7.3 5.9 5.1zM455.9 384.2l.1-7.4 6 5.2zM456 376.8l-.1 7.4-5.9-5.1zM566.1 398.8l7.4-2.3-.6 7.9zM566.1 398.8l6.8 5.6-7.3 2.3zM573.5 396.5l-7.4 2.3 .6-7.9zM573.2 493.3l-.6 7.2-6.5-5.6zM572.6 500.5l-7 1.6 .5-7.2zM579.7 498.9l.6-7.2 6.7 5.6zM579.7 498.9l-6.5-5.6 7.1-1.6zM586.4 504.5l-6.7-5.6 7.3-1.6zM579.7 498.9l-7.1 1.6 .6-7.2zM594.3 495.7l-.7 7.3-6.6-5.7zM586.4 504.5l7.2-1.5-.6 7.2zM593.6 503l-7.2 1.5 .6-7.2zM580.9 484.3l-7.2 1.7 .6-7.3zM581.5 476.9l-.6 7.4-6.6-5.6zM580.9 484.3l-.6 7.4-6.6-5.7zM581.5 476.9l-6.6-5.6 7.2-1.8zM574.9 471.3l-6.6-5.6 7.2-1.8zM567.7 473.1l7.2-1.8-.6 7.4zM560.2 482.2l-6.5-5.6 7-1.7zM560.7 474.9l-7 1.7 .5-7.3zM553.7 476.6l-.5 7.3-6.3-5.5zM553.7 476.6l6.5 5.6-7 1.7zM559.7 489.4l6.9-1.7-.5 7.2zM566.6 487.7l6.6 5.6-7.1 1.6zM573.2 493.3l-6.6-5.6 7.1-1.7zM573.7 486l-7.1 1.7 .6-7.3zM566.6 487.7l-6.4-5.5 7-1.8zM540.1 480.1l.4-7.2 6.4 5.5zM540.5 472.9l-.4 7.2-6.3-5.5zM568.3 465.7l-6.6-5.6 7.2-1.8zM571.5 514.7l-7 1.5 .5-7zM578.6 513.2l-7.1 1.5 .6-7.1zM506.3 515.4l5.9 5.2-6.2 1.4zM514.6 472.7l-6.1-5.4 6.4-1.7zM514.9 465.6l-6.1-5.4 6.5-1.8zM509.1 453.1l-.3 7.1-6.1-5.3zM486 402.7l-.3 7.4-6-5.2zM479.3 419.5l-6-5.2 6.2-2.1zM473.1 421.5l6.2-2-.3 7.2zM321.8 361.8l-.3-6.8 5 4.6zM294.2 367.8l4.4-2.1 .5 6.6zM298.2 359.2l.4 6.5-4.8-4.4zM298.2 281.6l-5-4 4.5-3.2zM313.4 295.3l-5.1-4.7 4.8-2.4zM318.3 292.7l-4.9 2.6-.3-7.1zM296.5 332.5l5 4.4-4.6 2.3zM287.1 330.3l-4.4 2.3-.4-6.7zM291.6 328l-4.5 2.3-.4-6.7zM291.6 328l-.5-6.8 5 4.5zM291.1 321.2l.5 6.8-4.9-4.4zM304.8 261.2l2.6 7.6-5.3-2.8zM307.4 268.8l.1 7.3-5.1-3.8zM312.6 267.9l-5.2 .9 2.7-6.8zM307.4 268.8l5.2-.9-.2 6.5zM309.5 311.7l-4.7 2.4-.4-6.9zM295.7 318.9l-5-4.4 4.5-2.4zM370.7 504.8l.2 5.9-4.9-4.5zM365.8 500.3l4.9 4.5-4.7 1.4zM370.7 504.8l4.8-1.2 .2 6zM379.1 446.2l.1 6.4-5.1-4.7zM365.5 488.3l4.9 4.6-4.8 1.4zM370.2 486.9l-4.7 1.4-.2-6.1zM370.1 480.8l-.2-6.2 5 4.7zM370.2 486.9l-.1-6.1 5 4.7zM385.5 513l.1 6.1-5-5zM385.5 513l4.9-1.3 .1 5.8zM437.3 493.3l-.1 6.4-5.4-5zM385.3 501l.1 6-5-4.7zM385.4 507l.1 6-5-4.8zM448.2 503.2l5.6-1.4-.1 6.4zM453.9 495.3l-.1 6.5-5.5-5zM328.7 493.2l-4.4 1.1-.3-5.7zM324 488.6l.3 5.7-4.7-4.2zM320 495.9l4.3-1.6 .3 5.5zM324.3 494.3l-4.3 1.6-.4-5.8zM324.3 494.3l4.7 4.8-4.4 .7zM329 499.1l-4.7-4.8 4.4-1.1zM329 499.1l-.3-5.9 4.6 4.3zM333.6 503l-4.6-3.9 4.3-1.6zM329.6 511l4.3-2.7 .2 4.4zM287.5 459.4l4.6 4.3-4.1 1.4zM288 465.1l4.1-1.4 .4 5.8zM360.7 489.7l-4.7 1.3-.2-5.9zM365.5 488.3l-4.8 1.4-.2-6.1zM360.9 495.6l-.2-5.9 4.9 4.6zM331 450.1l-.3-6.2 4.8 4.6zM330.4 437.7l.3 6.2-4.8-4.5zM326.2 445.5l4.8 4.6-4.5 1.5zM330.7 443.9l-4.5 1.6-.3-6.1zM340.4 453l-4.6 1.6-.3-6.1zM340.4 453l4.7-1.6 .2 6.2zM345.6 463.8l-4.9-4.6 4.6-1.6zM340.7 459.2l-.3-6.2 4.9 4.6zM340.4 453l.3 6.2-4.9-4.6zM335.8 454.6l4.9 4.6-4.6 1.5zM340.7 459.2l.3 6.1-4.9-4.6zM341 465.3l-.3-6.1 4.9 4.6zM340.1 446.8l-.2-6.2 4.9 4.6zM345.1 451.4l-5-4.6 4.7-1.6zM340.1 446.8l.3 6.2-4.9-4.5zM340.4 453l-.3-6.2 5 4.6zM354.9 460.7l5 4.6-4.7 1.5zM360.1 471.5l-.2-6.2 5 4.7zM359.9 465.3l.2 6.2-4.9-4.7zM364.9 470l-5-4.7 4.8-1.5zM354.7 454.4l.2 6.3-4.9-4.7zM349.7 449.8l5 4.6-4.7 1.6zM359.5 452.8l-4.8 1.6-.2-6.2zM354.7 454.4l-5-4.6 4.8-1.6zM355.4 473l4.9 4.6-4.7 1.4zM360.3 477.6l-4.9-4.6 4.7-1.5zM355.4 473l-4.7 1.4-.2-6.1zM355.4 473l-4.9-4.7 4.7-1.5zM360.1 471.5l-4.7 1.5-.2-6.2zM365.1 476.1l-4.8 1.5-.2-6.1zM365.1 476.1l-5-4.6 4.8-1.5zM369.9 474.6l-4.8 1.5-.2-6.1zM365.1 476.1l5 4.7-4.8 1.4zM323.9 401.4l-4.9-4.6 4.5-1.9zM328.5 399.5l-4.6 1.9-.4-6.5zM323.9 401.4l4.6-1.9 .3 6.5zM319 396.8l4.9 4.6-4.6 1.9zM323.9 401.4l.3 6.4-4.9-4.5zM324.2 407.8l-.3-6.4 4.9 4.6zM328.8 406l4.7-1.9 .3 6.4zM333.5 404.1l-5-4.6 4.7-2zM561.4 253.5l-4.7 6.9-3.8-8.1zM565.1 261.6l-4.7 6.9-3.7-8.1zM560.4 268.5l-8.4-1.2 4.7-6.9zM560.4 268.5l3.7 8.1-8.4-1.3zM564.1 276.6l-3.7-8.1 8.5 1.4zM552 267.3l-4.6 6.8-3.7-8.1zM543.7 266l3.7 8.1-8.3-1.2zM551.1 282l-3.7-7.9 8.3 1.2zM581.1 279.4l-8.4-1.4 4.8-6.8zM585.1 287.7l-4-8.3 8.6 1.5zM581.1 279.4l4 8.3-8.6-1.4zM589.7 280.9l-8.6-1.5 5.2-6.8zM581.1 279.4l-3.6-8.2 8.8 1.4zM578.6 255.9l-3.9-8.3 8.6 1.2zM578.6 255.9l3.6 8.3-8.5-1.3zM587.4 257.2l-8.8-1.3 4.7-7.1zM582.2 264.2l-3.6-8.3 8.8 1.3zM574.7 247.6l-4.8 7.1-3.8-8.3zM569.9 254.7l-8.5-1.2 4.7-7.1zM561.4 253.5l8.5 1.2-4.8 6.9zM565.1 261.6l4.8-6.9 3.8 8.2zM569.9 254.7l8.7 1.2-4.9 7zM578.6 255.9l-8.7-1.2 4.8-7.1zM507.7 253.3l3.6 7.9-7.9-1.3zM499.8 252.1l7.9 1.2-4.3 6.6zM507.7 253.3l7.9 1.1-4.3 6.8zM523.7 255.6l-8.1-1.2 4.4-6.8zM549.2 244.1l4.7-7.1 3.7 8.2zM558.6 229.8l-4.7 7.2-3.8-8.2zM553.9 237l-8.4-1.1 4.6-7.1zM553.9 237l-4.7 7.1-3.7-8.2zM562.4 238.1l-8.5-1.1 4.7-7.2zM557.6 245.2l-3.7-8.2 8.5 1.1zM564.5 320.4l-7.5 2 .5-8.6zM565.3 313.2l-.8 7.2-7-6.6zM564.5 320.4l8.1-3.7-1.3 8.6zM580.5 316l-7.9 .7 5.7-7.8zM572.6 316.7l-2.1-9 7.8 1.2zM572.6 316.7l6.3 6.9-7.6 1.7zM578.9 323.6l-6.3-6.9 7.9-.7zM563.7 328.4l.8-8 6.8 4.9zM557 322.4l-7.1-4.7 7.6-3.9zM549.9 317.7l.2-7.3 7.4 3.4zM542.6 311.1l7.3 6.6-7 2.3zM549.9 317.7l-7.3-6.6 7.5-.7zM559.5 283.4l4.6-6.8 3.8 8.1zM563.2 291.4l-3.7-8 8.4 1.3zM559.5 283.4l-4.7 6.6-3.7-8zM542.8 280.8l3.8 7.8-8.3-1.1zM534.6 279.6l8.2 1.2-4.5 6.7zM547.4 274.1l-4.6 6.7-3.7-7.9zM542.8 280.8l4.6-6.7 3.7 7.9zM520.5 352.6l-.4 7.9-6.5-5.3zM484.6 235.3l4.2-6.8 3.6 7.9zM480.6 242l4-6.7 3.7 7.8zM488.8 228.5l-4.2 6.8-3.6-7.8zM484.6 235.3l-4 6.7-3.7-7.7zM362.9 405.7l5-2 .2 6.7zM358 407.6l4.9-1.9 .2 6.6zM378.3 413.3l5.2-1.9 .1 6.7zM378.3 413.3l-5.2-4.8 5.1-2zM373.3 415.2l5-1.9 .2 6.7zM378.3 413.3l5.3 4.8-5.1 1.9zM394.2 427.7l.1 6.7-5.3-4.8zM383.5 411.4l5.3 4.8-5.2 1.9zM388.8 416.2l5.2-2 .1 6.8zM325.9 346l4.7-2.3 .4 6.9zM325.5 339.1l5.1 4.6-4.7 2.3zM342.4 386.9l4.8-2 .3 6.7zM337.6 389l4.8-2.1 .2 6.7zM342.1 380.2l.3 6.7-5.1-4.6zM362.7 399l-5.2-4.7 5-2zM367.9 403.7l-5.2-4.7 5-2zM362.7 399l.2 6.7-5.2-4.7zM352.6 396.3l4.9-2 .2 6.7zM352.3 389.6l.3 6.7-5.1-4.7zM358 407.6l-5.2-4.7 4.9-1.9zM352.6 396.3l.2 6.6-5.1-4.6zM352.8 402.9l.3 6.6-5.1-4.6zM348.8 424.4l5 4.7-4.8 1.7zM354 435.5l-.2-6.4 5 4.7zM353.8 429.1l.2 6.4-5-4.7zM358.8 433.8l-5-4.7 4.8-1.8zM353.8 429.1l-.3-6.5 5.1 4.7zM353.8 429.1l-5-4.7 4.7-1.8zM368.8 436.7l5-1.7 .1 6.4zM363.7 432l5.1 4.7-4.9 1.7zM368.8 436.7l.2 6.5-5.1-4.8zM368.8 436.7l5.1 4.7-4.9 1.8zM363.5 425.5l5.1 4.7-4.9 1.8zM368.6 430.2l.2 6.5-5.1-4.7zM368.8 436.7l-.2-6.5 5.2 4.8zM368.6 430.2l-5.1-4.7 4.9-1.8zM324.2 407.8l4.9 4.6-4.6 1.8zM329.5 418.8l-.4-6.4 5 4.6zM329.1 412.4l.4 6.4-5-4.6zM334.1 417l-5-4.6 4.7-1.9zM329.1 412.4l-.3-6.4 5 4.5zM329.1 412.4l-4.9-4.6 4.6-1.8zM446.9 230.2l-3.8 6.6-3.5-7.6zM443.1 236.8l3.8-6.6 3.6 7.6zM443.1 236.8l-7.2-1 3.7-6.6zM400.9 257.9l-6.7-1 3.3-6.2zM411.2 252.8l-3.4 6.2-3.5-7.3zM407.8 259l-6.9-1.1 3.4-6.2zM407.8 259l3.4-6.2 3.4 7.4zM454.7 202.1l-3.8 6.9-3.7-7.8zM470 203.8l-4 7-3.7-7.8zM295.7 253.4l2.5-5.6 3.2 6.8zM294.9 241.2l3.3 6.6-5.7-.8zM303.9 248.7l-5.7-.9 2.5-5.9zM303.9 248.7l3.2 6.5-5.7-.6zM320.9 238.8l2.7-5.9 3.4 6.8zM296.7 222.6l2.5-6 3.3 6.8zM359.9 308.1l5.2-2.5 .2 7.2zM375.8 300.3l-5.5-4.9 5.3-2.5zM314.3 225.1l-5.9-.9 2.6-6zM305.8 230.2l2.6-6 3.3 6.9zM305.1 217.4l3.3 6.8-5.9-.8zM306.9 198.2l-2.6 6.2-3.3-6.9zM304.3 204.4l-5.9-.8 2.6-6.1zM304.3 204.4l-2.5 6.1-3.4-6.9zM304.3 204.4l2.6-6.2 3.4 7zM292.6 202.9l5.8 .7-2.5 6.1zM292.6 202.9l2.5-6.2 3.3 6.9zM295.1 196.7l-2.5 6.2-3.3-6.9zM292.6 202.9l-2.5 6.1-3.3-6.9zM331.4 201.3l2.8-6.4 3.4 7.2zM334.2 194.9l-2.8 6.4-3.4-7.1zM331.4 201.3l-6.2-.8 2.8-6.3zM331.4 201.3l-2.8 6.3-3.4-7.1zM450.7 334.1l6.2-2.6-.2 7.7zM456.9 331.5l-6.1-5.1 6.2-2.6zM450.8 326.4l6.1 5.1-6.2 2.6zM450.8 326.4l-.1 7.7-6-5zM463.3 313.2l-6-4.9 6.2-3.3zM541.5 560.5l-.8 6.4-5.8-5.5zM541.5 560.5l5.9 5.2-6.7 1.2zM535.5 555l6 5.5-6.6 .9zM541.5 560.5l-6-5.5 6.5-1.1zM548.1 559.3l-6.6 1.2 .5-6.6zM547.4 565.7l-5.9-5.2 6.6-1.2zM564.5 516.2l6.5 5.5-7 1.4zM470.5 517l5.9-1.3-.2 6.4zM470.4 523.4l.1-6.4 5.7 5.1zM470.5 517l-5.7 1.3 .1-6.4zM470.7 510.6l-.2 6.4-5.6-5.1zM476.4 515.7l-5.9 1.3 .2-6.4zM487 545l5.6 5.3-6 .9zM492.6 550.3l-5.6-5.3 6-1.1zM481 546.3l6-1.3-.4 6.2zM487 545l-6 1.3 .4-6.3zM493 543.9l-6 1.1 .3-6.3zM487 545l-5.6-5 5.9-1.3zM481.6 533.6l-5.8 1.2 .2-6.3zM487.3 538.7l-5.7-5.1 5.9-1.2zM481.6 533.6l.2-6.4 5.7 5.2zM475.8 534.8l5.8-1.2-.2 6.4zM421.1 503.8l-5.3-4.8 5.3-1.4zM410.7 512.6l5.2-1.2 0 6.1zM410.7 512.6l-.1-6.1 5.3 4.9zM385.4 507l4.9-1.3 .1 6zM400.5 515.1l-5.1-4.6 5-1.4zM395.4 510.5l.1 6-5.1-4.8zM421.1 510l-5.3-4.8 5.3-1.4zM410.6 506.5l5.2-1.3 .1 6.2zM415.8 505.2l5.3 4.8-5.2 1.4zM415.8 499l0 6.2-5.2-4.9zM437 524.8l-.1 6.1-5.3-5zM437 524.8l5.3 4.8-5.4 1.3zM437.1 518.6l-.1 6.2-5.3-5zM437 524.8l.1-6.2 5.3 4.9zM505.1 541.5l.3-6.4 5.8 5.2zM505.4 535.1l-.3 6.4-5.8-5.2zM511.2 540.3l-5.8-5.2 6.2-1.3zM505.4 535.1l-6.1 1.2 .3-6.5zM511.6 533.8l-6.2 1.3 .3-6.5zM505.4 535.1l-5.8-5.3 6.1-1.2zM505.1 541.5l5.8 5.2-6.1 1.3zM510.9 546.7l-5.8-5.2 6.1-1.2zM475.2 547.2l5.5 5.4-5.8 .6zM475.2 547.2l5.8-.9-.3 6.3zM481 546.3l-5.8 .9 .3-6.1zM475.5 541.1l-.3 6.1-5.5-4.9zM469.5 548.6l5.7-1.4-.3 6zM492.1 556.6l6.1-1.4-.5 6zM492.6 550.3l5.6 4.9-6.1 1.4zM498.2 555.2l-5.6-4.9 6-1.3zM504.3 554.3l-6.1 .9 .4-6.2zM498.2 555.2l5.5 5.5-6 .5zM498.2 555.2l6.1-.9-.6 6.4zM468.3 372.2l6 5.2-6.2 2.3zM474.3 377.4l.2-7.6 6.1 5.2zM474.1 384.9l.2-7.5 6.1 5.2zM502.3 288.3l3.2 7.8-7.1-1.3zM502.3 288.3l-7.8-.7 4.1-6.7zM494.5 287.6l7.8 .7-3.9 6.5zM487.3 285.5l7.2 2.1-4.4 6.4zM483 290.7l4.3-5.2 2.8 8.5zM494.5 287.6l-7.2-2.1 3.9-6.1zM487.3 285.5l-3.9-7.3 7.8 1.2zM476.2 262.9l3.5 7.7-7.5-1.3zM479.7 270.6l-3.5-7.7 7.6 1.2zM487.4 271.8l-7.7-1.2 4.1-6.5zM483.4 278.2l-3.7-7.6 7.7 1.2zM468.4 275.9l-3.6-7.6 7.4 1zM479.1 284.1l3.9 6.6-7.1 .8zM472 283.8l7.1 .3-3.2 7.4zM479.1 284.1l8.2 1.4-4.3 5.2zM487.3 285.5l-8.2-1.4 4.3-5.9zM464.8 268.3l3.8-6.6 3.6 7.6zM461.2 260.6l7.4 1.1-3.8 6.6zM453.7 273.3l-3.7-7.3 7.4 1zM442.8 264.8l7.2 1.2-3.7 6.3zM446.5 258.5l3.5 7.5-7.2-1.2zM461.7 232.2l-3.8 6.7-3.6-7.7zM454.3 231.2l3.6 7.7-7.4-1.1zM449.9 386.4l6-2.2-.1 7.3zM449.9 386.4l-.1 7.3-5.8-5.1zM449.8 393.7l.1-7.3 5.9 5.1zM579.2 506.1l.5-7.2 6.7 5.6zM579.7 498.9l-.5 7.2-6.6-5.6zM572.6 500.5l6.6 5.6-7.1 1.5zM578.6 513.2l.6-7.1 6.5 5.6zM569.4 450.7l7.2-1.9-.5 7.6zM576.6 448.8l7.4-2-.7 7.6zM562.3 452.7l7.1-2-.5 7.6zM547.3 471.1l6.4 5.5-6.8 1.8zM553.7 476.6l-6.4-5.5 6.9-1.8zM502.4 462l6.4-1.8-.3 7.1zM491.8 415.4l-6.1-5.3 6.4-2.1zM322.2 368.5l-.4-6.7 5.1 4.6zM322.2 368.5l4.7-2.1 .3 6.7zM322.5 375.2l-.3-6.7 5 4.6zM324.8 325.3l.4 6.9-5.1-4.5zM295.7 318.9l4.9 4.4-4.5 2.4zM303.1 363.6l-4.5 2.1-.4-6.5zM286.1 233.5l2.3-5.9 3.4 6.8zM288.4 227.6l2.5-5.9 3.3 6.8zM319 306.8l-.4-7 5.2 4.5zM317.6 278.6l0-7.1 4.9 4.8zM309.1 304.7l.4 7-5.1-4.5zM309.1 304.7l-.4-7 5.1 4.6zM309.5 311.7l-.4-7 5.1 4.6zM281.8 319.2l-.5-6.7 4.9 4.3zM276.9 314.8l-4.4 2.3-.5-6.6zM272.5 317.1l4.4-2.3 .5 6.7zM276.9 314.8l4.4-2.3 .5 6.7zM281.3 312.5l-4.4 2.3-.5-6.7zM279.9 292.2l.5 6.7-5-4.2zM370.6 498.9l4.8-1.3 .1 6zM370.7 504.8l-.1-5.9 4.9 4.7zM370.6 498.9l-.2-6 5 4.7zM370.6 498.9l-4.8 1.4-.2-6zM351.9 504l.2 5.6-4.8-4.1zM374.8 473.2l4.9-1.6 .1 6.3zM369.9 474.6l4.9-1.4 .1 6.1zM374.8 473.2l-4.9 1.4-.2-6.1zM374.8 473.2l-5.1-4.7 4.9-1.6zM405.4 495.5l5.2-1.4 0 6.2zM369.5 462.2l4.9-1.6 .2 6.3zM374.3 454.3l-5.1-4.7 4.9-1.7zM448.2 503.2l-5.5-5 5.6-1.4zM442.7 498.2l-5.4-4.9 5.5-1.5zM437.2 499.7l5.5-1.5 0 6.4zM442.7 498.2l5.5 5-5.5 1.4zM329.3 505l-.3-5.9 4.6 3.9zM333.9 508.3l-4.6-3.3 4.3-2zM329.3 505l-4.4 0-.3-5.2zM329 499.1l.3 5.9-4.7-5.2zM329.3 505l.3 6-4.7-6zM329.3 505l4.6 3.3-4.3 2.7zM333.9 508.3l4.5-.1 .2 6.1zM343 511.5l-4.6-3.3 4.4-1.9zM338.4 508.2l-.3-5.9 4.7 4zM338.4 508.2l-4.8-5.2 4.5-.7zM338.4 508.2l-4.5 .1-.3-5.3zM288.2 409.8l.5 6.2-4.7-4.4zM288.2 409.8l-4.6-4.4 4.2-1.8zM292.5 408l-4.3 1.8-.4-6.2zM326.2 445.5l-4.5 1.6-.3-6.1zM335.3 442.3l-4.6 1.6-.3-6.2zM340.1 446.8l-4.8-4.5 4.6-1.7zM330.7 443.9l4.6-1.6 .2 6.2zM335.3 442.3l4.8 4.5-4.6 1.7zM335.3 442.3l-4.9-4.6 4.6-1.7zM339.9 440.6l-4.6 1.7-.3-6.3zM354.7 454.4l5 4.7-4.8 1.6zM359.9 465.3l-.2-6.2 5 4.7zM359.7 459.1l.2 6.2-5-4.6zM359.7 459.1l4.8-1.6 .2 6.3zM364.5 457.5l-4.8 1.6-.2-6.3zM359.7 459.1l-5-4.7 4.8-1.6zM343.5 413.3l-5-4.6 4.7-1.9zM338.5 408.7l-5-4.6 4.7-2zM333.5 404.1l5 4.6-4.7 1.8zM338.5 408.7l.2 6.4-4.9-4.6zM338.5 408.7l5 4.6-4.8 1.8zM473.6 211.7l7.8 1-4.1 6.9zM394.2 427.7l-5.3-4.8 5.2-1.9zM388.8 416.2l.1 6.7-5.3-4.8zM388.9 422.9l-.1-6.7 5.3 4.8zM388.9 422.9l-5.2 1.9-.1-6.7zM383.7 424.8l5.2-1.9 .1 6.7zM388.9 422.9l5.3 4.8-5.2 1.9zM340.4 339.1l-4.9 2.3-.3-6.9zM340.7 346.1l-5.2-4.7 4.9-2.3zM330.6 343.7l4.9-2.3 .3 7zM373.6 428.4l-5 1.8-.2-6.5zM373.6 428.4l5-1.8 .2 6.6zM373.8 435l-.2-6.6 5.2 4.8zM368.6 430.2l5-1.8 .2 6.6zM378.6 426.6l-5 1.8-.2-6.6zM373.6 428.4l-5.2-4.7 5-1.9zM397.5 250.7l-6.8-1.1 3.3-6.2zM394.2 256.9l-3.5-7.3 6.8 1.1zM390.7 249.6l3.5 7.3-6.7-1.2zM394 243.4l-3.3 6.2-3.4-7.2zM387.3 242.4l3.4 7.2-6.7-1zM390.7 249.6l-3.2 6.1-3.5-7.1zM411.1 266.4l-3.3-7.4 6.8 1.2zM303.2 236.1l-5.8-.8 2.5-5.9zM323.6 232.9l-6-.9 2.7-6zM314.3 225.1l3.3 6.9-5.9-.9zM370.6 310.2l-5.5-4.6 5.3-2.8zM375.9 307.6l-5.3 2.6-.2-7.4zM370.8 317.5l-.2-7.3 5.5 4.8zM365.1 305.6l5.5 4.6-5.3 2.6zM462.9 336.6l.2-7.7 6.1 5.2zM463.1 328.9l-6.1-5.1 6.2-2.7zM469.4 326.4l-6.3 2.5 .1-7.8zM457 323.8l.1-7.7 6.1 5zM457.1 316.1l6.2-2.9-.1 7.9zM415.9 523.6l-5.2-4.9 5.2-1.2zM410.7 518.7l0-6.1 5.2 4.9zM410.7 512.6l-5.2-4.8 5.1-1.3zM390.2 499.6l-5-4.7 4.9-1.4zM390.2 499.6l.1 6.1-5-4.7zM395.1 492.1l.1 6.2-5.1-4.8zM510.9 546.7l-.4 6.4-5.7-5.1zM504.3 554.3l6.2-1.2-.6 6.2zM510.5 553.1l-6.2 1.2 .5-6.3zM502.3 288.3l4.2-6.3 3.5 8zM506.5 282l4.2-6.5 3.6 7.8zM506.5 282l-3.7-7.6 7.9 1.1zM506.5 282l-4.2 6.3-3.7-7.4zM468.4 275.9l7.3 .9-3.7 7zM475.7 276.8l3.4 7.3-7.1-.3zM475.7 276.8l-7.3-.9 3.8-6.6zM479.7 270.6l-4 6.2-3.5-7.5zM475.7 276.8l4-6.2 3.7 7.6zM479.1 284.1l-3.4-7.3 7.7 1.4zM465.3 239.9l-7.4-1 3.8-6.7zM465.3 239.9l-3.6-7.7 7.6 1zM465.3 239.9l4-6.7 3.6 7.8zM450 266l3.8-6.5 3.6 7.5zM576.6 448.8l-6.6-5.6 7.2-2zM562.8 445.2l7.2-2-.6 7.5zM570 443.2l-6.6-5.6 7.2-2.1zM504 426l-6.1-5.3 6.4-2.1zM498.2 413.3l-6.1-5.3 6.4-2.2zM504.3 418.6l-6.1-5.3 6.4-2.2zM498.2 413.3l-.3 7.4-6.1-5.3zM479.3 419.5l6.2-2-.3 7.2zM485.7 410.1l-.2 7.4-6-5.3zM330 329.9l-4.8 2.3-.4-6.9zM334.9 327.5l-4.9 2.4-.3-7zM320.8 341.4l4.7-2.3 .4 6.9zM297.4 345.9l4.5-2.2 .4 6.7zM301.5 336.9l.4 6.8-5-4.5zM415.8 492.7l0 6.3-5.2-4.9zM410.6 506.5l-5.1-4.8 5.1-1.4zM405.5 501.7l0 6.1-5.1-4.8zM384.4 457.4l-5.2-4.8 5.1-1.6zM379.5 465.4l.2 6.2-5.1-4.7zM369.4 455.9l.1 6.3-5-4.7zM369.4 455.9l5 4.7-4.9 1.6zM369.4 455.9l-4.9 1.6-.2-6.3zM369.4 455.9l4.9-1.6 .1 6.3zM369.2 449.6l.2 6.3-5.1-4.7zM374.3 454.3l-4.9 1.6-.2-6.3zM519.7 368.4l6.8-2.5-.4 7.8zM325.2 332.2l5.1 4.6-4.8 2.3zM330.3 336.8l5.2 4.6-4.9 2.3zM330.3 336.8l-.3-6.9 5.2 4.6zM309 237l-5.8-.9 2.6-5.9zM303.2 236.1l3.3 6.9-5.8-1.1zM303.9 248.7l2.6-5.7 3.3 6.8zM306.5 243l2.5-6 3.3 6.7zM313 256.8l-5.9-1.6 2.7-5.4zM312.3 243.7l2.7-5.8 3.2 6.8zM315 237.9l2.6-5.9 3.3 6.8zM315 237.9l-6-.9 2.7-5.9zM405.6 514l-5.1 1.1-.1-6zM405.5 507.8l.1 6.2-5.2-4.9zM405.6 514l0 6-5.1-4.9zM410.7 518.7l-5.1-4.7 5.1-1.4zM405.6 514l-.1-6.2 5.2 4.8zM395.2 498.3l.1 6.1-5.1-4.8zM395.3 504.4l.1 6.1-5.1-4.8zM395.3 504.4l5.1-1.4 0 6.1zM405.5 501.7l-5.2-4.8 5.1-1.4zM395.2 498.3l5.1-1.4 .1 6.1zM491.5 422.7l6.4-2-.3 7.3zM491.5 422.7l-.2 7.3-6.1-5.3zM491.5 422.7l-6-5.2 6.3-2.1zM320.4 334.6l4.8-2.4 .3 6.9zM314.6 316.2l-.4-6.9 5.1 4.5zM300.6 323.3l.5 6.9-5-4.5zM301.1 330.2l-4.6 2.3-.4-6.8zM352.1 509.6l4.6-.7 .2 6zM356.7 508.9l-4.6 .7-.2-5.6zM361.3 507.3l-4.6 1.6-.2-6zM361.5 512.9l-4.8-4 4.6-1.6zM379.4 459l.1 6.4-5.1-4.8zM379.4 459l-5.1-4.7 4.9-1.7zM314.6 316.2l-4.7 2.4-.4-6.9zM309.9 318.6l4.7-2.4 .4 6.9zM309.9 318.6l-4.7 2.4-.4-6.9zM309.9 318.6l.4 6.9-5.1-4.5z"/>
<path fill="#00f69c" d="M585.9 423.6l6.8 5.6-7.5 2.2zM275.1 350.1l-.5-6.5 4.7 4.4zM279.8 354.5l-4.7-4.4 4.2-2.1zM596.9 465.8l-7.4 1.9 .6-7.6zM583.9 353.7l.6-8.2 7.1 5.8zM527.8 342.1l.4-7.9 6.6 5.3zM364.1 232.4l3.4 7.1-6.4-.9zM400.7 230.8l6.9 1-3.4 6.4zM380.6 241.4l3.2-6.2 3.5 7.2zM595.4 397.5l.7-8 7 5.7zM588.4 391.8l7.7-2.3-.7 8zM589.5 467.7l-6.8-5.7 7.4-1.9zM592.1 437.1l-7.5 2 .6-7.7zM565 414.5l-6.6-5.6 7.2-2.2zM516.3 436.7l.4-7.4 6.2 5.4zM517.1 421.9l-.4 7.4-6.2-5.4zM521.8 456.6l.4-7.2 6.2 5.4zM497 442.5l-.3 7.1-6-5.2zM284.1 352.4l-4.3 2.1-.5-6.5zM318 460.7l4.7 4.5-4.4 1.5zM528.1 248.8l-3.7-8.1 8.2 1.1zM584.5 345.5l7.7-2.4-.6 8.2zM540 368.8l-6.5-5.4 7-2.5zM540 368.8l-7 2.5 .5-7.9zM354.4 303.5l5.2-2.6 .3 7.2zM407.6 231.8l3.5 7.4-6.9-1zM411.1 239.2l-3.5-7.4 6.9 1zM418.1 240.2l-7-1 3.4-6.4zM411.1 239.2l7 1-3.5 6.3zM447.2 201.2l-3.6-7.8 7.5 .9zM358.1 244.7l-3.4-7.1 6.4 1zM373.7 227l-3.1 6.3-3.4-7.2zM370.6 233.3l-6.5-.9 3.1-6.3zM370.6 233.3l-3.1 6.2-3.4-7.1zM357.7 231.5l6.4 .9-3 6.2zM354.7 237.6l3-6.1 3.4 7.1zM377.2 234.3l3.4 7.1-6.6-.9zM370.6 233.3l6.6 1-3.2 6.2zM377.2 234.3l-6.6-1 3.1-6.3zM377.2 234.3l-3.5-7.3 6.7 1zM383.8 235.2l-6.6-.9 3.2-6.3zM377.2 234.3l6.6 .9-3.2 6.2zM400.8 244.5l-3.5-7.3 6.9 1zM397.3 237.2l3.4-6.4 3.5 7.4zM400.7 230.8l-3.4 6.4-3.5-7.3zM394 243.4l3.3-6.2 3.5 7.3zM387.1 228.9l-3.3 6.3-3.4-7.2zM464.5 531l-5.5-5 5.6-1.3zM474.7 362.3l-6.1-5.2 6.3-2.5zM518.2 399.2l-6.7 2.3 .4-7.6zM517.8 406.8l.4-7.6 6.3 5.4zM444.6 336.7l-5.9-5 6-2.6zM587.8 399.8l-.7 8-6.8-5.7zM583.9 353.7l-7.6 2.5 .6-8.2zM517.4 414.4l-6.6 2.1 .4-7.5zM545.5 499.7l-.5 7-6.2-5.5zM585.1 518.9l6.7 5.6-7.2 1.4zM465.7 479l-.1 6.7-5.7-5.1zM465.6 485.7l.1-6.7 5.7 5.2zM538.4 508.2l-6.2-5.4 6.6-1.6zM491 437.2l6 5.3-6.3 1.9zM270 283.7l5 4.2-4.5 2.5zM336.8 260.2l6.1 1.4-3.1 5.6zM328.1 287.6l-5.3-4.3 5-2.8zM282.8 226.8l-5.7-.9 2.6-5.8zM448.9 457l.1-6.8 5.6 5.1zM454.5 462.1l-5.6-5.1 5.7-1.7zM448.8 463.8l5.7-1.7-.1 6.7zM318.6 472.6l4.4-1.5 .3 5.9zM323 471.1l-4.4 1.5-.3-5.9zM300.4 460.8l4.6 4.4-4.2 1.4zM305 465.2l4.3-1.5 .4 5.9zM304.7 459.3l4.6 4.4-4.3 1.5zM281.2 373.9l-4.7-4.4 4.3-2zM277 375.9l4.2-2 .5 6.4zM355.8 485.1l-4.9-4.6 4.7-1.5zM332.2 474.2l.3 5.9-4.8-4.5zM327.1 463.7l-4.4 1.5-.3-6zM320 416l-4.8-4.5 4.5-1.8zM315.5 417.8l.4 6.3-4.8-4.5zM325.5 433.1l-4.8-4.5 4.5-1.7zM571.5 292.8l5-6.5 3.6 8.2zM604.6 298.8l-1.6-8 9.3 1.1zM531 271.6l4.5-6.8 3.6 8.1zM578.3 308.9l5.6-5.8 3.4 8.4zM563.2 291.4l8.3 1.4-4.6 6.9zM528.2 334.2l7.1-2.7-.5 8zM528.6 326.2l6.7 5.3-7.1 2.7zM372.2 374.4l.2 6.9-5.3-4.8zM299.1 372.3l4.8 4.5-4.4 2zM313 372.7l4.9 4.5-4.6 2.1zM366.3 348.6l-5.3-4.8 5.1-2.3zM361 343.8l-5.1 2.4-.3-7.1zM435.8 249.8l-3.6 6.4-3.5-7.5zM443 250.9l-7.2-1.1 3.6-6.4zM407.7 245.5l3.4-6.3 3.5 7.3zM411.1 239.2l-3.4 6.3-3.5-7.3zM432.2 256.2l-7.1-1.1 3.6-6.4zM421.6 233.8l-3.5 6.4-3.6-7.4zM458.6 195.1l-3.9 7-3.6-7.8zM351.3 230.5l-2.9 6.2-3.4-7.1zM325.8 213.8l-2.8 6.1-3.3-7zM322.4 206.8l3.4 7-6.1-.9zM322.4 206.8l6.2 .8-2.8 6.2zM343.1 273.2l3.2-4.9 2.4 7.8zM338.2 215.5l2.9-6.3 3.4 7.1zM341.1 209.2l-3.5-7.1 6.4 .8zM341.1 209.2l-2.9 6.3-3.4-7.1zM337.6 202.1l3.5 7.1-6.3-.8zM338.7 228.7l2.9-6.2 3.4 7.1zM323 219.9l6.1 .9-2.7 6.1zM329.1 220.8l-6.1-.9 2.8-6.1zM373.7 227l3.2-6.3 3.5 7.3zM370.3 219.8l3.4 7.2-6.5-.9zM370.3 219.8l6.6 .9-3.2 6.3zM390.5 236.2l-3.4-7.3 6.7 1zM397.3 237.2l-6.8-1 3.3-6.3zM390.5 236.2l6.8 1-3.3 6.2zM390.5 236.2l3.5 7.2-6.7-1zM383.8 235.2l6.7 1-3.2 6.2zM387.1 228.9l3.4 7.3-6.7-1zM357.7 231.5l3-6.3 3.4 7.2zM364.1 232.4l-3.4-7.2 6.5 .9zM357.2 218.1l3.5 7.1-6.5-.9zM347.9 223.4l2.9-6.2 3.4 7.1zM350.8 217.2l6.4 .9-3 6.2zM589.9 545.4l-.5 6.9-6.6-5.6zM591.2 531.5l-7.2 1.4 .6-7zM576.3 541.1l7.1-1.3-.6 6.9zM464.3 537.2l-5.5-5 5.7-1.2zM462 382l5.9 5.1-6.1 2.2zM467.8 394.5l6.1-2.2-.2 7.4zM467.9 387.1l6 5.2-6.1 2.2zM469.6 310.8l6.5-2.7-.2 7.8zM514.3 283.3l8.1 1.6-4.5 6zM444.6 344.2l-.1 7.5-5.9-5zM450.6 341.7l6.1-2.5-.1 7.6zM554.8 355.7l-6.7-5.5 7.2-2.6zM562.1 353.1l-7.3 2.6 .5-8.1zM589.5 467.7l-.7 7.5-6.7-5.7zM596.2 473.4l-7.4 1.8 .7-7.5zM588.8 475.2l7.4-1.8-.6 7.5zM552.3 395.6l6.6 5.5-7.1 2.3zM558.4 408.9l.5-7.8 6.7 5.6zM564.5 422.2l-6.7-5.5 7.2-2.2zM565 414.5l-7.2 2.2 .6-7.8zM561.2 467.5l-.5 7.4-6.5-5.6zM518.5 519.3l.4-6.8 6 5.4zM465.1 505.5l5.8-1.5-.2 6.6zM477 496l-.2 6.6-5.7-5.1zM476.8 502.6l.2-6.6 5.7 5.1zM527.6 469.2l-6.2-5.4 6.6-1.8zM274.5 281.2l.5 6.7-5-4.2zM279 278.5l4.5-2.5 .5 6.8zM283.5 276l-5-4.4 4.4-2.4zM293.5 259.2l-6-.4 2.5-5.8zM282.5 262.2l4.8 3.9-4.4 3.1zM284.6 251.4l2.9 7.4-5.3-2.7zM282.5 262.2l-5.3-5.1 5-1zM277.2 257.1l1.2-6.6 3.8 5.6zM292.5 247l3.2 6.4-5.7-.4zM298.7 260.2l-3-6.8 5.7 1.2zM278.4 334.8l.5 6.6-4.8-4.4zM278.4 334.8l4.8 4.4-4.3 2.2zM277.9 328.2l.5 6.6-4.8-4.4zM323.2 290.3l-5.3-4.6 4.9-2.4zM329 308.9l-.3-7.1 5.3 4.6zM328.7 301.8l5-2.5 .3 7.1zM345.3 336.8l-.2-7 5.2 4.6zM285.3 220.9l-2.5 5.9-3.1-6.7zM285.3 220.9l-3.4-6.7 5.7 .7zM454.5 462.1l5.7 5.1-5.8 1.6zM448.1 509.6l5.6-1.4-.1 6.4zM324.9 505l-4.6-3.2 4.3-2zM291.2 452l-.4-5.9 4.6 4.4zM318.3 466.7l-4.3 1.4-.4-5.9zM292.1 401.8l.4 6.2-4.7-4.4zM350.9 480.5l.3 5.9-4.9-4.5zM342.3 495l-4.8-4.5 4.5-1.4zM342.3 495l4.5-1.3 .3 5.9zM323 471.1l4.4-1.4 .3 5.9zM332.2 474.2l-4.8-4.5 4.5-1.5zM327.4 469.7l-4.4 1.4-.3-5.9zM327.4 469.7l-.3-6 4.8 4.5zM336.7 472.8l.3 5.9-4.8-4.5zM327.1 463.7l-.3-6 4.8 4.5zM331.6 462.2l4.8 4.6-4.5 1.4zM336.4 466.8l.3 6-4.8-4.6zM336.4 466.8l-4.8-4.6 4.5-1.5zM320.4 422.3l-4.9-4.5 4.5-1.8zM315.9 424.1l4.5-1.8 .3 6.3zM314.4 398.7l4.6-1.9 .3 6.5zM314.8 405.1l4.5-1.8 .4 6.4zM295.9 393.6l.5 6.3-4.8-4.4zM305.1 396.1l-.4-6.4 4.9 4.5zM310.7 413.3l4.5-1.8 .3 6.3zM310.7 413.3l4.8 4.5-4.4 1.8zM315.2 411.5l-4.5 1.8-.4-6.3zM315.9 424.1l-4.5 1.7-.3-6.2zM321 434.8l4.5-1.7 .4 6.3zM321 434.8l.4 6.2-4.8-4.5zM576.5 286.3l8.6 1.4-5 6.8zM590.8 265.5l-3.4-8.3 8.9 1.3zM605.9 283.4l-2.9 7.4-5-8.5zM612.3 291.9l-6.4-8.5 7.1 .8zM611.7 299.2l-7.1-.4 7.7-6.9zM528.1 248.8l-8.1-1.2 4.4-6.9zM535.5 264.8l8.2 1.2-4.6 6.9zM583.9 303.1l-8.7-2.3 4.9-6.3zM575.2 300.8l-4.7 6.9-3.6-8zM599.4 348.8l-.6 8.2-7.2-5.7zM602.7 315.6l-8.4 2.8 1.3-7.6zM593.8 326.8l.5-8.4 7.2 5.6zM585.1 337.3l7.1 5.8-7.7 2.4zM554.3 304.6l-8.6-1.3 4.6-6.5zM558.6 297.8l-4.3 6.8-4-7.8zM558.6 297.8l4.6-6.4 3.7 8.3zM530.3 286.4l-4.3 6.6-3.6-8.1zM528.9 318.3l7.3-2.6-.4 7.8zM514 347.3l-.4 7.9-6.3-5.4zM513.6 355.2l-6.7 2.5 .4-7.9zM484.2 249.8l-3.6-7.8 7.7 1.1zM476.5 248.7l4.1-6.7 3.6 7.8zM480.6 242l-4.1 6.7-3.6-7.7zM357 380.8l-5.1-4.7 4.9-2.2zM309.2 387.8l-4.5 1.9-.4-6.4zM304.7 389.7l4.5-1.9 .4 6.4zM299.9 385.2l4.8 4.5-4.4 2zM299.9 385.2l-4.8-4.4 4.4-2zM304.3 383.3l-4.4 1.9-.4-6.4zM303.5 370.2l.4 6.6-4.8-4.5zM303.9 376.8l4.9 4.5-4.5 2zM308.8 381.3l.4 6.5-4.9-4.5zM309.2 387.8l-.4-6.5 4.9 4.5zM313.7 385.8l-4.9-4.5 4.5-2zM324.5 414.2l.4 6.4-4.9-4.6zM383.9 431.4l.1 6.6-5.2-4.8zM355.6 339.1l-5 2.4-.3-7.1zM350.6 341.5l-5.3-4.7 5-2.4zM365.9 334.4l5.2-2.4 .2 7.1zM365.9 334.4l5.4 4.7-5.2 2.4zM365.7 327.2l-.2-7.2 5.5 4.8zM371.1 332l-5.4-4.8 5.3-2.4zM365.9 334.4l-.2-7.2 5.4 4.8zM365.5 320l.2 7.2-5.4-4.7zM443 250.9l-3.7 6.4-3.5-7.5zM439.3 257.3l-7.1-1.1 3.6-6.4zM397.5 250.7l-3.5-7.3 6.8 1.1zM411.2 252.8l-3.5-7.3 6.9 1zM411.2 252.8l6.9 1.1-3.5 6.3zM418.1 253.9l-6.9-1.1 3.4-6.3zM421.6 247.7l3.5 7.4-7-1.2zM421.6 247.7l-3.5 6.2-3.5-7.4zM418.1 240.2l3.5 7.5-7-1.2zM425.1 255.1l-3.5-7.4 7.1 1zM425.1 255.1l-3.5 6.1-3.5-7.3zM367.5 239.5l-3.1 6.2-3.3-7.1zM354.3 275.1l-.7 6.9-4.9-5.9zM353.6 282l5.4-2.5 .2 7.1zM310.3 205.2l3.3 6.9-5.9-.8zM310.3 205.2l6 .8-2.7 6.1zM313.6 212.1l2.7-6.1 3.4 6.9zM316.3 206l6.1 .8-2.7 6.1zM313.6 212.1l-2.6 6.1-3.3-6.9zM338.2 215.5l-6.3-.9 2.9-6.2zM331.9 214.6l-3.3-7 6.2 .8zM328.6 207.6l3.3 7-6.1-.8zM331.9 214.6l-2.8 6.2-3.3-7zM326.4 226.9l6.1 .8-2.8 6.1zM332.5 227.7l6.2 1-2.8 6zM363.7 218.9l6.6 .9-3.1 6.3zM360.7 225.2l3-6.3 3.5 7.2zM363.7 218.9l-3 6.3-3.5-7.1zM347.4 210l6.4 .9-3 6.3zM347.4 210l3.4 7.2-6.3-.9zM341.1 209.2l6.3 .8-2.9 6.3zM375.6 292.9l-5.3 2.5-.1-7.6zM565.6 502.1l-.6 7.1-6.4-5.6zM537.9 515.1l6.2 5.4-6.6 1.4zM531.4 516.5l6.5-1.4-.4 6.8zM537.9 515.1l.5-6.9 6.2 5.4zM576.3 541.1l.6-6.9 6.5 5.6zM569.9 535.6l7-1.4-.6 6.9zM520.7 575.2l-.5 4.9-5.9-2.2zM508.9 571l6 .3-.6 6.6zM509.4 565.3l-.5 5.7-5.7-3.9zM447.9 522.2l5.6-1.3-.1 6.3zM453.5 520.9l5.6-1.2-.1 6.3zM498.6 549l-5.6-5.1 6-1.2zM488.2 512.9l.3-6.6 5.8 5.2zM482.5 507.8l-5.7-5.2 5.9-1.5zM488.5 506.3l-6 1.5 .2-6.7zM488.2 512.9l-5.7-5.1 6-1.5zM499.8 523.3l-5.8-5.2 6.1-1.3zM494 518.1l.3-6.6 5.8 5.3zM494 518.1l-5.8-5.2 6.1-1.4zM474.5 369.8l-6-5.1 6.2-2.4zM493.7 362.6l-6.5 2.5 .3-7.7zM500.3 360.2l-6.6 2.4 .3-7.7zM480.4 382.6l6.1 5.2-6.3 2.3zM486.7 380.3l-.2 7.5-6.1-5.2zM473.9 392.3l.2-7.4 6.1 5.2zM474.1 384.9l-6.2 2.2 .2-7.4zM500.6 352.4l6.3 5.3-6.6 2.5zM476.7 300.2l6.2-2.6-.3 8.1zM476.1 308.1l.6-7.9 5.9 5.5zM462.8 344.3l.1-7.7 6.1 5.2zM487.8 257.6l-7.6-1.2 4-6.6zM480.2 256.4l7.6 1.2-4 6.5zM480.2 256.4l-3.7-7.7 7.7 1.1zM446.7 244.4l-3.7 6.5-3.6-7.5zM518.5 391.6l6.4 5.4-6.7 2.2zM524.9 397l6.4 5.4-6.8 2.2zM525.7 381.5l6.5 5.5-6.9 2.3zM518.5 391.6l.4-7.7 6.4 5.4zM518.9 383.9l-.4 7.7-6.3-5.4zM526.1 373.7l6.5 5.5-6.9 2.3zM450.6 341.7l-.1 7.6-5.9-5.1zM467.8 394.5l-6.1 2.2 .1-7.4zM574 388.5l-7.3 2.4 .5-8zM574 388.5l-.5 8-6.8-5.6zM574.6 380.5l-.6 8-6.8-5.6zM568.9 358.7l.5-8.2 6.9 5.7zM562.1 353.1l6.8 5.6-7.3 2.6zM575.8 364.4l.5-8.2 7 5.7zM568.9 358.7l6.9 5.7-7.4 2.5zM582.7 370l-6.9-5.6 7.5-2.5zM585.1 518.9l.6-7.2 6.7 5.7zM534.3 467.4l-6.7 1.8 .4-7.2zM527.6 469.2l6.7-1.8-.5 7.2zM577.4 527.3l.6-7 6.6 5.6zM577.4 527.3l-.5 6.9-6.5-5.5zM576.9 534.2l.5-6.9 6.6 5.6zM578 520.3l.6-7.1 6.5 5.7zM465.4 492.4l5.8-1.5-.1 6.6zM471.2 490.9l5.8 5.1-5.9 1.5zM465.6 485.7l5.6 5.2-5.8 1.5zM513.9 486.7l6.4-1.7-.4 7zM519.6 498.9l-6.1-5.3 6.4-1.6zM478.8 433.9l-5.9-5.2 6.1-2zM312.6 366l.4 6.7-5-4.6zM326.9 366.4l-5.1-4.6 4.7-2.2zM279.4 285.4l-4.9-4.2 4.5-2.7zM291.7 264.3l1.8-5.1 3.5 7.8zM291.7 264.3l.9 6.5-5.3-4.7zM287.5 258.8l4.2 5.5-4.4 1.8zM288 273.2l4.6-2.4 .6 6.8zM287.3 266.1l.7 7.1-5.1-4zM280.6 232.6l-5.3-.8 1.8-5.9zM281.4 245.1l3.2 6.3-6.2-.9zM275.3 231.8l2.7 6.5-5.9-1.1zM278 238.3l2.6-5.7 3 6.8zM278 238.3l3.4 6.8-5.3-1.2zM269.2 218.7l2.1 6.3-5.8-.3zM271.3 225l3-5.7 2.8 6.6zM270.1 230.9l1.2-5.9 4 6.8zM287 245.9l2.3-5.8 3.2 6.9zM284.6 251.4l2.4-5.5 3 7.1zM287 245.9l-5.6-.8 2.2-5.7zM307.9 283.5l.4 7.1-5.1-4.4zM282.3 325.9l-4.4 2.3-.5-6.7zM282.7 332.6l-4.3 2.2-.5-6.6zM318.3 292.7l4.9-2.4 .3 7zM318.3 292.7l-.4-7 5.3 4.6zM281.8 319.2l4.4-2.4 .5 6.8zM282.3 325.9l-.5-6.7 4.9 4.4zM334.6 320.5l4.9-2.5 .3 7.1zM354.7 310.6l-.3-7.1 5.5 4.6zM360.1 315.3l-5.4-4.7 5.2-2.5zM299.8 309.6l5 4.5-4.6 2.4zM295.2 312.1l4.6-2.5 .4 6.9zM334.9 327.5l-.3-7 5.2 4.6zM276.1 213.4l5.8 .8-2.2 5.9zM361.3 507.3l-4.8-4.4 4.6-1.4zM365.8 500.3l.2 5.9-4.9-4.7zM351.9 504l-4.8-4.4 4.5-1.4zM375.4 497.6l-5-4.7 4.8-1.3zM375.2 491.6l-5-4.7 4.9-1.4zM442.4 523.5l-5.3-4.9 5.4-1.4zM448 515.9l-5.4-4.9 5.5-1.4zM437.1 512.3l5.5-1.3-.1 6.2zM455 434.5l-.1 7-5.7-5.1zM459.4 506.9l-.2 6.4-5.5-5.1zM287.5 459.4l.5 5.7-4.5-4.2zM314 468.1l.3 5.9-4.6-4.4zM289.1 422.1l-.4-6.1 4.6 4.4zM337.8 496.4l4.5-1.4 .2 5.7zM337 478.7l.2 6-4.7-4.6zM337.2 484.7l.3 5.8-4.7-4.5zM360.3 477.6l.2 6-4.9-4.6zM346.1 475.9l4.6-1.5 .2 6.1zM346.1 475.9l.2 6-4.8-4.6zM331.6 462.2l-.3-6 4.8 4.5zM326.8 457.7l4.5-1.5 .3 6zM331.3 456.2l-4.5 1.5-.3-6.1zM331.3 456.2l4.5-1.6 .3 6.1zM331 450.1l.3 6.1-4.8-4.6zM318.6 390.3l4.6-1.9 .3 6.5zM310 400.6l4.8 4.5-4.5 1.9zM305.1 396.1l4.9 4.5-4.5 1.9zM314.4 398.7l-4.4 1.9-.4-6.4zM322.5 375.2l.4 6.6-5-4.6zM318.3 383.8l-4.6 2-.4-6.5zM318.3 383.8l4.6-2 .3 6.6zM317.9 377.2l.4 6.6-5-4.5zM322.9 381.8l-4.6 2-.4-6.6zM300.7 398l-4.3 1.9-.5-6.3zM300.7 398l4.8 4.5-4.4 1.9zM305.1 396.1l-4.4 1.9-.4-6.3zM321 434.8l-4.8-4.5 4.5-1.7zM316.2 430.3l-4.8-4.5 4.5-1.7zM552 267.3l-8.3-1.3 4.6-6.8zM582.2 264.2l8.6 1.3-4.5 7.1zM571 239.3l3.7 8.3-8.6-1.2zM595.1 274l-5.4 6.9-3.4-8.3zM595.1 274l9.1 1.4-6.2 6.9zM597 297.9l-8.6-2.1 5.6-6.3zM603 290.8l-6 7.1-3-8.4zM604.6 298.8l-7.6-.9 6-7.1zM518.7 277l4.3-6.6 3.7 7.9zM526.7 278.3l-3.7-7.9 8 1.2zM540.8 243l8.4 1.1-4.6 7zM570.5 307.7l-8.7-1.7 5.1-6.3zM594.3 318.4l-7.3 2.3 .3-9.2zM577.4 339.8l7.1 5.7-7.6 2.5zM585.1 337.3l-7.7 2.5 .7-8.1zM585.1 337.3l.8-8.3 7 5.9zM578.1 331.7l-7.6 2.1 .8-8.5zM562.6 345l6.8 5.5-7.3 2.6zM555.9 339.3l6.7 5.7-7.3 2.6zM546.6 288.6l8.2 1.4-4.5 6.8zM545.7 303.3l-3.5-8.3 8.1 1.8zM542.2 295l4.4-6.4 3.7 8.2zM534.6 279.6l3.7 7.9-8-1.1zM508.3 238.5l8 1.1-4.4 6.9zM458.6 195.1l7.7 .8-4 7.1zM367.3 383.4l-5.3-4.8 5.1-2.1zM303.5 370.2l4.9 4.5-4.5 2.1zM308.8 381.3l-.4-6.6 4.9 4.6zM308.4 374.7l.4 6.6-4.9-4.5zM308.4 374.7l4.6-2 .3 6.6zM313 372.7l-4.6 2-.4-6.6zM308.4 374.7l-4.9-4.5 4.5-2.1zM317.5 370.6l.4 6.6-4.9-4.5zM317.5 370.6l5 4.6-4.6 2zM312.6 366l4.9 4.6-4.5 2.1zM421.6 233.8l3.5 7.5-7-1.1zM425.1 241.3l-3.5 6.4-3.5-7.5zM425.1 241.3l-3.5-7.5 7.1 1zM421.6 247.7l3.5-6.4 3.6 7.4zM435.8 249.8l-3.6-7.5 7.2 1.1zM432.2 242.3l3.7-6.5 3.5 7.6zM432.2 242.3l3.6 7.5-7.1-1.1zM435.9 235.8l-3.7 6.5-3.5-7.5zM425.1 241.3l7.1 1-3.5 6.4zM432.2 242.3l-7.1-1 3.6-6.5zM323 219.9l-6-.8 2.7-6.2zM320.3 226l-3.3-6.9 6 .8zM317 219.1l-3.4-7 6.1 .8zM290.9 221.7l-3.3-6.8 5.8 .9zM296.7 222.6l5.8 .8-2.6 6zM364.7 284.1l.1 7.1-5.6-4.6zM359 279.5l5.7 4.6-5.5 2.5zM364.8 291.2l-.1-7.1 5.5 3.7zM370.3 295.4l.1 7.4-5.4-4.5zM311 218.2l-5.9-.8 2.6-6.1zM305.1 217.4l-3.3-6.9 5.9 .8zM332.5 227.7l2.8-6.1 3.4 7.1zM335.3 221.6l2.9-6.1 3.4 7zM338.7 228.7l-3.4-7.1 6.3 .9zM331.9 214.6l3.4 7-6.2-.8zM335.3 221.6l-2.8 6.1-3.4-6.9zM333.5 253.6l2.9-5.9 3.3 6.8zM342.1 235.7l-3.4-7 6.3 .9zM376.9 220.7l6.7 .9-3.2 6.4zM558.1 510.7l-6.3-5.5 6.8-1.6zM525.3 511.1l6.1 5.4-6.5 1.4zM442.3 529.6l5.5-1.1-.1 6.2zM493.2 377.9l-6.2-5.2 6.4-2.4zM480.8 367.5l-6.3 2.3 .2-7.5zM480.8 367.5l.3-7.7 6.1 5.3zM474.5 369.8l6.3-2.3-.2 7.5zM469.5 318.6l-.1 7.8-6.2-5.3zM469.4 326.4l.1-7.8 6.2 5.1zM510 290l4.3-6.7 3.6 7.6zM510.7 275.5l4.3-6.4 3.7 7.9zM511.3 261.2l3.7 7.9-7.9-1.3zM446.5 258.5l-7.2-1.2 3.7-6.4zM439.3 257.3l7.2 1.2-3.7 6.3zM480.2 256.4l-7.6-1.1 3.9-6.6zM472.6 255.3l7.6 1.1-4 6.5zM461.4 246.5l3.6 7.6-7.4-1zM465 254.1l-3.8 6.5-3.6-7.5zM454 245.5l-7.3-1.1 3.8-6.6zM454 245.5l7.4 1-3.8 6.6zM455.9 384.2l6.1-2.2-.2 7.3zM558.9 401.1l7.2-2.3-.5 7.9zM565.6 502.1l7-1.6-.5 7.1zM534.3 467.4l6.2 5.5-6.7 1.7zM561.7 460.1l-7 1.9 .5-7.4zM554.7 462l7-1.9-.5 7.4zM506.3 515.4l-.3 6.6-5.9-5.2zM520.7 478l-6.1-5.3 6.4-1.8zM317.2 363.9l-4.6 2.1-.4-6.6zM317.2 363.9l.3 6.7-4.9-4.6zM321.5 355l4.7-2.2 .3 6.8zM298.6 365.7l4.9 4.5-4.4 2.1zM302.7 357l-4.5 2.2-.4-6.7zM302.3 350.4l.4 6.6-4.9-4.5zM312.2 359.4l-5-4.5 4.6-2.2zM307.2 354.9l-4.5 2.1-.4-6.6zM293.6 284.5l-5.1-4.3 4.7-2.6zM288 273.2l.5 7-5-4.2zM288.5 280.2l.5 6.9-5-4.3zM286.1 233.5l-5.5-.9 2.2-5.8zM286.1 233.5l3.2 6.6-5.7-.7zM298.6 288.7l-.4-7.1 5 4.6zM307.2 354.9l-.4-6.7 5 4.5zM306.8 348.2l.4 6.7-4.9-4.5zM354.9 317.8l5.2-2.5 .2 7.2zM345.1 329.8l5-2.4 .2 7zM291.1 321.2l-.4-6.7 5 4.4zM285.8 310.1l4.9 4.4-4.5 2.3zM290.7 314.5l.4 6.7-4.9-4.4zM375.1 485.5l-5-4.7 4.8-1.5zM283 455.1l4.5 4.3-4 1.5zM296.6 468l-4.5-4.3 4.1-1.5zM296.8 406.2l-4.3 1.8-.4-6.2zM296.8 406.2l-.4-6.3 4.7 4.5zM307.1 427.5l-.4-6.2 4.7 4.5zM306.7 421.3l-.4-6.2 4.8 4.5zM326.2 445.5l4.5-1.6 .3 6.2zM326.2 445.5l-4.8-4.5 4.5-1.6zM350.7 474.4l4.7-1.4 .2 6zM370.1 480.8l-5-4.7 4.8-1.5zM360.3 477.6l4.8-1.5 .2 6.1zM309.2 387.8l4.9 4.5-4.5 1.9zM318.6 390.3l-4.5 2-.4-6.5zM314.4 398.7l-.3-6.4 4.9 4.5zM311.8 432l4.4-1.7 .4 6.2zM311.8 432l-4.4 1.7-.3-6.2zM316.2 430.3l-4.4 1.7-.4-6.2zM561.4 253.5l3.7 8.1-8.4-1.2zM561.4 253.5l-3.8-8.3 8.5 1.2zM557.6 245.2l3.8 8.3-8.5-1.2zM552 267.3l8.4 1.2-4.7 6.8zM560.4 268.5l4.7-6.9 3.8 8.3zM547.4 274.1l4.6-6.8 3.7 8zM572.7 278l8.4 1.4-4.6 6.9zM592.3 303.9l10 2.7-6.7 4.2zM592.3 303.9l3.3 6.9-8.3 .7zM592.3 303.9l-8.4-.8 4.5-7.3zM597 297.9l-4.7 6-3.9-8.1zM507.7 253.3l-3.7-7.9 7.9 1.1zM507.7 253.3l-7.9-1.2 4.2-6.7zM515.6 254.4l-7.9-1.1 4.2-6.8zM511.3 261.2l4.3-6.8 3.7 8zM572.6 316.7l-7.3-3.5 5.2-5.5zM587 320.7l-8.1 2.9 1.6-7.6zM578.9 323.6l7 5.4-7.8 2.7zM563.7 328.4l6.8 5.4-7.4 2.9zM557 322.4l6.7 6-7.3 2.5zM564.5 320.4l-.8 8-6.7-6zM570 342.2l.5-8.4 6.9 6zM570 342.2l-7.4 2.8 .5-8.3zM569.4 350.5l.6-8.3 6.9 5.8zM550.1 310.4l-7.5 .7 3.1-7.8zM554.8 290l4.7-6.6 3.7 8zM564.1 276.6l-4.6 6.8-3.8-8.1zM559.5 283.4l-8.4-1.4 4.6-6.7zM542.8 280.8l-8.2-1.2 4.5-6.7zM546.6 288.6l-3.8-7.8 8.3 1.2zM491.9 250.9l7.9 1.2-4.2 6.6zM487.8 257.6l4.1-6.7 3.7 7.8zM491.9 250.9l-7.7-1.1 4.1-6.7zM491.9 250.9l-4.1 6.7-3.6-7.8zM443.1 236.8l3.6 7.6-7.3-1zM446.7 244.4l-3.6-7.6 7.4 1zM435.9 235.8l7.2 1-3.7 6.6zM327 239.7l3.3 6.9-6.1-.9zM330.3 246.6l-3.3-6.9 6.1 1zM336.4 247.7l-6.1-1.1 2.8-5.9zM307.1 255.2l-3.2-6.5 5.9 1.1zM318.2 244.7l2.7-5.9 3.3 6.9zM317 219.1l-2.7 6-3.3-6.9zM314.3 225.1l2.7-6 3.3 6.9zM301.8 210.5l-2.6 6.1-3.3-6.9zM305.1 217.4l-5.9-.8 2.6-6.1zM295.9 209.7l3.3 6.9-5.8-.8zM299.2 216.6l-2.5 6-3.3-6.8zM370.4 302.8l-5.3 2.8-.1-7.3zM359.6 300.9l5.5 4.7-5.2 2.5zM308.4 224.2l-3.3-6.8 5.9 .8zM308.4 224.2l5.9 .9-2.6 6zM301.8 210.5l2.5-6.1 3.4 6.9zM304.3 204.4l6 .8-2.6 6.1zM331.4 201.3l6.2 .8-2.8 6.3zM328.6 207.6l2.8-6.3 3.4 7.1zM571 521.7l.5-7 6.5 5.6zM564 523.1l7-1.4-.6 7zM571 521.7l6.4 5.6-7 1.4zM464.8 518.3l5.7-1.3-.1 6.4zM481.8 527.2l-.2 6.4-5.6-5.1zM442.3 529.6l-5.3-4.8 5.4-1.3zM480.4 382.6l-6.1-5.2 6.3-2.4zM474.3 377.4l-6-5.2 6.2-2.4zM474.3 377.4l-.2 7.5-6-5.2zM502.3 288.3l7.7 1.7-4.5 6.1zM472.6 255.3l-4 6.4-3.6-7.6zM468.6 261.7l-7.4-1.1 3.8-6.5zM468.6 261.7l7.6 1.2-4 6.4zM468.6 261.7l4-6.4 3.6 7.6zM476.5 248.7l-7.6-1.1 4-6.6zM472.6 255.3l-3.7-7.7 7.6 1.1zM468.9 247.6l3.7 7.7-7.6-1.2zM461.4 246.5l7.5 1.1-3.9 6.5zM454 245.5l-3.8 6.5-3.5-7.6zM446.7 244.4l3.5 7.6-7.2-1.1zM450.2 252l-3.7 6.5-3.5-7.6zM450.2 252l3.8-6.5 3.6 7.6zM454 245.5l3.9-6.6 3.5 7.6zM457.9 238.9l-3.9 6.6-3.5-7.7zM559.4 393.3l6.7 5.5-7.2 2.3zM559.4 393.3l.6-8 6.7 5.6zM567.8 374.9l.6-8 6.8 5.6zM567.8 374.9l6.8 5.6-7.4 2.4zM585.7 511.7l-6.5-5.6 7.2-1.6zM562.3 452.7l-.6 7.4-6.5-5.5zM540.5 472.9l6.8-1.8-.4 7.3zM547.3 471.1l.5-7.3 6.4 5.5zM514.6 472.7l-6.4 1.7 .3-7.1zM513.9 486.7l.3-7 6.1 5.3zM514.2 479.7l6.5-1.7-.4 7zM514.2 479.7l.4-7 6.1 5.3zM502.4 462l-6.2 1.8 .2-7.1zM502.4 462l-6-5.3 6.3-1.8zM502.4 462l6.1 5.3-6.4 1.8zM322.2 368.5l-5-4.6 4.6-2.1zM317.2 363.9l5 4.6-4.7 2.1zM317.5 370.6l4.7-2.1 .3 6.7zM324.5 318.3l-4.8 2.5-.4-7zM324.8 325.3l-5.1-4.5 4.8-2.5zM319.7 320.8l5.1 4.5-4.7 2.4zM305.2 321l-4.6 2.3-.4-6.8zM316.8 357.2l4.7-2.2 .3 6.8zM316.8 357.2l-4.6 2.2-.4-6.7zM316.8 357.2l.4 6.7-5-4.5zM317.2 363.9l-.4-6.7 5 4.6zM302.7 357l.4 6.6-4.9-4.4zM303.5 370.2l-.4-6.6 4.9 4.5zM298.6 365.7l4.5-2.1 .4 6.6zM312.6 366l-5-4.5 4.6-2.1zM307.6 361.5l-.4-6.6 5 4.5zM307.2 354.9l.4 6.6-4.9-4.5zM307.6 361.5l-4.5 2.1-.4-6.6zM307.6 361.5l5 4.5-4.6 2.1zM303.1 363.6l4.5-2.1 .4 6.6zM297.4 345.9l4.9 4.5-4.5 2.1zM285.3 303.3l.5 6.8-5-4.4zM290.9 221.7l-2.5 5.9-3.1-6.7zM285.3 220.9l3.1 6.7-5.6-.8zM313.4 295.3l-4.7 2.4-.4-7.1zM301.5 336.9l4.5-2.3 .4 6.8zM306.8 348.2l4.6-2.3 .4 6.8zM311.4 345.9l-4.6 2.3-.4-6.8zM317.6 271.5l-5-3.6 3.9-4.2zM317.6 271.5l0 7.1-5.2-4.2zM285.8 310.1l-4.5 2.4-.5-6.8zM279.9 292.2l-4.5 2.5-.4-6.8zM279.4 285.4l.5 6.8-4.9-4.3zM285.3 303.3l-4.9-4.4 4.5-2.4zM280.4 298.9l-.5-6.7 5 4.3zM360.5 329.7l-5.3-4.8 5.1-2.4zM290.7 314.5l-.4-6.8 4.9 4.4zM284.4 289.7l-5-4.3 4.6-2.6zM370.6 498.9l.1 5.9-4.9-4.5zM287.1 453.6l4.6 4.3-4.2 1.5zM288.2 409.8l4.7 4.4-4.2 1.8zM321.7 447.1l-4.8-4.5 4.5-1.6zM321.7 447.1l4.5-1.6 .3 6.1zM321.7 447.1l-4.4 1.6-.4-6.1zM316.9 442.6l-4.7-4.5 4.4-1.6zM312.2 438.1l-.4-6.1 4.8 4.5zM322 453.2l-.3-6.1 4.8 4.5zM322 453.2l-4.4 1.6-.3-6.1zM322 453.2l4.8 4.5-4.4 1.5zM491.9 250.9l4.2-6.7 3.7 7.9zM499.8 252.1l-3.7-7.9 7.9 1.2zM500.3 237.4l-4.2 6.8-3.7-7.8zM496.1 244.2l-4.2 6.7-3.6-7.8zM317.6 232l-3.3-6.9 6 .9zM456.9 331.5l6.2-2.6-.2 7.7zM510 290l-3.5-8 7.8 1.3zM465.3 239.9l3.6 7.7-7.5-1.1zM457.9 238.9l7.4 1-3.9 6.6zM468.9 247.6l-3.6-7.7 7.6 1.1zM453.8 259.5l-3.6-7.5 7.4 1.1zM461.2 260.6l-7.4-1.1 3.8-6.4zM453.8 259.5l7.4 1.1-3.8 6.4zM453.8 259.5l-3.8 6.5-3.5-7.5zM450.2 252l3.6 7.5-7.3-1zM315.3 330l.4 6.9-5-4.6zM315 323.1l4.7-2.3 .4 6.9zM315.3 330l-.3-6.9 5.1 4.6zM301.9 343.7l4.9 4.5-4.5 2.2zM301.9 343.7l-4.5 2.2-.5-6.7zM306.8 348.2l-4.9-4.5 4.5-2.3zM301.9 343.7l-.4-6.8 4.9 4.5zM315.7 336.9l-4.7 2.3-.3-6.9zM311 339.2l-5-4.6 4.7-2.3zM306 334.6l5 4.6-4.6 2.2zM311 339.2l.4 6.7-5-4.5zM306 334.6l-.4-6.8 5.1 4.5zM305.2 321l.4 6.8-5-4.5zM312.5 444.2l-.3-6.1 4.7 4.5zM312.9 450.3l-.4-6.1 4.8 4.5zM313 256.8l3.5 6.9-6.4-1.7zM312.3 243.7l3.2 6.8-5.7-.7zM315.3 330l5.1 4.6-4.7 2.3zM320.8 341.4l-.4-6.8 5.1 4.5zM320.4 334.6l.4 6.8-5.1-4.5zM325.2 332.2l-4.8 2.4-.3-6.9zM320.4 334.6l-5.1-4.6 4.8-2.3zM315 323.1l-.4-6.9 5.1 4.6zM310.3 325.5l4.7-2.4 .3 6.9zM310.3 325.5l-4.7 2.3-.4-6.8zM310.3 325.5l5 4.5-4.6 2.3zM305.6 327.8l4.7-2.3 .4 6.8zM321.5 355l-.4-6.7 5.1 4.5zM326.2 352.8l-5.1-4.5 4.8-2.3zM321.1 348.3l-.3-6.9 5.1 4.6zM301.1 330.2l4.5-2.4 .4 6.8zM301.1 330.2l.4 6.7-5-4.4zM301.1 330.2l4.9 4.4-4.5 2.3zM356.7 508.9l-4.8-4.9 4.6-1.1zM312.2 438.1l-4.4 1.7-.4-6.1zM310.3 325.5l-.4-6.9 5.1 4.5zM316.4 350.5l4.7-2.2 .4 6.7zM311.4 345.9l5 4.6-4.6 2.2zM316.4 350.5l.4 6.7-5-4.5zM316.8 357.2l-.4-6.7 5.1 4.5zM321.1 348.3l-5-4.6 4.7-2.3zM320.8 341.4l-4.7 2.3-.4-6.8zM316.1 343.7l-5.1-4.5 4.7-2.3zM311 339.2l5.1 4.5-4.7 2.2zM316.1 343.7l.3 6.8-5-4.6zM316.4 350.5l-.3-6.8 5 4.6z"/>
<path fill="#00f85e" d="M595.4 397.5l7.7-2.3-.7 8zM583.3 454.4l7.4-1.9-.6 7.6zM551.8 403.4l6.6 5.5-7.1 2.2zM585.9 423.6l.6-7.9 6.9 5.7zM490.2 458.5l.3-7 5.9 5.2zM276 363.1l-.5-6.5 4.8 4.4zM279.8 354.5l-4.3 2.1-.4-6.5zM584.5 345.5l-.6 8.2-7-5.7zM521.2 336.8l7-2.6-.4 7.9zM339.8 267.2l3.3 6-5.5 .9zM353.9 289.1l5.5 4.7-5.2 2.5zM359.4 293.8l.2 7.1-5.4-4.6zM341.6 222.5l6.3 .9-2.9 6.2zM347.9 223.4l-6.3-.9 2.9-6.2zM596.1 389.5l7.7-2.4-.7 8.1zM584 446.8l7.4-2-.7 7.7zM586.5 415.7l.6-7.9 6.9 5.7zM511.5 401.5l6.3 5.3-6.6 2.2zM557.3 424.4l6.6 5.5-7.1 2.1zM536.9 423.1l-6.8 2.1 .4-7.6zM591.8 524.5l-.6 7-6.6-5.6zM471.4 484.2l-5.7-5.2 5.9-1.6zM529.6 432.7l-.4 7.4-6.3-5.4zM521.8 456.6l6.6-1.8-.4 7.2zM496.7 449.6l-6.2 1.9 .2-7.1zM490.5 451.5l6.2-1.9-.3 7.1zM484.5 446.2l6 5.3-6.2 1.8zM490.5 451.5l-6-5.3 6.2-1.8zM278.9 341.4l-4.3 2.2-.5-6.6zM274.6 343.6l4.3-2.2 .4 6.6zM285.8 435.8l4.2-1.6 .4 6zM290 434.2l4.6 4.4-4.2 1.6zM294.6 438.6l.4 6-4.6-4.4zM276.5 369.5l-.5-6.4 4.8 4.4zM280.8 425.5l4.1-1.7 .5 6zM318 460.7l.3 6-4.7-4.5zM322.7 465.2l-4.7-4.5 4.4-1.5zM322.7 465.2l.3 5.9-4.7-4.4zM588.4 295.8l-4.5 7.3-3.8-8.6zM600.9 332.4l8-2.2-.7 8.1zM359.6 300.9l-5.2 2.6-.2-7.2zM343.2 279.6l-.1-6.4 5.6 2.9zM343.1 273.2l.1 6.4-5.6-5.5zM353.9 289.1l5.3-2.5 .2 7.2zM589.9 545.4l-6.5-5.6 7.1-1.3zM583.4 539.8l6.5 5.6-7.1 1.3zM490.1 294l5.1 6.4-6.3 2zM495.2 300.4l.5 7.5-6.8-5.5zM495.7 307.9l-.5-7.5 7 3.3zM518.2 399.2l-.4 7.6-6.3-5.3zM537.8 407.9l-6.5-5.5 6.9-2.2zM530.9 410l-6.8 2.2 .4-7.6zM531.3 402.4l-.4 7.6-6.4-5.4zM530.9 410l.4-7.6 6.5 5.5zM544.7 405.6l-6.9 2.3 .4-7.7zM576.3 356.2l7.6-2.5-.6 8.2zM596.2 473.4l-6.7-5.7 7.4-1.9zM552.3 395.6l-6.6-5.5 7.1-2.4zM539.1 384.6l6.6 5.5-7 2.3zM545.2 397.9l7.1-2.3-.5 7.8zM545.2 397.9l-.5 7.7-6.5-5.4zM544.7 405.6l.5-7.7 6.6 5.5zM545.2 397.9l-7 2.3 .5-7.8zM545.7 390.1l-.5 7.8-6.5-5.5zM545.2 397.9l.5-7.8 6.6 5.5zM579.7 410l7.4-2.2-.6 7.9zM517.4 414.4l.4-7.6 6.3 5.4zM510.8 416.5l6.6-2.1-.3 7.5zM517.1 421.9l6.2 5.3-6.6 2.1zM529.6 432.7l-6.3-5.5 6.8-2zM523.3 427.2l6.3 5.5-6.7 2zM557.3 424.4l7.2-2.2-.6 7.7zM550.3 426.5l.5-7.7 6.5 5.6zM550.3 426.5l7-2.1-.5 7.6zM536.4 430.6l-6.8 2.1 .5-7.5zM536.9 423.1l-.5 7.5-6.3-5.4zM536.4 430.6l.5-7.5 6.4 5.5zM538.4 508.2l6.6-1.5-.4 6.9zM549.8 434.1l-.5 7.5-6.5-5.5zM543.3 428.6l6.5 5.5-7 2zM549.8 434.1l.5-7.6 6.5 5.5zM549.3 441.6l-6.9 2 .4-7.5zM542.4 443.6l-.5 7.4-6.4-5.5zM591.8 524.5l-6.7-5.6 7.3-1.5zM513.2 500.4l6 5.4-6.3 1.4zM494.3 511.5l6.1-1.4-.3 6.7zM536 438.1l-6.8 2 .4-7.4zM536 438.1l.4-7.5 6.4 5.5zM536.4 430.6l-.4 7.5-6.4-5.4zM542.4 443.6l-6.4-5.5 6.8-2zM529.2 440.1l6.8-2-.5 7.4zM536 438.1l6.4 5.5-6.9 1.9zM522.6 442l-.4 7.4-6.2-5.4zM522.6 442l-6.3-5.3 6.6-2zM529.2 440.1l-6.6 1.9 .3-7.3zM484.5 446.2l.3-7.1 5.9 5.3zM484.8 439.1l6.2-1.9-.3 7.2zM460.9 432.6l6-1.9-.2 7zM472.7 435.8l-.2 7.1-5.8-5.2zM466.9 430.7l5.8 5.1-6 1.9zM302.4 272.3l-4.7 2.1-.7-7.4zM460.8 439.6l.1-7 5.8 5.1zM460.9 432.6l-.1 7-5.8-5.1zM313.3 456.3l4.7 4.4-4.4 1.5zM299.6 449l.4 5.9-4.6-4.4zM295 444.6l4.6 4.4-4.2 1.5zM300.4 460.8l.4 5.8-4.6-4.4zM300.4 460.8l4.3-1.5 .3 5.9zM304.7 459.3l-4.3 1.5-.4-5.9zM284.9 423.8l4.6 4.4-4.1 1.6zM289.5 428.2l.5 6-4.6-4.4zM346.6 487.8l-4.8-4.5 4.5-1.4zM327.1 463.7l4.5-1.5 .3 6zM305.5 402.5l.4 6.3-4.8-4.4zM305.9 408.8l-.4-6.3 4.8 4.5zM540 258l-4.5 6.8-3.7-8zM535.5 264.8l-8.2-1.2 4.5-6.8zM528.1 248.8l8.2 1.1-4.5 6.9zM607.4 346.5l-7.3-5.9 8.1-2.3zM600.9 332.4l-.8 8.2-7.2-5.7zM521.1 298.7l-7.3-1.1 4.1-6.7zM535.3 331.5l-6.7-5.3 7.2-2.7zM540 368.8l-.4 7.9-6.6-5.4zM501.2 336.6l.3-7.9 6.4 5.3zM501.2 336.6l-.3 7.9-6.3-5.2zM502.2 312.2l0-8.5 6.7 6.3zM502.2 312.2l-6.5-4.3 6.5-4.2zM495.7 307.9l6.5 4.3-6.7 3.5zM502.2 312.2l-.3 8.4-6.4-4.9zM303.9 376.8l.4 6.5-4.8-4.5zM355.4 332.1l.2 7-5.3-4.7zM360.7 336.8l-5.3-4.7 5.1-2.4zM355.4 332.1l5.3 4.7-5.1 2.3zM361 343.8l-.3-7 5.4 4.7zM360.7 336.8l.3 7-5.4-4.7zM343.7 294l-5.3-4.7 5-2.5zM357.7 231.5l-6.4-1 2.9-6.2zM351.3 230.5l6.4 1-3 6.1zM347.9 223.4l3.4 7.1-6.3-.9zM348.4 283.8l-5.2-4.2 5.5-3.5zM346.3 268.3l-3.2 4.9-3.3-6zM359.2 286.6l5.6 4.6-5.4 2.6zM360.7 225.2l-3 6.3-3.5-7.2zM350.8 217.2l-2.9 6.2-3.4-7.1zM583.4 539.8l.6-6.9 6.5 5.6zM584 532.9l7.2-1.4-.7 7zM459 526l-.2 6.2-5.4-5zM447.9 522.2l-.1 6.3-5.4-5zM453.2 533.4l-5.4-4.9 5.6-1.3zM448 515.9l-.1 6.3-5.4-5zM467.9 387.1l-.1 7.4-6-5.2zM467.9 387.1l-5.9-5.1 6.1-2.3zM473.9 392.3l6.3-2.2-.3 7.4zM500.9 344.5l-6.6 2.6 .3-7.8zM482.9 297.6l7.2-3.6-1.2 8.4zM482.6 305.7l.3-8.1 6 4.8zM475.7 323.7l6.5-2.5-.2 7.8zM482.2 321.2l-6.5 2.5 .2-7.8zM482.2 321.2l6.3 5.1-6.5 2.7zM488.5 326.3l-6.3-5.1 6.6-2.8zM495.7 307.9l-6.6 2.6-.2-8.1zM489.1 310.5l-6.5-4.8 6.3-3.3zM489.1 310.5l6.6-2.6-.2 7.8zM488.8 318.4l.3-7.9 6.4 5.2zM468.8 349.5l-6-5.2 6.2-2.5zM498.4 294.8l-3.2 5.6-5.1-6.4zM495.2 300.4l3.2-5.6 3.8 8.9zM514.3 283.3l4.4-6.3 3.7 7.9zM518.5 391.6l-.3 7.6-6.3-5.3zM531.3 402.4l.4-7.7 6.5 5.5zM538.2 400.2l-6.5-5.5 7-2.3zM576.3 356.2l-6.9-5.7 7.5-2.5zM547.1 366.3l-7.1 2.5 .5-7.9zM547.6 358.3l-.5 8-6.6-5.4zM554.8 355.7l7.3-2.6-.5 8.2zM566.7 390.9l-6.7-5.6 7.2-2.4zM553.3 379.8l6.7 5.5-7.2 2.4zM558.9 401.1l-.5 7.8-6.6-5.5zM517.4 414.4l6.3 5.4-6.6 2.1zM530.1 425.2l-6.4-5.4 6.8-2.2zM523.7 419.8l-6.3-5.4 6.7-2.2zM523.3 427.2l.4-7.4 6.4 5.4zM523.7 419.8l-.4 7.4-6.2-5.3zM557.8 416.7l-7 2.1 .5-7.7zM550.8 418.8l7-2.1-.5 7.7zM557.8 416.7l6.7 5.5-7.2 2.2zM558.4 408.9l-.6 7.8-6.5-5.6zM528.4 454.8l6.3 5.4-6.7 1.8zM541.4 458.3l-6.3-5.4 6.8-1.9zM541.9 451l-6.8 1.9 .4-7.4zM535.1 452.9l-.4 7.3-6.3-5.4zM534.7 460.2l.4-7.3 6.3 5.4zM578 520.3l7.1-1.4-.5 7zM506.9 501.9l-5.9-5.2 6.2-1.6zM513.2 500.4l-6.3 1.5 .3-6.8zM518.9 512.5l-6.4 1.5 .4-6.8zM519.2 505.8l-.3 6.7-6-5.3zM518.9 512.5l-.4 6.8-6-5.3zM506.6 508.7l.3-6.8 6 5.3zM519.6 498.9l-.4 6.9-6-5.4zM522.6 442l6.2 5.4-6.6 2zM535.1 452.9l-6.3-5.5 6.7-1.9zM528.8 447.4l.4-7.3 6.3 5.4zM528.8 447.4l-6.2-5.4 6.6-1.9zM522.2 449.4l6.6-2-.4 7.4zM528.8 447.4l6.3 5.5-6.7 1.9zM472.7 435.8l5.9 5.2-6.1 1.9zM478.6 441l6.2-1.9-.3 7.1zM478.4 448.1l.2-7.1 5.9 5.2zM472.9 428.7l-.2 7.1-5.8-5.1zM269.5 277.1l5 4.1-4.5 2.5zM274.5 281.2l-5-4.1 4.5-2.6zM278.5 271.6l-.5-7.1 4.9 4.7zM287.5 258.8l-5 3.4-.3-6.1zM282.5 262.2l5-3.4-.2 7.3zM293.2 277.6l-.6-6.8 5.1 3.6zM278.4 250.5l6.2 .9-2.4 4.7zM287.5 258.8l-2.9-7.4 5.4 1.6zM293.5 259.2l5.2 1-1.7 6.8zM298.7 260.2l6.1 1-2.7 4.8zM295.7 253.4l-2.2 5.8-3.5-6.2zM334.2 266.2l5.6 1-2.2 6.9zM334.2 266.2l2.6-6 3 7zM322.8 283.3l-.3-7 5.3 4.2zM277.9 328.2l-4.3 2.2-.6-6.6zM273.6 330.4l4.8 4.4-4.3 2.2zM328.1 287.6l-4.9 2.7-.4-7zM317.9 285.7l-4.8 2.5-.5-7zM333.2 285.1l-5.1 2.5-.3-7.1zM334 306.4l5.2 4.5-4.9 2.6zM265 218.5l4.2 .2-3.7 6zM277.1 225.9l-2.8-6.6 5.4 .8zM460.2 467.2l-.2 6.7-5.6-5.1zM460.3 460.4l-5.8 1.7 .1-6.8zM460.3 460.4l-.1 6.8-5.7-5.1zM295 444.6l-4.2 1.5-.4-5.9zM290.8 446.1l4.2-1.5 .4 5.9zM290.8 446.1l.4 5.9-4.5-4.3zM300 454.9l-4.2 1.5-.4-5.9zM295.8 456.4l-4.6-4.4 4.2-1.5zM300.4 460.8l-4.6-4.4 4.2-1.5zM295.8 456.4l4.6 4.4-4.2 1.4zM298.8 437l.4 6-4.6-4.4zM299.2 443l-4.2 1.6-.4-6zM308.9 457.8l4.4-1.5 .3 5.9zM309.3 463.7l-.4-5.9 4.7 4.4zM308.9 457.8l.4 5.9-4.6-4.4zM318.6 472.6l-4.6-4.5 4.3-1.4zM314 468.1l-4.7-4.4 4.3-1.5zM289.5 428.2l4.7 4.4-4.2 1.6zM290 434.2l4.2-1.6 .4 6zM294.2 432.6l4.6 4.4-4.2 1.6zM356 491l-4.8-4.6 4.6-1.3zM346.6 487.8l.2 5.9-4.8-4.6zM341.8 483.3l-4.8-4.6 4.5-1.4zM327.1 463.7l.3 6-4.7-4.5zM326.8 457.7l.3 6-4.7-4.5zM314.8 405.1l.4 6.4-4.9-4.5zM304.7 389.7l.4 6.4-4.8-4.4zM310.7 413.3l-4.8-4.5 4.4-1.8zM548.3 259.2l-3.7-8.1 8.3 1.2zM544.6 251.1l3.7 8.1-8.3-1.2zM600.1 340.6l-.7 8.2-7.2-5.7zM595.6 310.8l-1.3 7.6-7-6.9zM593.8 326.8l7.7-2.8-.6 8.4zM592.2 343.1l-7.1-5.8 7.8-2.4zM522.4 284.9l3.6 8.1-8.1-2.1zM526 293l-4.9 5.7-3.2-7.8zM526.7 278.3l3.6 8.1-7.9-1.5zM530.3 286.4l8 1.1-4.4 6.9zM528.6 326.2l.3-7.9 6.9 5.2zM522.1 313l6.8 5.3-7.1 2.6zM528.9 318.3l-.3 7.9-6.8-5.3zM546.6 374.3l-7 2.4 .4-7.9zM547.1 366.3l-.5 8-6.6-5.5zM546.6 374.3l.5-8 6.7 5.5zM553.3 379.8l-6.7-5.5 7.2-2.5zM528.6 326.2l-7.1 2.6 .3-7.9zM521.5 328.8l6.7 5.4-7 2.6zM521.5 328.8l7.1-2.6-.4 8zM507.6 341.9l6.4 5.4-6.7 2.5zM507.6 341.9l6.7-2.6-.3 8zM514.3 339.3l-6.7 2.6 .3-7.9zM500.9 344.5l6.7-2.6-.3 7.9zM507.6 341.9l-6.4-5.3 6.7-2.6zM501.2 336.6l6.4 5.3-6.7 2.6zM520.8 344.7l-6.5-5.4 6.9-2.5zM514.3 339.3l6.5 5.4-6.8 2.6zM520.8 344.7l.4-7.9 6.6 5.3zM527.4 350.1l-6.6-5.4 7-2.6zM500.3 360.2l6.6-2.5-.3 7.8zM304.7 389.7l-4.8-4.5 4.4-1.9zM365.9 334.4l-5.2 2.4-.2-7.1zM360.7 336.8l5.2-2.4 .2 7.1zM365.7 327.2l.2 7.2-5.4-4.7zM365.7 327.2l-5.2 2.5-.2-7.2zM354.4 303.5l-5.4-4.9 5.2-2.3zM349 298.6l5.4 4.9-5.1 2.4zM336.8 260.2l-3.3-6.6 6.2 .9zM348.7 291.3l-.3-7.5 5.5 5.3zM348.7 291.3l5.2-2.2 .3 7.2zM349 298.6l-.3-7.3 5.5 5zM348.4 283.8l5.2-1.8 .3 7.1zM353.6 282l5.6 4.6-5.3 2.5zM353.6 282l-5.2 1.8 .3-7.7zM365 298.3l-5.4 2.6-.2-7.1zM364.8 291.2l.2 7.1-5.6-4.5zM370.3 295.4l-5.5-4.2 5.4-3.4zM370.3 295.4l-5.3 2.9-.2-7.1zM551.3 512.1l-.5 7-6.2-5.5zM532.2 502.8l-.4 6.9-6.1-5.4zM531.8 509.7l.4-6.9 6.2 5.4zM531.8 509.7l6.1 5.4-6.5 1.4zM544.1 520.5l-6.2-5.4 6.7-1.5zM537.9 515.1l-6.1-5.4 6.6-1.5zM576.9 534.2l7.1-1.3-.6 6.9zM470.4 523.4l-.2 6.4-5.6-5.1zM470.2 529.8l-.2 6.3-5.5-5.1zM453.5 520.9l-5.5-5 5.6-1.3zM475.1 347l6.2 5.2-6.4 2.4zM468.8 349.5l6.3-2.5-.2 7.6zM475.1 347l-6.3 2.5 .2-7.7zM481.1 359.8l-6.4 2.5 .2-7.7zM481.3 352.2l-.2 7.6-6.2-5.2zM481.1 359.8l.2-7.6 6.2 5.2zM487.2 365.1l-6.1-5.3 6.4-2.4zM487.2 365.1l6.5-2.5-.3 7.7zM493.7 362.6l-6.2-5.2 6.5-2.5zM500 367.9l-6.3-5.3 6.6-2.4zM486.5 387.8l-.3 7.5-6-5.2zM474.1 384.9l6.3-2.3-.2 7.5zM474.1 384.9l-.2 7.4-6-5.2zM481.3 352.2l6.5-2.5-.3 7.7zM487.5 357.4l.3-7.7 6.2 5.2zM500.6 352.4l.3-7.9 6.4 5.3zM506.9 357.7l-6.3-5.3 6.7-2.6zM500.6 352.4l-.3 7.8-6.3-5.3zM494.3 347.1l6.3 5.3-6.6 2.5zM482.2 321.2l.2-7.8 6.4 5zM489.1 310.5l-6.7 2.9 .2-7.7zM482.4 313.4l6.7-2.9-.3 7.9zM482.4 313.4l-.2 7.8-6.3-5.3zM476.1 308.1l6.3 5.3-6.5 2.5zM482.4 313.4l-6.3-5.3 6.5-2.4zM495.2 323.6l-6.4-5.2 6.7-2.7zM495.2 323.6l-6.7 2.7 .3-7.9zM488.5 326.3l-.2 7.8-6.3-5.1zM475.7 323.7l-6.2-5.1 6.4-2.7zM469 341.8l-6.1-5.2 6.3-2.5zM498.4 294.8l7.1 1.3-3.3 7.6zM524.9 397l6.8-2.3-.4 7.7zM524.9 397l-6.4-5.4 6.8-2.3zM531.7 394.7l-6.8 2.3 .4-7.7zM518.2 399.2l6.7-2.2-.4 7.6zM532.2 387l6.9-2.4-.4 7.8zM531.7 394.7l.5-7.7 6.5 5.4zM532.2 387l-.5 7.7-6.4-5.4zM518.9 383.9l6.8-2.4-.4 7.8zM532.6 379.2l7-2.5-.5 7.9zM532.2 387l.4-7.8 6.5 5.4zM532.6 379.2l-.4 7.8-6.5-5.5zM539.6 376.7l-7 2.5 .4-7.9zM532.6 379.2l-6.5-5.5 6.9-2.4zM461.7 396.7l-5.9-5.2 6-2.2zM568.9 358.7l-.5 8.2-6.8-5.6zM569.4 350.5l-.5 8.2-6.8-5.6zM568.4 366.9l-7.4 2.5 .6-8.1zM568.4 366.9l7.4-2.5-.6 8.1zM575.8 364.4l-6.9-5.7 7.4-2.5zM547.1 366.3l7.2-2.5-.5 8zM561 369.4l-6.7-5.6 7.3-2.5zM554.3 363.8l6.7 5.6-7.2 2.4zM554.3 363.8l-7.2 2.5 .5-8zM554.3 363.8l.5-8.1 6.8 5.6zM554.8 355.7l-.5 8.1-6.7-5.5zM539.6 376.7l6.6 5.5-7.1 2.4zM546.2 382.2l7.1-2.4-.5 7.9zM546.6 374.3l-.4 7.9-6.6-5.5zM546.2 382.2l.4-7.9 6.7 5.5zM545.7 390.1l.5-7.9 6.6 5.5zM546.2 382.2l-.5 7.9-6.6-5.5zM585.7 511.7l7.3-1.5-.6 7.2zM542.4 443.6l6.4 5.5-6.9 1.9zM548.8 449.1l7-2-.6 7.5zM548.8 449.1l-6.4-5.5 6.9-2zM555.8 447.1l-7 2 .5-7.5zM534.7 460.2l-.4 7.2-6.3-5.4zM548.3 456.5l-.5 7.3-6.4-5.5zM548.3 456.5l-6.9 1.8 .5-7.3zM548.3 456.5l.5-7.4 6.4 5.5zM548.8 449.1l-.5 7.4-6.4-5.5zM547.8 463.8l6.9-1.8-.5 7.3zM548.3 456.5l6.4 5.5-6.9 1.8zM554.7 462l-6.4-5.5 6.9-1.9zM584 532.9l-6.6-5.6 7.2-1.4zM578.6 513.2l7.1-1.5-.6 7.2zM496.2 463.8l-6-5.3 6.2-1.8zM496.2 463.8l5.9 5.3-6.2 1.7zM477 496l5.9-1.5-.2 6.6zM482.9 494.5l-5.9 1.5 .2-6.7zM513.9 486.7l-.4 6.9-6-5.3zM513.5 493.6l.4-6.9 6 5.3zM507.5 488.3l6 5.3-6.3 1.5zM513.5 493.6l-.3 6.8-6-5.3zM513.5 493.6l6.1 5.3-6.4 1.5zM478.8 433.9l6.2-1.9-.2 7.1zM478.6 441l.2-7.1 6 5.2zM478.8 433.9l-.2 7.1-5.9-5.2zM472.9 428.7l5.9 5.2-6.1 1.9zM274.5 281.2l4.9 4.2-4.4 2.5zM279.4 285.4l-.4-6.9 5 4.3zM292.6 270.8l-.9-6.5 5.3 2.7zM291.7 264.3l-4.2-5.5 6 .4zM288 273.2l-4.5 2.8-.6-6.8zM292.6 270.8l-4.6 2.4-.7-7.1zM282.8 226.8l-2.2 5.8-3.5-6.7zM276.1 243.9l5.3 1.2-3 5.4zM278 238.3l-1.9 5.6-4-6.7zM280.6 232.6l-2.6 5.7-2.7-6.5zM281.4 245.1l-3.4-6.8 5.6 1.1zM275.3 231.8l-4-6.8 5.8 .9zM274.3 219.3l-3 5.7-2.1-6.3zM271.3 225l-1.2 5.9-4.6-6.2zM287 245.9l5.5 1.1-2.5 6zM289.3 240.1l-2.3 5.8-3.4-6.5zM281.4 245.1l5.6 .8-2.4 5.5zM307.5 276.1l-4.7 3.1-.4-6.9zM298.6 288.7l4.6-2.5 .4 7.1zM307.9 283.5l-5.1-4.3 4.7-3.1zM303.2 286.2l5.1 4.4-4.7 2.7zM308.3 290.6l-.4-7.1 5.2 4.7zM307.5 276.1l4.9-1.7 .2 6.8zM317.9 285.7l-.3-7.1 5.2 4.7zM333.4 292.2l-.2-7.1 5.2 4.2zM328.7 301.8l-.3-7.1 5.3 4.6zM333.4 292.2l-5 2.5-.3-7.1zM328.4 294.7l5-2.5 .3 7.1zM328.4 294.7l-5.2-4.4 4.9-2.7zM339.2 310.9l.3 7.1-5.2-4.5zM339.5 318l-.3-7.1 5.3 4.7zM344.8 322.7l-5.3-4.7 5-2.4zM339.5 318l5.3 4.7-5 2.4zM349.8 320.2l-5 2.5-.3-7.1zM354.4 303.5l.3 7.1-5.4-4.7zM460.6 446.6l-5.7-5.1 5.9-1.9zM460.8 439.6l-5.9 1.9 .1-7zM460.5 453.5l-.2 6.9-5.7-5.1zM460.3 460.4l.2-6.9 5.7 5.1zM477.8 469l-6 1.6 .2-6.8zM472.2 456.9l-.2 6.9-5.8-5.2zM472.2 456.9l5.8 5.2-6 1.7zM459.2 513.3l-.1 6.4-5.5-5.1zM303.5 441.4l-4.7-4.4 4.3-1.7zM303.5 441.4l-4.3 1.6-.4-6zM289.1 422.1l.4 6.1-4.6-4.4zM365.8 500.3l-4.9-4.7 4.7-1.3zM356.3 497l.2 5.9-4.9-4.7zM356.3 497l4.6-1.4 .2 5.9zM351.2 486.4l.2 6-4.8-4.6zM346.8 493.7l4.6-1.3 .2 5.8zM356.3 497l-4.9-4.6 4.6-1.4zM337.2 484.7l4.6-1.4 .2 5.8zM305.5 402.5l4.5-1.9 .3 6.4zM314.8 405.1l-4.8-4.5 4.4-1.9zM310 400.6l-4.9-4.5 4.5-1.9zM318.3 383.8l.3 6.5-4.9-4.5zM300.7 398l4.4-1.9 .4 6.4zM296.4 399.9l4.3-1.9 .4 6.4zM300.7 398l-4.8-4.4 4.4-1.9zM523.7 255.6l4.4-6.8 3.7 8zM540.8 243l3.8 8.1-8.3-1.2zM593.8 326.8l-6.8-6.1 7.3-2.3zM587 320.7l-6.5-4.7 6.8-4.5zM577.4 339.8l7.7-2.5-.6 8.2zM585.9 329l7.9-2.2-.9 8.1zM585.9 329l-.8 8.3-7-5.6zM577.4 339.8l-6.9-6 7.6-2.1zM562.6 345l-.5 8.1-6.8-5.5zM563.1 336.7l-.5 8.3-6.7-5.7zM538.3 287.5l3.9 7.5-8.3-.6zM534.6 279.6l-4.3 6.8-3.6-8.1zM523.6 305.4l-7.3 .9 4.8-7.6zM516.3 306.3l7.3-.9-1.5 7.6zM529.7 301l-3.7-8 7.9 1.4zM529.7 301l-6.1 4.4-2.5-6.7zM523.6 305.4l5.7 5-7.2 2.6zM529.3 310.4l-.4 7.9-6.8-5.3zM529.3 310.4l.4-9.4 5.7 6.6zM529.3 310.4l6.9 5.3-7.3 2.6zM520.8 344.7l-.3 7.9-6.5-5.3zM504 245.4l4.3-6.9 3.6 8zM500.3 237.4l8 1.1-4.3 6.9zM295.5 387.2l4.4-2 .4 6.5zM334.2 266.2l-3.5-6.4 6.1 .4zM330.7 259.8l2.8-6.2 3.3 6.6zM327.6 252.5l3.1 7.3-5.7-1.8zM330.7 259.8l-3.1-7.3 5.9 1.1zM307.1 255.2l-2.3 6-3.4-6.6zM323.6 232.9l-3.3-6.9 6.1 .9zM327 239.7l-3.4-6.8 6.1 .9zM290.9 221.7l5.8 .9-2.5 5.9zM289.3 240.1l5.6 1.1-2.4 5.8zM297.4 235.3l-2.5 5.9-3.1-6.8zM297.4 235.3l-3.2-6.8 5.7 .9zM335.3 221.6l-3.4-7 6.3 .9zM551.8 505.2l-.5 6.9-6.3-5.4zM551.3 512.1l6.8-1.4-.5 6.9zM564.5 516.2l-6.4-5.5 6.9-1.5zM525.3 511.1l-6.1-5.3 6.5-1.5zM531.8 509.7l-6.5 1.4 .4-6.8zM525.3 511.1l6.5-1.4-.4 6.8zM525.3 511.1l-6.4 1.4 .3-6.7zM518.9 512.5l6.4-1.4-.4 6.8zM464.8 518.3l-5.6-5 5.7-1.4zM459.1 519.7l5.7-1.4-.2 6.4zM475.8 534.8l-5.6-5 5.8-1.3zM494.5 504.9l5.9 5.2-6.1 1.4zM487 372.7l-.3 7.6-6.1-5.3zM481.1 359.8l-.3 7.7-6.1-5.2zM487 372.7l-6.2-5.2 6.4-2.4zM475.5 331.5l.2-7.8 6.3 5.3zM475.1 347l6.4-2.5-.2 7.7zM481.5 344.5l6.3 5.2-6.5 2.5zM494.9 331.5l6.3 5.1-6.6 2.7zM495.2 323.6l-.3 7.9-6.4-5.2zM488.3 334.1l6.6-2.6-.3 7.8zM494.9 331.5l-6.6 2.6 .2-7.8zM487.8 349.7l.2-7.8 6.3 5.2zM494.3 347.1l-6.3-5.2 6.6-2.6zM488 341.9l.3-7.8 6.3 5.2zM469.4 326.4l6.1 5.1-6.3 2.6zM475.5 331.5l-6.1-5.1 6.3-2.7zM505.5 296.1l4.5-6.1 3.8 7.6zM560.5 377.4l-7.2 2.4 .5-8zM561 369.4l-.5 8-6.7-5.6zM560 385.3l.5-7.9 6.7 5.5zM560.5 377.4l-.5 7.9-6.7-5.5zM556.3 439.6l-.5 7.5-6.5-5.5zM556.3 439.6l-6.5-5.5 7-2.1zM549.8 434.1l6.5 5.5-7 2zM541 465.6l-6.7 1.8 .4-7.2zM541 465.6l-6.3-5.4 6.7-1.9zM547.8 463.8l-6.8 1.8 .4-7.3zM571.5 514.7l7.1-1.5-.6 7.1zM571.5 514.7l-6.5-5.5 7.1-1.6zM512.2 520.6l-5.9-5.2 6.2-1.4zM506.3 515.4l.3-6.7 5.9 5.3zM500.4 510.1l5.9 5.3-6.2 1.4zM288.5 280.2l-.5-7 5.2 4.4zM289 287.1l-.5-6.9 5.1 4.3zM283.5 276l5 4.2-4.5 2.6zM289.3 240.1l-3.2-6.6 5.7 .9zM280.6 232.6l5.5 .9-2.5 5.9zM302.8 279.2l-4.6 2.4-.5-7.2zM298.2 281.6l4.6-2.4 .4 7zM298.2 281.6l-4.6 2.9-.4-6.9zM298.2 281.6l.4 7.1-5-4.2zM298.6 288.7l-4.6 2.7-.4-6.9zM294 291.4l-5-4.3 4.6-2.6zM316.5 263.7l5.5-.9 .2 6.2zM322.5 276.3l4.7-3.2 .6 7.4zM327.2 273.1l-4.7 3.2-.3-7.3zM286.2 316.8l4.9 4.4-4.4 2.4zM310.1 262l-2.7 6.8-2.6-7.6zM307.4 268.8l5 5.6-4.9 1.7zM307.4 268.8l-5 3.5-.3-6.3zM316.5 263.7l-3.9 4.2-2.5-5.9zM299.4 302.7l4.6-2.5 .4 7zM299.8 309.6l-.4-6.9 5 4.5zM338.9 303.8l.3 7.1-5.2-4.5zM354.9 317.8l-.2-7.2 5.4 4.7zM350.1 327.4l-5 2.4-.3-7.1zM349.8 320.2l.3 7.2-5.3-4.7zM350.1 327.4l5.3 4.7-5.1 2.3zM294.4 298.3l.4 6.9-5-4.4zM294.8 305.2l5 4.4-4.6 2.5zM299.4 302.7l-4.6 2.5-.4-6.9zM294.8 305.2l4.6-2.5 .4 6.9zM289.4 294l5 4.3-4.6 2.5zM284.9 296.5l4.5-2.5 .4 6.8zM289.4 294l4.6-2.6 .4 6.9zM294 291.4l-4.6 2.6-.4-6.9zM365.5 488.3l4.7-1.4 .2 6zM365.5 488.3l-5-4.7 4.8-1.4zM370.1 480.8l.1 6.1-4.9-4.7zM449 450.2l5.8-1.8-.2 6.9zM454.8 448.4l5.7 5.1-5.9 1.8zM460.5 453.5l-5.7-5.1 5.8-1.8zM454.8 448.4l-5.8 1.8 .1-6.9zM454.9 441.5l-.1 6.9-5.7-5.1zM454.8 448.4l.1-6.9 5.7 5.1zM466.4 451.7l-5.9 1.8 .1-6.9zM472.2 456.9l-5.8-5.2 6-1.8zM460.5 453.5l5.9-1.8-.2 6.9zM466.4 451.7l5.8 5.2-6 1.7zM466.5 444.8l-5.9 1.8 .2-7zM466.5 444.8l-.1 6.9-5.8-5.1zM466.4 451.7l.1-6.9 5.9 5.1zM472.5 442.9l-6 1.9 .2-7.1zM466.5 444.8l-5.7-5.2 5.9-1.9zM465.9 472.3l5.9-1.7-.2 6.8zM460.2 467.2l5.7 5.1-5.9 1.6zM465.7 479l.2-6.7 5.7 5.1zM465.9 472.3l-.2 6.7-5.7-5.1zM471.8 470.6l-5.8-5.1 6-1.7zM472 463.8l-6 1.7 .2-6.9zM466 465.5l-5.7-5.1 5.9-1.8zM460.3 460.4l5.7 5.1-5.8 1.7zM466 465.5l-.1 6.8-5.7-5.1zM465.9 472.3l.1-6.8 5.8 5.1zM291.2 452l-4.1 1.6-.4-5.9zM283 455.1l4.1-1.5 .4 5.8zM308.9 457.8l-.3-6 4.7 4.5zM288.7 416l4.2-1.8 .4 6.2zM293.8 426.5l-4.7-4.4 4.2-1.7zM293.8 426.5l.4 6.1-4.7-4.4zM289.1 422.1l4.7 4.4-4.3 1.7zM296.4 399.9l.4 6.3-4.7-4.4zM301.9 416.9l4.8 4.4-4.4 1.8zM306.7 421.3l.4 6.2-4.8-4.4zM311.4 425.8l-4.7-4.5 4.4-1.7zM306.3 415.1l4.4-1.8 .4 6.3zM306.3 415.1l.4 6.2-4.8-4.4zM310.7 413.3l-4.4 1.8-.4-6.3zM360.7 489.7l.2 5.9-4.9-4.6zM360.5 483.6l.2 6.1-4.9-4.6zM360.7 489.7l4.8-1.4 .1 6zM314.1 392.3l4.5-2 .4 6.5zM314.1 392.3l-4.9-4.5 4.5-2zM314.1 392.3l.3 6.4-4.8-4.5zM307.1 427.5l-4.4 1.7-.4-6.1zM302.7 429.2l4.7 4.5-4.3 1.6zM307.4 433.7l-4.7-4.5 4.4-1.7zM311.8 432l-4.7-4.5 4.3-1.7zM592.3 303.9l4.7-6 5.3 8.7zM583.9 303.1l8.4 .8-5 7.6zM520 247.6l-4.4 6.8-3.7-7.9zM515.6 254.4l8.1 1.2-4.4 6.8zM585.9 329l-7-5.4 8.1-2.9zM578.9 323.6l-.8 8.1-6.8-6.4zM563.7 328.4l-.6 8.3-6.7-5.8zM570.5 333.8l-6.8-5.4 7.6-3.1zM570.5 333.8l-.5 8.4-6.9-5.5zM562.6 345l7.4-2.8-.6 8.3zM570 342.2l7.4-2.4-.5 8.2zM542.6 311.1l-6.4 4.6-.8-8.1zM536.2 315.7l6.4-4.6 .3 8.9zM529.7 301l8.7 .7-3 5.9zM538.4 301.7l3.8-6.7 3.5 8.3zM509.3 302.9l7 3.4-7.4 3.7zM516.3 306.3l-7-3.4 4.5-5.3zM509.3 302.9l-3.8-6.8 8.3 1.5zM502.2 303.7l7.1-.8-.4 7.1zM505.5 296.1l3.8 6.8-7.1 .8zM484.6 235.3l7.8 1.1-4.1 6.7zM321.5 251.5l-3.3-6.8 6 1zM321.5 251.5l6.1 1-2.6 5.5zM327.6 252.5l-6.1-1 2.7-5.8zM330.3 246.6l-2.7 5.9-3.4-6.8zM327.6 252.5l2.7-5.9 3.2 7zM330.3 246.6l6.1 1.1-2.9 5.9zM298.2 247.8l-3.3-6.6 5.8 .7zM298.2 247.8l-2.5 5.6-3.2-6.4zM298.2 247.8l5.7 .9-2.5 5.9zM320.9 238.8l6.1 .9-2.8 6zM299.2 216.6l5.9 .8-2.6 6zM365 298.3l.1 7.3-5.5-4.7zM308.4 224.2l-2.6 6-3.3-6.8zM577.4 527.3l-6.4-5.6 7-1.4zM571.5 514.7l-.5 7-6.5-5.5zM500.7 503.4l5.9 5.3-6.2 1.4zM488.7 499.7l-.2 6.6-5.8-5.2zM488.7 499.7l5.8 5.2-6 1.4zM482.9 494.5l5.8 5.2-6 1.4zM475.3 339.3l6.2 5.2-6.4 2.5zM475.3 339.3l-.2 7.7-6.1-5.2zM475.3 339.3l-6.3 2.5 .2-7.7zM475.5 331.5l-.2 7.8-6.1-5.2zM481.8 336.7l6.2 5.2-6.5 2.6zM488.3 334.1l-6.5 2.6 .2-7.7zM488 341.9l-6.2-5.2 6.5-2.6zM481.8 336.7l-6.5 2.6 .2-7.8zM566.1 398.8l-6.7-5.5 7.3-2.4zM559.4 393.3l-7.1 2.3 .5-7.9zM559.4 393.3l-.5 7.8-6.6-5.5zM560 385.3l-.6 8-6.6-5.6zM567.8 374.9l-6.8-5.5 7.4-2.5zM567.8 374.9l-7.3 2.5 .5-8zM560.5 377.4l7.3-2.5-.6 8zM574.6 380.5l-6.8-5.6 7.4-2.4zM579.2 506.1l-.6 7.1-6.5-5.6zM556.3 439.6l6.5 5.6-7 1.9zM555.8 447.1l6.5 5.6-7.1 1.9zM562.8 445.2l-.5 7.5-6.5-5.6zM541 465.6l6.3 5.5-6.8 1.8zM508.5 467.3l-.3 7.1-6.1-5.3zM501.8 476.1l6 5.3-6.3 1.6zM495.9 470.8l5.9 5.3-6.2 1.6zM501.8 476.1l6.4-1.7-.4 7zM502.1 469.1l-.3 7-5.9-5.3zM508.2 474.4l-6.4 1.7 .3-7zM507.8 481.4l6.4-1.7-.3 7zM508.2 474.4l6 5.3-6.4 1.7zM514.2 479.7l-6-5.3 6.4-1.7zM496.2 463.8l6.2-1.8-.3 7.1zM285.3 303.3l-.4-6.8 4.9 4.3zM288.4 227.6l-2.3 5.9-3.3-6.7zM288.4 227.6l5.8 .9-2.4 5.9zM308.3 290.6l.4 7.1-5.1-4.4zM308.7 297.7l-4.7 2.5-.4-6.9zM332 271.3l2.2-5.1 3.4 7.9zM317.6 271.5l-1.1-7.8 5.7 5.3zM312.6 267.9l5 3.6-5.2 2.9zM299.4 302.7l-.4-6.9 5 4.4zM304 300.2l-5-4.4 4.6-2.5zM294 291.4l5 4.4-4.6 2.5zM299 295.8l.4 6.9-5-4.4zM299 295.8l-.4-7.1 5 4.6zM299 295.8l-5-4.4 4.6-2.7zM304 300.2l5.1 4.5-4.7 2.5zM308.7 297.7l.4 7-5.1-4.5zM281.3 312.5l4.5-2.4 .4 6.7zM280.4 298.9l4.9 4.4-4.5 2.4zM354.9 317.8l.3 7.1-5.4-4.7zM350.1 327.4l5.1-2.5 .2 7.2zM355.4 332.1l-.2-7.2 5.3 4.8zM355.2 324.9l-.3-7.1 5.4 4.7zM294.8 305.2l-4.5 2.5-.5-6.9zM290.3 307.7l4.5-2.5 .4 6.9zM290.3 307.7l-5-4.4 4.5-2.5zM290.3 307.7l.4 6.8-4.9-4.4zM285.3 303.3l5 4.4-4.5 2.4zM284.4 289.7l5 4.3-4.5 2.5zM289 287.1l-4.6 2.6-.4-6.9zM289.4 294l-5-4.3 4.6-2.6zM284.4 289.7l-4.5 2.5-.5-6.8zM279.9 292.2l4.5-2.5 .5 6.8zM370.4 492.9l.2 6-5-4.6zM292.1 463.7l-.4-5.8 4.5 4.3zM291.7 457.9l.4 5.8-4.6-4.3zM291.7 457.9l4.1-1.5 .4 5.8zM295.8 456.4l-4.1 1.5-.5-5.9zM291.7 457.9l-4.6-4.3 4.1-1.6zM304.3 453.4l4.3-1.6 .3 6zM299.6 449l4.7 4.4-4.3 1.5zM304.3 453.4l.4 5.9-4.7-4.4zM304.3 453.4l4.6 4.4-4.2 1.5zM299.2 443l4.7 4.4-4.3 1.6zM303.9 447.4l.4 6-4.7-4.4zM304.3 453.4l-.4-6 4.7 4.4zM303.5 441.4l.4 6-4.7-4.4zM297.2 412.4l-4.3 1.8-.4-6.2zM296.8 406.2l.4 6.2-4.7-4.4zM292.9 414.2l-4.7-4.4 4.3-1.8zM297.6 418.6l4.3-1.7 .4 6.2zM292.9 414.2l4.7 4.4-4.3 1.8zM297.6 418.6l-.4-6.2 4.7 4.5zM297.2 412.4l.4 6.2-4.7-4.4zM298.4 430.9l4.3-1.7 .4 6.1zM293.8 426.5l4.6 4.4-4.2 1.7zM298.8 437l-.4-6.1 4.7 4.4zM294.2 432.6l4.2-1.7 .4 6.1zM298 424.8l-4.2 1.7-.5-6.1zM302.7 429.2l-4.7-4.4 4.3-1.7zM298 424.8l.4 6.1-4.6-4.4zM298.4 430.9l-.4-6.1 4.7 4.4zM298 424.8l-.4-6.2 4.7 4.5zM297.6 418.6l.4 6.2-4.7-4.4zM311.8 432l.4 6.1-4.8-4.4zM318 460.7l-.4-5.9 4.8 4.4zM313.3 456.3l4.3-1.5 .4 5.9zM326.8 457.7l-4.8-4.5 4.5-1.6zM321.7 447.1l.3 6.1-4.7-4.5zM317.6 454.8l4.4-1.6 .4 6zM317.6 454.8l-4.7-4.5 4.4-1.6zM308.6 451.8l4.3-1.5 .4 6zM312.9 450.3l4.7 4.5-4.3 1.5zM496.1 244.2l4.2-6.8 3.7 8zM492.4 236.4l3.7 7.8-7.8-1.1zM305.8 230.2l-2.6 5.9-3.3-6.7zM297.4 235.3l5.8 .8-2.5 5.8zM318.6 257l2.9-5.5 3.5 6.5zM320.9 238.8l-3.3-6.8 6 .9zM463.1 328.9l6.3-2.5-.2 7.7zM563.4 437.6l-.6 7.6-6.5-5.6zM563.4 437.6l-7.1 2 .5-7.6zM563.9 429.9l-.5 7.7-6.6-5.6zM301.5 410.6l-4.3 1.8-.4-6.2zM306.3 415.1l-4.8-4.5 4.4-1.8zM301.5 410.6l4.8 4.5-4.4 1.8zM297.2 412.4l4.3-1.8 .4 6.3zM305.9 408.8l-4.4 1.8-.4-6.2zM301.5 410.6l-4.7-4.4 4.3-1.8zM317.3 448.7l-4.8-4.5 4.4-1.6zM309 237l-3.2-6.8 5.9 .9zM306.5 243l-2.6 5.7-3.2-6.8zM306.5 243l5.8 .7-2.5 6.1zM309 237l-2.5 6-3.3-6.9zM307.1 255.2l5.9 1.6-2.9 5.2zM321.5 251.5l-6-1 2.7-5.8zM318.6 257l-3.1-6.5 6 1zM315.5 250.5l-3.2-6.8 5.9 1zM315.5 250.5l-2.5 6.3-3.2-7zM313 256.8l2.5-6.3 3.1 6.5zM317.6 232l-2.6 5.9-3.3-6.8zM315 237.9l5.9 .9-2.7 5.9zM309 237l6 .9-2.7 5.8zM305.6 327.8l-4.5 2.4-.5-6.9zM308.2 445.8l4.3-1.6 .4 6.1zM308.2 445.8l-4.3 1.6-.4-6zM303.9 447.4l4.3-1.6 .4 6zM308.2 445.8l4.7 4.5-4.3 1.5zM307.8 439.8l-4.3 1.6-.4-6.1zM312.5 444.2l-4.7-4.4 4.4-1.7zM307.8 439.8l.4 6-4.7-4.4zM308.2 445.8l-.4-6 4.7 4.4zM307.4 433.7l.4 6.1-4.7-4.5z"/>
<path fill="#00fa48" d="M597.6 458.2l-.7 7.6-6.8-5.7zM477.4 482.6l-6 1.6 .2-6.8zM490.5 451.5l-.3 7-5.9-5.2zM524.1 412.2l-6.3-5.4 6.7-2.2zM495.3 484.6l.3-6.9 5.9 5.3zM290 434.2l-4.2 1.6-.4-6zM281.2 431.5l-.4-6 4.6 4.3zM341.6 222.5l-3.4-7 6.3 .8zM594.7 405.5l-6.9-5.7 7.6-2.3zM587.1 407.8l.7-8 6.9 5.7zM544.7 405.6l7.1-2.2-.5 7.7zM517.8 406.8l-.4 7.6-6.2-5.4zM516.7 429.3l6.6-2.1-.4 7.5zM550.8 418.8l-.5 7.7-6.5-5.5zM536.4 430.6l6.9-2-.5 7.5zM550.3 426.5l-.5 7.6-6.5-5.5zM501 496.7l.3-6.8 5.9 5.2zM478.4 448.1l6.1-1.9-.2 7.1zM286.3 441.8l-.5-6 4.6 4.4zM608.9 330.2l-7.4-6.2 8.1-1.8zM508.5 318l-6.3-5.8 6.7-2.2zM502.2 312.2l6.3 5.8-6.6 2.6zM514.3 339.3l.4-8 6.5 5.5zM351.3 230.5l-3.4-7.1 6.3 .9zM343.2 279.6l5.2 4.2-5 3zM523.7 419.8l.4-7.6 6.4 5.4zM506.9 501.9l6.3-1.5-.3 6.8zM512.5 514l-5.9-5.3 6.3-1.5zM489.7 472.5l.3-7 5.9 5.3zM478.6 441l-.2 7.1-5.9-5.2zM278.5 271.6l5 4.4-4.5 2.5zM278 264.5l4.5-2.3 .4 7zM277.2 257.1l5.3 5.1-4.5 2.3zM276.1 243.9l2.3 6.6-5.4-1.1zM332.8 278l.4 7.1-5.4-4.6zM338.4 289.3l-.3-7.5 5.3 5zM333.2 285.1l4.9-3.3 .3 7.5zM477.8 469l.2-6.9 5.8 5.2zM478 462.1l-.2 6.9-5.8-5.2zM290.8 446.1l-4.5-4.3 4.1-1.6zM286.3 441.8l4.5 4.3-4.1 1.6zM299.2 443l.4 6-4.6-4.4zM601.5 324l-7.2-5.6 8.4-2.8zM526 293l4.3-6.6 3.6 8zM521.5 328.8l-6.5-5.7 6.8-2.2zM521.5 328.8l-6.8 2.5 .3-8.2zM514.7 331.3l6.8-2.5-.3 8zM344 301.3l5-2.7 .3 7.3zM348.4 283.8l.3 7.5-5.3-4.5zM348.7 291.3l-5 2.7-.3-7.2zM348.7 291.3l.3 7.3-5.3-4.6zM494.8 498.2l.3-6.8 5.9 5.3zM487.8 349.7l6.5-2.6-.3 7.8zM500.6 352.4l-6.3-5.3 6.6-2.6zM501.9 320.6l-6.7 3 .3-7.9zM544.2 413.3l.5-7.7 6.6 5.5zM544.7 405.6l-.5 7.7-6.4-5.4zM496.2 463.8l-6.2 1.7 .2-7zM490 465.5l6.2-1.7-.3 7zM477 496l-5.8-5.1 6-1.6zM471.2 490.9l-5.6-5.2 5.8-1.5zM477.2 489.3l-6 1.6 .2-6.7zM276.1 243.9l-5-.9 1-5.8zM270.1 230.9l5.2 .9-3.2 5.4zM266 231.5l4.1-.6 2 6.3zM270.1 230.9l-4.1 .6-.5-6.8zM333.4 292.2l5-2.9 .3 7.3zM333.7 299.3l-.3-7.1 5.3 4.4zM333.2 285.1l.2 7.1-5.3-4.6zM339.2 310.9l5-2.5 .3 7.2zM349.6 313.1l.2 7.1-5.3-4.6zM354.7 310.6l-5.1 2.5-.3-7.2zM478.4 448.1l-6 1.8 .1-7zM471.8 470.6l5.8 5.2-6 1.6zM472.2 456.9l.2-7 5.8 5.2zM602.3 306.6l-5.3-8.7 7.6 .9zM516.3 306.3l-2.5-8.7 7.3 1.1zM516.3 306.3l-1 8.5-6.4-4.8zM515.3 314.8l1-8.5 5.8 6.7zM526 293l3.7 8-8.6-2.3zM529.7 301l-.4 9.4-5.7-5zM536.2 315.7l-6.9-5.3 6.1-2.8zM330.7 259.8l-3 5.8-2.7-7.6zM327.7 265.6l3-5.8 3.5 6.4zM488.5 506.3l6-1.4-.2 6.6zM501.2 336.6l-6.3-5.1 6.6-2.8zM494.9 331.5l.3-7.9 6.3 5.1zM481.5 344.5l6.5-2.6-.2 7.8zM513.8 297.6l-3.8-7.6 7.9 .9zM541 465.6l-.5 7.3-6.2-5.5zM506.6 508.7l-.3 6.7-5.9-5.3zM489 493l-6.1 1.5 .2-6.7zM495.1 491.4l-6.1 1.6 .2-6.8zM507.8 481.4l6.1 5.3-6.4 1.6zM333.7 299.3l5.2 4.5-4.9 2.6zM338.9 303.8l-5.2-4.5 5-2.7zM354.7 310.6l.2 7.2-5.3-4.7zM472.4 449.9l-5.9-5.1 6-1.9zM287.1 453.6l-4.1 1.5-.4-5.9zM542.2 295l-3.8 6.7-4.5-7.3zM538.4 301.7l-8.7-.7 4.2-6.6zM538.4 301.7l4.2 9.4-7.2-3.5zM542.6 311.1l-4.2-9.4 7.3 1.6zM494.5 504.9l6.2-1.5-.3 6.7zM500.7 503.4l-6.2 1.5 .3-6.7zM506.9 501.9l-6.2 1.5 .3-6.7zM494.5 504.9l-5.8-5.2 6.1-1.5zM488.7 499.7l.3-6.7 5.8 5.2zM489 493l-.3 6.7-5.8-5.2zM475.3 339.3l6.5-2.6-.3 7.8zM481.8 336.7l-6.3-5.2 6.5-2.5zM547.3 471.1l-6.3-5.5 6.8-1.8zM495.6 477.7l6.2-1.6-.3 6.9zM322.5 276.3l-4.9-4.8 4.6-2.5zM355.2 324.9l-5.1 2.5-.3-7.2zM316.5 263.7l2.1-6.7 3.4 5.8zM313 256.8l5.6 .2-2.1 6.7z"/>
<path fill="#7cfa4e" d="M590.7 452.5l6.9 5.7-7.5 1.9zM477.4 482.6l.2-6.8 5.8 5.2zM477.6 475.8l-.2 6.8-5.8-5.2zM602.7 315.6l7.6-1.5-.7 8.1zM594.7 405.5l.7-8 7 5.7zM592.7 429.2l-.6 7.9-6.9-5.7zM592.1 437.1l-.7 7.7-6.8-5.7zM543.3 428.6l-6.4-5.5 6.9-2.1zM490.2 458.5l-6.1 1.8 .2-7zM483.1 487.8l-5.7-5.2 6-1.6zM489.2 486.2l-6.1 1.6 .3-6.8zM501.5 328.7l6.7-2.7-.3 8zM501.5 328.7l.4-8.1 6.3 5.4zM524.1 412.2l6.8-2.2-.4 7.6zM550.3 426.5l-7 2.1 .5-7.6zM495.3 484.6l-5.9-5.2 6.2-1.7zM483.6 474.1l5.8 5.3-6 1.6zM489.2 486.2l.2-6.8 5.9 5.2zM495.1 491.4l6.2-1.5-.3 6.8zM495.1 491.4l-5.9-5.2 6.1-1.6zM501.3 489.9l-6.2 1.5 .2-6.8zM477.4 482.6l-.2 6.7-5.8-5.1zM483.1 487.8l-5.9 1.5 .2-6.7zM478.2 455.1l.2-7 5.9 5.2zM601.5 324l1.2-8.4 6.9 6.6zM515 323.1l-.3 8.2-6.5-5.3zM508.2 326l6.5 5.3-6.8 2.7zM508.5 318l6.5 5.1-6.8 2.9zM501.9 320.6l6.6-2.6-.3 8zM514.7 331.3l-.4 8-6.4-5.3zM343.7 294l.3 7.3-5.3-4.7zM338.4 289.3l5.3 4.7-5 2.6zM537.3 415.5l-6.4-5.5 6.9-2.1zM530.9 410l6.4 5.5-6.8 2.1zM537.3 415.5l-.4 7.6-6.4-5.5zM536.9 423.1l.4-7.6 6.5 5.5zM489.7 472.5l6.2-1.7-.3 6.9zM489.7 472.5l-6.1 1.6 .2-6.8zM489.4 479.4l.3-6.9 5.9 5.2zM269.5 277.1l-.5-6.7 5 4.1zM279 278.5l-4.5 2.7-.5-6.7zM278.5 271.6l.5 6.9-5-4zM277.2 257.1l.8 7.4-4.9-3.1zM278.4 250.5l-1.2 6.6-4.2-7.7zM338.1 281.8l5.1-2.2 .2 7.2zM343.2 279.6l-5.1 2.2-.5-7.7zM338.1 281.8l-5.3-3.8 4.8-3.9zM338.1 281.8l-4.9 3.3-.4-7.1zM477.8 469l5.8 5.1-6 1.7zM478 462.1l.2-7 5.9 5.2zM285.8 435.8l-4.1 1.6-.5-5.9zM604.6 298.8l7.1 .4-.7 7.6zM602.3 306.6l2.3-7.8 6.4 8zM602.3 306.6l.4 9-7.1-4.8zM602.7 315.6l-.4-9 8 7.5zM602.3 306.6l8.7 .2-.7 7.3zM515 323.1l.3-8.3 6.5 6.1zM515.3 314.8l6.8-1.8-.3 7.9zM515.3 314.8l-6.8 3.2 .4-8zM508.5 318l6.8-3.2-.3 8.3zM343.7 294l5.3 4.6-5 2.7zM495.2 323.6l6.7-3-.4 8.1zM544.2 413.3l-6.9 2.2 .5-7.6zM550.8 418.8l-6.6-5.5 7.1-2.2zM544.2 413.3l6.6 5.5-7 2.2zM482.9 494.5l-5.7-5.2 5.9-1.5zM327.7 265.6l-5.7-2.8 3-4.8zM344.2 308.4l5.4 4.7-5.1 2.5zM344.2 308.4l-.2-7.1 5.3 4.6zM349.6 313.1l-5.4-4.7 5.1-2.5zM471.8 470.6l6-1.6-.2 6.8zM478 462.1l-5.8-5.2 6-1.8zM282.6 449.2l-.5-5.8 4.6 4.3zM282.1 443.4l-.4-6 4.6 4.4zM494.8 498.2l-5.8-5.2 6.1-1.6zM489 493l-5.9-5.2 6.1-1.6zM507.8 481.4l-.3 6.9-6-5.3zM327.2 273.1l5.6 4.9-5 2.5zM338.9 303.8l5.3 4.6-5 2.5zM344.2 308.4l-5.3-4.6 5.1-2.5zM344 301.3l-5.1 2.5-.2-7.2zM354.9 317.8l-5.1 2.4-.2-7.1zM287.1 453.6l-4.5-4.4 4.1-1.5zM506.6 508.7l-5.9-5.3 6.2-1.5zM500.7 503.4l-5.9-5.2 6.2-1.5zM332 271.3l-4.8 1.8 .5-7.5zM327.2 273.1l4.8-1.8 .8 6.7zM332.8 278l-.8-6.7 5.6 2.8zM322 262.8l-3.4-5.8 6.4 1z"/>
<path fill="#e4ff50" d="M592.7 429.2l.7-7.8 6.9 5.7zM592.7 429.2l-6.8-5.6 7.5-2.2zM597.6 458.2l-6.9-5.7 7.5-2zM593.4 421.4l7.6-2.2-.7 7.9zM594 413.5l7 5.7-7.6 2.2zM586.5 415.7l7.5-2.2-.6 7.9zM590.7 452.5l.7-7.7 6.8 5.7zM591.4 444.8l7.5-2-.7 7.7zM285.8 435.8l-4.6-4.3 4.2-1.7zM599.6 435l-6.9-5.8 7.6-2.1zM599.6 435l-7.5 2.1 .6-7.9zM601.7 411.2l-.7 8-7-5.7zM601.7 411.2l-7-5.7 7.7-2.3zM594.7 405.5l7 5.7-7.7 2.3zM587.1 407.8l7.6-2.3-.7 8zM477.6 475.8l6-1.7-.2 6.9zM489.4 479.4l-.2 6.8-5.8-5.2zM501.3 489.9l6.2-1.6-.3 6.8zM507.5 488.3l-6.2 1.6 .2-6.9zM501.3 489.9l-6-5.3 6.2-1.6zM268 257.3l4.3-2.4 .8 6.5zM267 244.6l6 4.8-5.5 1.2zM484.1 460.3l-5.9-5.2 6.1-1.8zM489.7 472.5l-.3 6.9-5.8-5.3zM484.1 460.3l5.9 5.2-6.2 1.8zM490 465.5l-.3 7-5.9-5.2zM272.3 254.9l4.9 2.2-4.1 4.3zM277.2 257.1l-4.9-2.2 .7-5.5zM266 231.5l6.1 5.7-5.6 .4zM483.6 474.1l-5.8-5.1 6-1.7zM478 462.1l6.1-1.8-.3 7zM286.3 441.8l-4.6-4.4 4.1-1.6zM537.3 415.5l6.9-2.2-.4 7.7zM278 264.5l-4.4 3.3-.5-6.4zM278.5 271.6l-4.9-3.8 4.4-3.3zM273.6 267.8l4.9 3.8-4.5 2.9zM273.6 267.8l-5.1-4 4.6-2.4zM273.6 267.8l-4.6 2.6-.5-6.6zM269 270.4l4.6-2.6 .4 6.7zM271.1 243l-4.1 1.6-.5-7zM272.1 237.2l-1 5.8-4.6-5.4zM267 244.6l4.1-1.6 1.9 6.4zM271.1 243l5 .9-3.1 5.5zM322 262.8l5.7 2.8-5.5 3.4zM478.2 455.1l-5.8-5.2 6-1.8zM282.1 443.4l4.2-1.6 .4 5.9zM327.7 265.6l-.5 7.5-5-4.1zM332 271.3l-4.3-5.7 6.5 .6z"/>
<path fill="#ffb63a" d="M268.5 263.8l-.5-6.5 5.1 4.1zM591.4 444.8l.7-7.7 6.8 5.7zM592.1 437.1l7.5-2.1-.7 7.8zM267.5 250.6l4.8 4.3-4.3 2.4zM273 249.4l-.7 5.5-4.8-4.3zM490 465.5l-5.9-5.2 6.1-1.8z"/>
</g>
<circle cx="351.5" cy="427.8" r="42.2" fill="#3a0ef2"/>
<path d="M349.0 385.8L356.1 386.0M349.0 385.8L352.7 387.5M349.0 385.8L344.8 387.8M356.1 386.0L360.5 388.1M356.1 386.0L352.7 387.5M331.0 391.2L337.4 389.0M331.0 391.2L332.3 393.3M331.0 391.2L325.9 395.5M337.4 389.0L344.8 387.8M337.4 389.0L340.0 391.8M337.4 389.0L332.3 393.3M344.8 387.8L352.7 387.5M344.8 387.8L348.5 391.1M344.8 387.8L340.0 391.8M352.7 387.5L360.5 388.1M352.7 387.5L357.1 391.2M352.7 387.5L348.5 391.1M360.5 388.1L367.6 389.6M360.5 388.1L365.4 392.2M360.5 388.1L357.1 391.2M367.6 389.6L373.6 392.0M367.6 389.6L372.7 393.9M367.6 389.6L365.4 392.2M373.6 392.0L378.7 396.3M373.6 392.0L372.7 393.9M321.3 398.4L325.9 395.5M321.3 398.4L321.1 401.2M321.3 398.4L317.0 403.9M325.9 395.5L332.3 393.3M325.9 395.5L327.2 399.1M325.9 395.5L321.1 401.2M332.3 393.3L340.0 391.8M332.3 393.3L334.8 397.5M332.3 393.3L327.2 399.1M340.0 391.8L348.5 391.1M340.0 391.8L343.6 396.6M340.0 391.8L334.8 397.5M348.5 391.1L357.1 391.2M348.5 391.1L352.9 396.4M348.5 391.1L343.6 396.6M357.1 391.2L365.4 392.2M357.1 391.2L362.1 396.8M357.1 391.2L352.9 396.4M365.4 392.2L372.7 393.9M365.4 392.2L370.6 397.9M365.4 392.2L362.1 396.8M372.7 393.9L378.7 396.3M372.7 393.9L377.9 399.7M372.7 393.9L370.6 397.9M378.7 396.3L383.4 402.0M378.7 396.3L377.9 399.7M317.0 403.9L321.1 401.2M317.0 403.9L316.7 407.8M317.0 403.9L313.4 410.0M321.1 401.2L327.2 399.1M321.1 401.2L322.2 406.0M321.1 401.2L316.7 407.8M327.2 399.1L334.8 397.5M327.2 399.1L329.6 404.6M327.2 399.1L322.2 406.0M334.8 397.5L343.6 396.6M334.8 397.5L338.4 403.6M334.8 397.5L329.6 404.6M343.6 396.6L352.9 396.4M343.6 396.6L348.0 403.2M343.6 396.6L338.4 403.6M352.9 396.4L362.1 396.8M352.9 396.4L357.9 403.2M352.9 396.4L348.0 403.2M362.1 396.8L370.6 397.9M362.1 396.8L367.3 403.8M362.1 396.8L357.9 403.2M370.6 397.9L377.9 399.7M370.6 397.9L375.8 404.9M370.6 397.9L367.3 403.8M377.9 399.7L383.4 402.0M377.9 399.7L382.6 406.5M377.9 399.7L375.8 404.9M383.4 402.0L387.5 408.5M383.4 402.0L382.6 406.5M313.4 410.0L316.7 407.8M313.4 410.0L313.2 414.9M313.4 410.0L310.9 416.5M316.7 407.8L322.2 406.0M316.7 407.8L317.9 413.6M316.7 407.8L313.2 414.9M322.2 406.0L329.6 404.6M322.2 406.0L324.7 412.5M322.2 406.0L317.9 413.6M329.6 404.6L338.4 403.6M329.6 404.6L333.2 411.7M329.6 404.6L324.7 412.5M338.4 403.6L348.0 403.2M338.4 403.6L342.8 411.2M338.4 403.6L333.2 411.7M348.0 403.2L357.9 403.2M348.0 403.2L353.0 411.1M348.0 403.2L342.8 411.2M357.9 403.2L367.3 403.8M357.9 403.2L363.1 411.3M357.9 403.2L353.0 411.1M367.3 403.8L375.8 404.9M367.3 403.8L372.5 411.9M367.3 403.8L363.1 411.3M375.8 404.9L382.6 406.5M375.8 404.9L380.5 412.8M375.8 404.9L372.5 411.9M382.6 406.5L387.5 408.5M382.6 406.5L386.8 413.9M382.6 406.5L380.5 412.8M387.5 408.5L390.8 415.4M387.5 408.5L386.8 413.9M310.9 416.5L313.2 414.9M310.9 416.5L310.7 422.0M313.2 414.9L317.9 413.6M313.2 414.9L314.4 421.3M313.2 414.9L310.7 422.0M317.9 413.6L324.7 412.5M317.9 413.6L320.3 420.7M317.9 413.6L314.4 421.3M324.7 412.5L333.2 411.7M324.7 412.5L328.3 420.2M324.7 412.5L320.3 420.7M333.2 411.7L342.8 411.2M333.2 411.7L337.6 419.9M333.2 411.7L328.3 420.2M342.8 411.2L353.0 411.1M342.8 411.2L347.8 419.8M342.8 411.2L337.6 419.9M353.0 411.1L363.1 411.3M353.0 411.1L358.3 419.8M353.0 411.1L347.8 419.8M363.1 411.3L372.5 411.9M363.1 411.3L368.3 420.0M363.1 411.3L358.3 419.8M372.5 411.9L380.5 412.8M372.5 411.9L377.3 420.3M372.5 411.9L368.3 420.0M380.5 412.8L386.8 413.9M380.5 412.8L384.7 420.8M380.5 412.8L377.3 420.3M386.8 413.9L390.8 415.4M386.8 413.9L390.0 421.5M386.8 413.9L384.7 420.8M390.8 415.4L392.9 422.2M390.8 415.4L390.0 421.5M310.7 422.0L314.4 421.3M310.7 422.0L312.0 428.6M310.7 422.0L309.6 428.5M314.4 421.3L320.3 420.7M314.4 421.3L316.9 428.7M314.4 421.3L312.0 428.6M320.3 420.7L328.3 420.2M320.3 420.7L323.9 428.8M320.3 420.7L316.9 428.7M328.3 420.2L337.6 419.9M328.3 420.2L332.7 428.8M328.3 420.2L323.9 428.8M337.6 419.9L347.8 419.8M337.6 419.9L342.6 428.8M337.6 419.9L332.7 428.8M347.8 419.8L358.3 419.8M347.8 419.8L353.1 428.9M347.8 419.8L342.6 428.8M358.3 419.8L368.3 420.0M358.3 419.8L363.5 428.8M358.3 419.8L353.1 428.9M368.3 420.0L377.3 420.3M368.3 420.0L373.1 428.8M368.3 420.0L363.5 428.8M377.3 420.3L384.7 420.8M377.3 420.3L381.4 428.7M377.3 420.3L373.1 428.8M384.7 420.8L390.0 421.5M384.7 420.8L387.8 428.7M384.7 420.8L381.4 428.7M390.0 421.5L392.9 422.2M390.0 421.5L392.0 428.6M390.0 421.5L387.8 428.7M392.9 422.2L392.0 428.6M309.6 428.5L312.0 428.6M309.6 428.5L310.9 435.1M312.0 428.6L316.9 428.7M312.0 428.6L314.5 436.0M312.0 428.6L310.9 435.1M316.9 428.7L323.9 428.8M316.9 428.7L320.5 436.7M316.9 428.7L314.5 436.0M323.9 428.8L332.7 428.8M323.9 428.8L328.3 437.3M323.9 428.8L320.5 436.7M332.7 428.8L342.6 428.8M332.7 428.8L337.7 437.7M332.7 428.8L328.3 437.3M342.6 428.8L353.1 428.9M342.6 428.8L347.8 437.9M342.6 428.8L337.7 437.7M353.1 428.9L363.5 428.8M353.1 428.9L358.3 437.8M353.1 428.9L347.8 437.9M363.5 428.8L373.1 428.8M363.5 428.8L368.3 437.6M363.5 428.8L358.3 437.8M373.1 428.8L381.4 428.7M373.1 428.8L377.2 437.2M373.1 428.8L368.3 437.6M381.4 428.7L387.8 428.7M381.4 428.7L384.5 436.5M381.4 428.7L377.2 437.2M387.8 428.7L392.0 428.6M387.8 428.7L389.8 435.8M387.8 428.7L384.5 436.5M392.0 428.6L392.7 434.8M392.0 428.6L389.8 435.8M310.9 435.1L314.5 436.0M310.9 435.1L313.5 442.2M314.5 436.0L320.5 436.7M314.5 436.0L318.1 443.7M314.5 436.0L313.5 442.2M320.5 436.7L328.3 437.3M320.5 436.7L324.9 444.9M320.5 436.7L318.1 443.7M328.3 437.3L337.7 437.7M328.3 437.3L333.3 445.8M328.3 437.3L324.9 444.9M337.7 437.7L347.8 437.9M337.7 437.7L342.9 446.3M337.7 437.7L333.3 445.8M347.8 437.9L358.3 437.8M347.8 437.9L353.0 446.5M347.8 437.9L342.9 446.3M358.3 437.8L368.3 437.6M358.3 437.8L363.0 446.2M358.3 437.8L353.0 446.5M368.3 437.6L377.2 437.2M368.3 437.6L372.3 445.6M368.3 437.6L363.0 446.2M377.2 437.2L384.5 436.5M377.2 437.2L380.3 444.6M377.2 437.2L372.3 445.6M384.5 436.5L389.8 435.8M384.5 436.5L386.5 443.2M384.5 436.5L380.3 444.6M389.8 435.8L392.7 434.8M389.8 435.8L390.4 441.6M389.8 435.8L386.5 443.2M392.7 434.8L390.4 441.6M313.5 442.2L318.1 443.7M313.5 442.2L317.1 449.1M313.5 442.2L313.9 446.8M318.1 443.7L324.9 444.9M318.1 443.7L322.6 451.1M318.1 443.7L317.1 449.1M324.9 444.9L333.3 445.8M324.9 444.9L329.9 452.6M324.9 444.9L322.6 451.1M333.3 445.8L342.9 446.3M333.3 445.8L338.6 453.6M333.3 445.8L329.9 452.6M342.9 446.3L353.0 446.5M342.9 446.3L348.1 454.1M342.9 446.3L338.6 453.6M353.0 446.5L363.0 446.2M353.0 446.5L357.8 454.0M353.0 446.5L348.1 454.1M363.0 446.2L372.3 445.6M363.0 446.2L367.1 453.4M363.0 446.2L357.8 454.0M372.3 445.6L380.3 444.6M372.3 445.6L375.5 452.2M372.3 445.6L367.1 453.4M380.3 444.6L386.5 443.2M380.3 444.6L382.3 450.5M380.3 444.6L375.5 452.2M386.5 443.2L390.4 441.6M386.5 443.2L387.1 448.4M386.5 443.2L382.3 450.5M390.4 441.6L387.1 448.4M313.9 446.8L317.1 449.1M313.9 446.8L317.6 452.7M317.1 449.1L322.6 451.1M317.1 449.1L321.6 455.5M317.1 449.1L317.6 452.7M322.6 451.1L329.9 452.6M322.6 451.1L327.5 457.8M322.6 451.1L321.6 455.5M329.9 452.6L338.6 453.6M329.9 452.6L335.1 459.4M329.9 452.6L327.5 457.8M338.6 453.6L348.1 454.1M338.6 453.6L343.7 460.4M338.6 453.6L335.1 459.4M348.1 454.1L357.8 454.0M348.1 454.1L352.9 460.6M348.1 454.1L343.7 460.4M357.8 454.0L367.1 453.4M357.8 454.0L361.9 460.1M357.8 454.0L352.9 460.6M367.1 453.4L375.5 452.2M367.1 453.4L370.3 459.0M367.1 453.4L361.9 460.1M375.5 452.2L382.3 450.5M375.5 452.2L377.4 457.1M375.5 452.2L370.3 459.0M382.3 450.5L387.1 448.4M382.3 450.5L382.9 454.7M382.3 450.5L377.4 457.1M387.1 448.4L382.9 454.7M317.6 452.7L321.6 455.5M321.6 455.5L327.5 457.8M321.6 455.5L326.5 460.9M327.5 457.8L335.1 459.4M327.5 457.8L332.7 463.2M327.5 457.8L326.5 460.9M335.1 459.4L343.7 460.4M335.1 459.4L340.2 464.8M335.1 459.4L332.7 463.2M343.7 460.4L352.9 460.6M343.7 460.4L348.5 465.5M343.7 460.4L340.2 464.8M352.9 460.6L361.9 460.1M352.9 460.6L357.0 465.4M352.9 460.6L348.5 465.5M361.9 460.1L370.3 459.0M361.9 460.1L365.1 464.4M361.9 460.1L357.0 465.4M370.3 459.0L377.4 457.1M370.3 459.0L372.3 462.6M370.3 459.0L365.1 464.4M377.4 457.1L382.9 454.7M377.4 457.1L378.1 460.1M377.4 457.1L372.3 462.6M382.9 454.7L378.1 460.1M326.5 460.9L332.7 463.2M326.5 460.9L331.5 464.9M332.7 463.2L340.2 464.8M332.7 463.2L337.8 467.1M332.7 463.2L331.5 464.9M340.2 464.8L348.5 465.5M340.2 464.8L345.0 468.4M340.2 464.8L337.8 467.1M348.5 465.5L357.0 465.4M348.5 465.5L352.7 468.7M348.5 465.5L345.0 468.4M357.0 465.4L365.1 464.4M357.0 465.4L360.2 468.1M357.0 465.4L352.7 468.7M365.1 464.4L372.3 462.6M365.1 464.4L367.2 466.5M365.1 464.4L360.2 468.1M372.3 462.6L378.1 460.1M372.3 462.6L367.2 466.5M331.5 464.9L337.8 467.1M337.8 467.1L345.0 468.4M345.0 468.4L352.7 468.7M352.7 468.7L360.2 468.1M360.2 468.1L367.2 466.5" stroke="#12064e" stroke-opacity=".42" stroke-width=".65" fill="none"/>
<circle cx="351.5" cy="427.8" r="42.0" fill="none" stroke="#1d0b7a" stroke-opacity=".55" stroke-width=".8"/>
</svg>
</div>

<!-- Legend -->
<svg class="abs" style="left:710px;top:448px" width="40" height="170" viewBox="710 448 40 170">
<rect x="717.1" y="453.90" width="19.1" height="13.07" fill="#ff3c28"/>
<rect x="717.1" y="466.92" width="19.1" height="13.07" fill="#ff6e2a"/>
<rect x="717.1" y="479.94" width="19.1" height="13.07" fill="#ffb63a"/>
<rect x="717.1" y="492.96" width="19.1" height="13.07" fill="#e4ff50"/>
<rect x="717.1" y="505.98" width="19.1" height="13.07" fill="#7cfa4e"/>
<rect x="717.1" y="519.00" width="19.1" height="13.07" fill="#00fa48"/>
<rect x="717.1" y="532.02" width="19.1" height="13.07" fill="#00f85e"/>
<rect x="717.1" y="545.04" width="19.1" height="13.07" fill="#00f69c"/>
<rect x="717.1" y="558.06" width="19.1" height="13.07" fill="#00fae8"/>
<rect x="717.1" y="571.08" width="19.1" height="13.07" fill="#28acfa"/>
<rect x="717.1" y="584.10" width="19.1" height="13.07" fill="#3858f4"/>
<rect x="717.1" y="597.12" width="19.1" height="13.07" fill="#3800f4"/>
<path d="M717 453.90H743M717 466.92H743M717 479.94H743M717 492.96H743M717 505.98H743M717 519.00H743M717 532.02H743M717 545.04H743M717 558.06H743M717 571.08H743M717 584.10H743M717 597.12H743M717 610.14H743" stroke="#101010" stroke-opacity=".75" stroke-width=".7" fill="none"/>
</svg>

<!-- Steps sidebar -->
<div id="side" class="abs"></div>
<div id="sidehdr" class="abs"></div>
<svg class="abs" style="left:853px;top:91px" width="171" height="548" viewBox="853 91 171 548">
<rect x="859.3" y="120.30" width="147.6" height="39.2" rx="3" fill="#fff" stroke="#dcdee0" stroke-width=".8"/>
<rect x="859.3" y="165.90" width="147.6" height="39.2" rx="3" fill="#fff" stroke="#dcdee0" stroke-width=".8"/>
<rect x="859.3" y="211.50" width="147.6" height="39.2" rx="3" fill="#fff" stroke="#dcdee0" stroke-width=".8"/>
<rect x="859.3" y="257.10" width="147.6" height="39.2" rx="3" fill="#fff" stroke="#dcdee0" stroke-width=".8"/>
<rect x="859.3" y="302.70" width="147.6" height="39.2" rx="3" fill="#fff" stroke="#dcdee0" stroke-width=".8"/>
<rect x="859.3" y="348.30" width="147.6" height="39.2" rx="3" fill="#fff" stroke="#dcdee0" stroke-width=".8"/>
<rect x="859.3" y="393.90" width="147.6" height="39.2" rx="3" fill="#fff" stroke="#dcdee0" stroke-width=".8"/>
<rect x="859.3" y="439.50" width="147.6" height="39.2" rx="3" fill="#fff" stroke="#dcdee0" stroke-width=".8"/>
<rect x="859.3" y="485.10" width="147.6" height="39.2" rx="3" fill="#fff" stroke="#dcdee0" stroke-width=".8"/>
<rect x="859.3" y="530.70" width="147.6" height="39.2" rx="3" fill="#fff" stroke="#dcdee0" stroke-width=".8"/>
<rect x="859.3" y="576.30" width="147.6" height="39.2" rx="3" fill="#198754" stroke="#157347" stroke-width=".8"/>
<rect x="859.3" y="621.90" width="147.6" height="39.2" rx="3" fill="#fff" stroke="#dcdee0" stroke-width=".8"/>
</svg>
<div id="sb" class="abs"></div>
<div id="thumb" class="abs"></div>
<svg class="abs" style="left:1012px;top:119px" width="11" height="520" viewBox="0 0 11 520" fill="none" stroke="#505050" stroke-width="1.400">
  <path d="M2.800 8l2.700-2.700 2.700 2.700"/>
  <path d="M2.800 511.500l2.700 2.700 2.700-2.700"/>
</svg>
<div class="t" style="left:76px;top:12px;font-size:8.2px;color:#3b3b40;transform:translate(0.30px,0.41px) scaleX(0.9117);">OpenRadioss</div>
<div class="t" style="left:191px;top:38px;font-size:9.2px;color:#15141a;transform:translate(0.20px,0.02px) scaleX(1.0024);-webkit-text-stroke:.2px #15141a;">localhost</div>
<div class="t" style="left:227px;top:38px;font-size:9.2px;color:#6d6d72;transform:translate(0.60px,0.02px) scaleX(0.9719);">:5000/read-result</div>
<div class="t" style="left:34px;top:67px;font-size:13.0px;color:#17191c;transform:translate(0.40px,0.98px) scaleX(0.9598);-webkit-text-stroke:.15px #17191c;">OpenRadioss</div>
<div class="t" style="left:925px;top:69px;font-size:10.4px;color:#6c757d;transform:translate(0.30px,0.69px) scaleX(1.0057);">Home</div>
<div class="t" style="left:972px;top:69px;font-size:10.4px;color:#6c757d;transform:translate(0.80px,0.69px) scaleX(0.9112);">Results</div>
<div class="t" style="left:14px;top:101px;font-size:10.4px;color:#3a3e42;transform:translate(0.30px,0.69px) scaleX(0.9363);">Result</div>
<div class="t" style="left:63px;top:101px;font-size:10.4px;color:#212529;transform:translate(0.80px,0.69px) scaleX(0.9844);">*0000.rad</div>
<div class="t" style="left:130px;top:101px;font-size:10.4px;color:#212529;transform:translate(0.50px,0.69px) scaleX(0.9755);">*0001.rad</div>
<div class="t" style="left:196px;top:101px;font-size:10.4px;color:#212529;transform:translate(0.60px,0.69px) scaleX(1.0137);">*.inp</div>
<div class="t" style="left:858px;top:100px;font-size:10.4px;color:#212529;transform:translate(0.70px,0.89px) scaleX(0.9288);">Steps</div>
<div class="t" style="left:749px;top:132px;font-size:17.3px;color:#181818;font-family:'Liberation Serif','DejaVu Serif',serif;font-weight:bold;transform:translate(0.80px,0.30px) scaleX(1.2067);-webkit-text-stroke:.5px #181818;">ALSADO</div>
<div class="t" style="left:717px;top:431px;font-size:10.0px;color:#ececec;transform:translate(0.50px,0.37px) scaleX(0.9572);">S, Mises</div>
<div class="t" style="left:746px;top:451px;font-size:10.0px;color:#ececec;transform:translate(0.80px,0.52px) scaleX(1.0124);">2.615040e+2</div>
<div class="t" style="left:812px;top:451px;font-size:10.0px;color:#ececec;transform:translate(0.60px,0.52px) scaleX(1.0004);">Max</div>
<div class="t" style="left:746px;top:464px;font-size:10.0px;color:#ececec;transform:translate(0.80px,0.56px) scaleX(1.0124);">2.397120e+2</div>
<div class="t" style="left:746px;top:477px;font-size:10.0px;color:#ececec;transform:translate(0.80px,0.60px) scaleX(1.0124);">2.179200e+2</div>
<div class="t" style="left:746px;top:490px;font-size:10.0px;color:#ececec;transform:translate(0.80px,0.64px) scaleX(1.0124);">1.961280e+2</div>
<div class="t" style="left:746px;top:503px;font-size:10.0px;color:#ececec;transform:translate(0.80px,0.68px) scaleX(1.0124);">1.743360e+2</div>
<div class="t" style="left:746px;top:516px;font-size:10.0px;color:#ececec;transform:translate(0.80px,0.72px) scaleX(1.0124);">1.525440e+2</div>
<div class="t" style="left:746px;top:529px;font-size:10.0px;color:#ececec;transform:translate(0.80px,0.76px) scaleX(1.0124);">1.307520e+2</div>
<div class="t" style="left:746px;top:542px;font-size:10.0px;color:#ececec;transform:translate(0.80px,0.80px) scaleX(1.0124);">1.089600e+2</div>
<div class="t" style="left:746px;top:555px;font-size:10.0px;color:#ececec;transform:translate(0.80px,0.84px) scaleX(1.0124);">8.716800e+1</div>
<div class="t" style="left:746px;top:568px;font-size:10.0px;color:#ececec;transform:translate(0.80px,0.88px) scaleX(1.0124);">6.537600e+1</div>
<div class="t" style="left:746px;top:581px;font-size:10.0px;color:#ececec;transform:translate(0.80px,0.92px) scaleX(1.0124);">4.358400e+1</div>
<div class="t" style="left:746px;top:594px;font-size:10.0px;color:#ececec;transform:translate(0.80px,0.96px) scaleX(1.0124);">2.179200e+1</div>
<div class="t" style="left:746px;top:607px;font-size:10.0px;color:#ececec;transform:translate(0.80px,1.00px) scaleX(1.0124);">0.000000e+0</div>
<div class="t" style="left:812px;top:607px;font-size:10.0px;color:#ececec;transform:translate(0.60px,1.00px) scaleX(1.0426);">Min</div>
<div class="t" style="left:871px;top:136px;font-size:10.4px;color:#212529;transform:translate(0.70px,0.79px) scaleX(0.9919);">bulletA079.vtk</div>
<div class="t" style="left:871px;top:182px;font-size:10.4px;color:#212529;transform:translate(0.70px,0.39px) scaleX(0.9919);">bulletA080.vtk</div>
<div class="t" style="left:871px;top:227px;font-size:10.4px;color:#212529;transform:translate(0.70px,0.99px) scaleX(0.9919);">bulletA081.vtk</div>
<div class="t" style="left:871px;top:273px;font-size:10.4px;color:#212529;transform:translate(0.70px,0.59px) scaleX(0.9919);">bulletA082.vtk</div>
<div class="t" style="left:871px;top:319px;font-size:10.4px;color:#212529;transform:translate(0.70px,0.19px) scaleX(0.9919);">bulletA083.vtk</div>
<div class="t" style="left:871px;top:364px;font-size:10.4px;color:#212529;transform:translate(0.70px,0.79px) scaleX(0.9919);">bulletA084.vtk</div>
<div class="t" style="left:871px;top:410px;font-size:10.4px;color:#212529;transform:translate(0.70px,0.39px) scaleX(0.9919);">bulletA085.vtk</div>
<div class="t" style="left:871px;top:455px;font-size:10.4px;color:#212529;transform:translate(0.70px,0.99px) scaleX(0.9919);">bulletA086.vtk</div>
<div class="t" style="left:871px;top:501px;font-size:10.4px;color:#212529;transform:translate(0.70px,0.59px) scaleX(0.9919);">bulletA087.vtk</div>
<div class="t" style="left:871px;top:547px;font-size:10.4px;color:#212529;transform:translate(0.70px,0.19px) scaleX(0.9919);">bulletA088.vtk</div>
<div class="t" style="left:871px;top:592px;font-size:10.4px;color:#fff;transform:translate(0.70px,0.79px) scaleX(0.9919);">bulletA089.vtk</div>
<!-- window frame -->
<div class="abs" style="left:0;top:0;width:1px;height:639px;background:#4a4a4a"></div>
<div class="abs" style="left:1023px;top:0;width:1px;height:639px;background:#8a8a8a"></div>
<div class="abs" style="left:0;top:638px;width:853px;height:1px;background:#3c3c3c"></div>
<div class="abs" style="left:853px;top:638px;width:171px;height:1px;background:#8a8a8a"></div>
</body>
</html>
